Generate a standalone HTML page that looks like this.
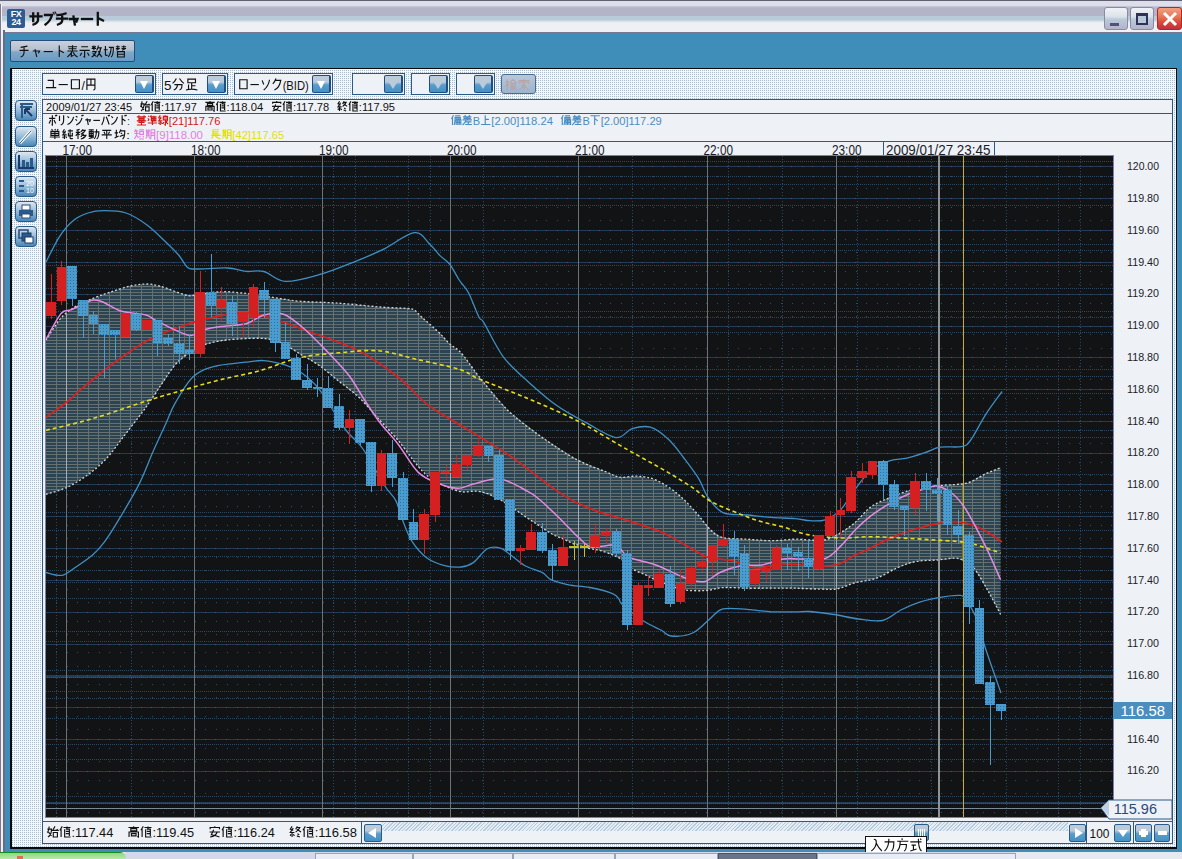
<!DOCTYPE html>
<html><head><meta charset="utf-8"><title>サブチャート</title>
<style>
*{box-sizing:border-box}
html,body{margin:0;padding:0}
body{width:1182px;height:859px;overflow:hidden;position:relative;background:#3f8db9;font-family:"Liberation Sans",sans-serif;color:#111}
.a{position:absolute}
.dd{position:absolute;top:73px;height:22px;background:#eef2f6;border:1px solid #2c5a8a;font-size:13px;line-height:20px;padding-left:3px;color:#1a1a1a;white-space:nowrap;overflow:hidden}
.ddb{position:absolute;top:1px;right:1px;width:19px;height:18px;border:1px solid #1e4e86;border-right-width:2px;border-radius:2px;background:linear-gradient(#bccbd9 0,#bccbd9 38%,#5a9ccb 55%,#4292c4 100%)}
.ddb:after{content:"";position:absolute;left:4px;top:5px;border-left:4px solid transparent;border-right:4px solid transparent;border-top:8px solid #fff}
.ddb.e:after{border-top-color:#bccbd9;left:3px;border-left-width:5px;border-right-width:5px}
.ico{position:absolute;left:15px;width:22px;height:21px;border:1px solid #2a5a8a;border-radius:4px;background:linear-gradient(#dfe8f0,#9cc0dc 45%,#4a88b8)}
.pl{position:absolute;left:1127px;font-size:11px;line-height:12px;color:#1a1a2a;letter-spacing:-0.3px}
.tl{position:absolute;top:143px;font-size:13px;line-height:14px;color:#1a1a2a;letter-spacing:-0.6px}
.t11{font-size:11px;line-height:13px;letter-spacing:-0.2px;white-space:nowrap}
.btn{position:absolute;border:1px solid #2a5a8a;border-radius:2px;background:linear-gradient(#bccbd9 0,#bccbd9 35%,#5a9ccb 55%,#4292c4 100%)}
.tab{position:absolute;top:853px;height:6px;background:#e8ecf4;border:1px solid #9aa4b8;border-bottom:none}
</style></head><body>
<!-- title bar -->
<div class="a" style="left:0;top:0;width:1182px;height:34px;background:linear-gradient(#606072 0,#606072 1px,#dcdfe9 1px,#dcdfe9 6px,#c8c8d8 6px,#b4b4c8 8px,#b4b4c8 16px,#b9cbd8 16px,#b9cbd8 20px,#d6e0e8 21px,#eef0f4 23px,#eef0f4 32px,#787896 32px,#787896 34px)"></div>
<!-- window left border -->
<div class="a" style="left:0;top:4px;width:2px;height:30px;background:linear-gradient(90deg,#7a7a8c 0,#7a7a8c 1px,#f4f4f8 1px)"></div>
<div class="a" style="left:0;top:30px;width:5px;height:829px;background:linear-gradient(90deg,#7a7a8c 0,#7a7a8c 1px,#eef0f4 1px,#eef0f4 3px,#6a6a80 3px,#6a6a80 5px)"></div>
<!-- FX24 icon -->
<div class="a" style="left:7px;top:9px;width:18px;height:19px;background:#2c5c92;border-radius:2px;color:#fff;font-weight:bold;font-size:9px;line-height:8px;text-align:center;padding-top:1px;letter-spacing:-0.5px">FX<br>24</div>

<!-- window buttons -->
<div class="a" style="left:1104px;top:7px;width:24px;height:23px;border:1px solid #8a8aa8;border-radius:3px;background:linear-gradient(#f0f2f6,#dde2ea 40%,#b8cad8 55%,#b4b4c8)"><div class="a" style="left:5px;top:15px;width:9px;height:3px;background:#50507a"></div></div>
<div class="a" style="left:1130px;top:7px;width:24px;height:23px;border:1px solid #8a8aa8;border-radius:3px;background:linear-gradient(#f0f2f6,#dde2ea 40%,#b8cad8 55%,#b4b4c8)"><div class="a" style="left:5px;top:5px;width:12px;height:12px;border:2px solid #30305a;border-top-width:3px;background:#b8cad8"></div></div>
<div class="a" style="left:1157px;top:7px;width:25px;height:23px;border:1px solid #c02020;border-radius:3px;background:linear-gradient(#f0a080,#e87858 40%,#d84838 70%,#c03040)"><svg class="a" style="left:4px;top:3px" width="16" height="16"><path d="M2,2 L14,14 M14,2 L2,14" stroke="#fff" stroke-width="3"/></svg></div>

<!-- top button -->
<div class="a" style="left:10px;top:40px;width:125px;height:22px;border:1px solid #2a4a78;border-radius:2px;background:linear-gradient(#c8d0dc,#b4c0d0 45%,#80a8c8 55%,#6a9cc4);font-size:13px;line-height:20px;padding-left:4px;color:#111;letter-spacing:-0.5px;white-space:nowrap"></div>

<!-- main panel -->
<div class="a" style="left:10px;top:68px;width:1167px;height:781px;background:#e2e8ef;border-left:2px solid #0a0a0a;border-top:1px solid #0a0a0a;border-right:1px solid #0a0a0a;border-bottom:2px solid #0a0a0a"></div>
<svg class="a" style="left:12px;top:69px" width="1164" height="778"><defs><pattern id="pdots" patternUnits="userSpaceOnUse" width="2" height="2"><rect width="2" height="2" fill="#f4f6f9"/><rect x="0" y="1" width="1" height="1" fill="#a8bcd0"/></pattern></defs><rect width="1164" height="778" fill="url(#pdots)"/></svg>

<!-- dropdowns -->
<div class="dd" style="left:42px;width:114px"><div class="ddb"></div></div>
<div class="dd" style="left:162px;width:66px"><div class="ddb"></div></div>
<div class="dd" style="left:234px;width:99px"><div class="ddb"></div></div>
<div class="dd" style="left:352px;width:53px"><div class="ddb e"></div></div>
<div class="dd" style="left:411px;width:39px"><div class="ddb e"></div></div>
<div class="dd" style="left:456px;width:39px"><div class="ddb e"></div></div>
<div class="a" style="left:501px;top:74px;width:35px;height:20px;border:1px solid #4a6a90;border-radius:3px;background:linear-gradient(#b8c8d8,#9cb4cc);font-size:12px;line-height:18px;text-align:center;color:#c0a8a8"></div>

<!-- left icons -->
<div class="ico" style="top:100px"><svg class="a" style="left:0;top:0" width="20" height="19"><path d="M4,3 H17 M6,3 V17 M4,6 H16" stroke="#2a5a8a" stroke-width="2" fill="none"/><path d="M9,8 L16,15 M9,8 V13 M9,8 H14" stroke="#1a3a6a" stroke-width="2" fill="none"/></svg></div>
<div class="ico" style="top:126px"><svg class="a" style="left:0;top:0" width="20" height="19"><path d="M4,16 L15,4" stroke="#fff" stroke-width="3"/><path d="M4,16 L15,4" stroke="#2a5a8a" stroke-width="1"/></svg></div>
<div class="ico" style="top:151px"><svg class="a" style="left:0;top:0" width="20" height="19"><path d="M3,3 V16 H18" stroke="#1a3a6a" stroke-width="2" fill="none"/><rect x="6" y="8" width="3" height="7" fill="#2a5a8a"/><rect x="10" y="10" width="3" height="5" fill="#2a5a8a"/><rect x="14" y="6" width="3" height="9" fill="#2a5a8a"/></svg></div>
<div class="ico" style="top:176px"><svg class="a" style="left:0;top:0" width="20" height="19"><path d="M3,4 H8 M3,9 H8 M3,14 H8" stroke="#2a5a8a" stroke-width="2"/><text x="10" y="9" font-size="7" fill="#fff" font-family="Liberation Sans">20</text><text x="10" y="16" font-size="7" fill="#fff" font-family="Liberation Sans">10</text></svg></div>
<div class="ico" style="top:201px"><svg class="a" style="left:0;top:0" width="20" height="19"><rect x="6" y="3" width="8" height="5" fill="#fff" stroke="#2a4a7a"/><rect x="3" y="8" width="14" height="6" fill="#2a5a8a"/><rect x="6" y="12" width="8" height="4" fill="#fff" stroke="#2a4a7a"/></svg></div>
<div class="ico" style="top:226px"><svg class="a" style="left:0;top:0" width="20" height="19"><rect x="3" y="3" width="9" height="8" fill="none" stroke="#2a4a7a" stroke-width="1.5"/><rect x="6" y="6" width="9" height="8" fill="#2a5a8a" stroke="#1a3a6a"/><rect x="9" y="10" width="8" height="6" fill="#fff" stroke="#1a3a6a"/></svg></div>

<!-- info box -->
<div class="a" style="left:42px;top:99px;width:1131px;height:43px;background:#eef2f6;border:1px solid #2a5a8a"></div>
<div class="a" style="left:43px;top:113px;width:1129px;height:1px;background:#2a5a8a"></div>

<!-- time axis & chart frame area -->
<div class="a" style="left:42px;top:141px;width:1131px;height:681px;background:#eef2f6;border-left:1px solid #2a5a8a;border-right:1px solid #2a5a8a"></div>
<div class="a" style="left:43px;top:141px;width:1129px;height:1px;background:#2a5a8a"></div>
<div class="a" style="left:883px;top:141px;width:112px;height:15px;border:1px solid #2a5a8a;background:#eef2f6"></div>
<!-- chart border -->
<div class="a" style="left:45px;top:155px;width:1069px;height:663px;border:1px solid #7e80ac"></div>
<svg width="1067" height="661" viewBox="46 156 1067 661" style="position:absolute;left:46px;top:156px;display:block" shape-rendering="crispEdges">
<defs>
<pattern id="band" patternUnits="userSpaceOnUse" x="0" y="0" width="10.667" height="6">
<rect x="0" y="0" width="10.667" height="6" fill="#2f4653"/>
<rect x="0" y="0" width="10.667" height="1" fill="#6a7474"/>
<rect x="0" y="3" width="10.667" height="1" fill="#6a7474"/>
<rect x="0" y="0" width="1" height="6" fill="#6a7474"/>
</pattern>
<pattern id="bdots" patternUnits="userSpaceOnUse" width="3" height="3">
<rect width="3" height="3" fill="#4a9cce"/>
<rect x="1" y="1" width="1" height="1" fill="#2f6f9f"/>
</pattern>
</defs>
<rect x="46" y="156" width="1067" height="661" fill="#111314"/>
<line x1="46" y1="161.5" x2="1113" y2="161.5" stroke="#26486a" stroke-width="1" stroke-dasharray="1 1"/>
<line x1="46" y1="176.5" x2="1113" y2="176.5" stroke="#26486a" stroke-width="1" stroke-dasharray="1 1"/>
<line x1="46" y1="184.5" x2="1113" y2="184.5" stroke="#26486a" stroke-width="1" stroke-dasharray="1 1"/>
<path d="M56,176h1v1h-1zM67,176h1v1h-1zM77,176h1v1h-1zM88,176h1v1h-1zM99,176h1v1h-1zM109,176h1v1h-1zM120,176h1v1h-1zM131,176h1v1h-1zM141,176h1v1h-1zM152,176h1v1h-1zM163,176h1v1h-1zM173,176h1v1h-1zM184,176h1v1h-1zM195,176h1v1h-1zM205,176h1v1h-1zM216,176h1v1h-1zM227,176h1v1h-1zM237,176h1v1h-1zM248,176h1v1h-1zM259,176h1v1h-1zM269,176h1v1h-1zM280,176h1v1h-1zM291,176h1v1h-1zM301,176h1v1h-1zM312,176h1v1h-1zM323,176h1v1h-1zM333,176h1v1h-1zM344,176h1v1h-1zM354,176h1v1h-1zM365,176h1v1h-1zM376,176h1v1h-1zM386,176h1v1h-1zM397,176h1v1h-1zM408,176h1v1h-1zM418,176h1v1h-1zM429,176h1v1h-1zM440,176h1v1h-1zM450,176h1v1h-1zM461,176h1v1h-1zM472,176h1v1h-1zM482,176h1v1h-1zM493,176h1v1h-1zM504,176h1v1h-1zM514,176h1v1h-1zM525,176h1v1h-1zM536,176h1v1h-1zM546,176h1v1h-1zM557,176h1v1h-1zM568,176h1v1h-1zM578,176h1v1h-1zM589,176h1v1h-1zM600,176h1v1h-1zM610,176h1v1h-1zM621,176h1v1h-1zM632,176h1v1h-1zM642,176h1v1h-1zM653,176h1v1h-1zM664,176h1v1h-1zM674,176h1v1h-1zM685,176h1v1h-1zM696,176h1v1h-1zM706,176h1v1h-1zM717,176h1v1h-1zM728,176h1v1h-1zM738,176h1v1h-1zM749,176h1v1h-1zM760,176h1v1h-1zM770,176h1v1h-1zM781,176h1v1h-1zM792,176h1v1h-1zM802,176h1v1h-1zM813,176h1v1h-1zM824,176h1v1h-1zM834,176h1v1h-1zM845,176h1v1h-1zM856,176h1v1h-1zM866,176h1v1h-1zM877,176h1v1h-1zM887,176h1v1h-1zM898,176h1v1h-1zM909,176h1v1h-1zM919,176h1v1h-1zM930,176h1v1h-1zM941,176h1v1h-1zM951,176h1v1h-1zM962,176h1v1h-1zM973,176h1v1h-1zM983,176h1v1h-1zM994,176h1v1h-1zM1005,176h1v1h-1zM1015,176h1v1h-1zM1026,176h1v1h-1zM1037,176h1v1h-1zM1047,176h1v1h-1zM1058,176h1v1h-1zM1069,176h1v1h-1zM1079,176h1v1h-1zM1090,176h1v1h-1zM1101,176h1v1h-1zM1111,176h1v1h-1z" fill="#2c5070"/>
<path d="M56,188h1v1h-1zM67,188h1v1h-1zM77,188h1v1h-1zM88,188h1v1h-1zM99,188h1v1h-1zM109,188h1v1h-1zM120,188h1v1h-1zM131,188h1v1h-1zM141,188h1v1h-1zM152,188h1v1h-1zM163,188h1v1h-1zM173,188h1v1h-1zM184,188h1v1h-1zM195,188h1v1h-1zM205,188h1v1h-1zM216,188h1v1h-1zM227,188h1v1h-1zM237,188h1v1h-1zM248,188h1v1h-1zM259,188h1v1h-1zM269,188h1v1h-1zM280,188h1v1h-1zM291,188h1v1h-1zM301,188h1v1h-1zM312,188h1v1h-1zM323,188h1v1h-1zM333,188h1v1h-1zM344,188h1v1h-1zM354,188h1v1h-1zM365,188h1v1h-1zM376,188h1v1h-1zM386,188h1v1h-1zM397,188h1v1h-1zM408,188h1v1h-1zM418,188h1v1h-1zM429,188h1v1h-1zM440,188h1v1h-1zM450,188h1v1h-1zM461,188h1v1h-1zM472,188h1v1h-1zM482,188h1v1h-1zM493,188h1v1h-1zM504,188h1v1h-1zM514,188h1v1h-1zM525,188h1v1h-1zM536,188h1v1h-1zM546,188h1v1h-1zM557,188h1v1h-1zM568,188h1v1h-1zM578,188h1v1h-1zM589,188h1v1h-1zM600,188h1v1h-1zM610,188h1v1h-1zM621,188h1v1h-1zM632,188h1v1h-1zM642,188h1v1h-1zM653,188h1v1h-1zM664,188h1v1h-1zM674,188h1v1h-1zM685,188h1v1h-1zM696,188h1v1h-1zM706,188h1v1h-1zM717,188h1v1h-1zM728,188h1v1h-1zM738,188h1v1h-1zM749,188h1v1h-1zM760,188h1v1h-1zM770,188h1v1h-1zM781,188h1v1h-1zM792,188h1v1h-1zM802,188h1v1h-1zM813,188h1v1h-1zM824,188h1v1h-1zM834,188h1v1h-1zM845,188h1v1h-1zM856,188h1v1h-1zM866,188h1v1h-1zM877,188h1v1h-1zM887,188h1v1h-1zM898,188h1v1h-1zM909,188h1v1h-1zM919,188h1v1h-1zM930,188h1v1h-1zM941,188h1v1h-1zM951,188h1v1h-1zM962,188h1v1h-1zM973,188h1v1h-1zM983,188h1v1h-1zM994,188h1v1h-1zM1005,188h1v1h-1zM1015,188h1v1h-1zM1026,188h1v1h-1zM1037,188h1v1h-1zM1047,188h1v1h-1zM1058,188h1v1h-1zM1069,188h1v1h-1zM1079,188h1v1h-1zM1090,188h1v1h-1zM1101,188h1v1h-1zM1111,188h1v1h-1z" fill="#2c5070"/>
<line x1="46" y1="205.5" x2="1113" y2="205.5" stroke="#26486a" stroke-width="1" stroke-dasharray="1 1"/>
<path d="M56,207h1v1h-1zM67,207h1v1h-1zM77,207h1v1h-1zM88,207h1v1h-1zM99,207h1v1h-1zM109,207h1v1h-1zM120,207h1v1h-1zM131,207h1v1h-1zM141,207h1v1h-1zM152,207h1v1h-1zM163,207h1v1h-1zM173,207h1v1h-1zM184,207h1v1h-1zM195,207h1v1h-1zM205,207h1v1h-1zM216,207h1v1h-1zM227,207h1v1h-1zM237,207h1v1h-1zM248,207h1v1h-1zM259,207h1v1h-1zM269,207h1v1h-1zM280,207h1v1h-1zM291,207h1v1h-1zM301,207h1v1h-1zM312,207h1v1h-1zM323,207h1v1h-1zM333,207h1v1h-1zM344,207h1v1h-1zM354,207h1v1h-1zM365,207h1v1h-1zM376,207h1v1h-1zM386,207h1v1h-1zM397,207h1v1h-1zM408,207h1v1h-1zM418,207h1v1h-1zM429,207h1v1h-1zM440,207h1v1h-1zM450,207h1v1h-1zM461,207h1v1h-1zM472,207h1v1h-1zM482,207h1v1h-1zM493,207h1v1h-1zM504,207h1v1h-1zM514,207h1v1h-1zM525,207h1v1h-1zM536,207h1v1h-1zM546,207h1v1h-1zM557,207h1v1h-1zM568,207h1v1h-1zM578,207h1v1h-1zM589,207h1v1h-1zM600,207h1v1h-1zM610,207h1v1h-1zM621,207h1v1h-1zM632,207h1v1h-1zM642,207h1v1h-1zM653,207h1v1h-1zM664,207h1v1h-1zM674,207h1v1h-1zM685,207h1v1h-1zM696,207h1v1h-1zM706,207h1v1h-1zM717,207h1v1h-1zM728,207h1v1h-1zM738,207h1v1h-1zM749,207h1v1h-1zM760,207h1v1h-1zM770,207h1v1h-1zM781,207h1v1h-1zM792,207h1v1h-1zM802,207h1v1h-1zM813,207h1v1h-1zM824,207h1v1h-1zM834,207h1v1h-1zM845,207h1v1h-1zM856,207h1v1h-1zM866,207h1v1h-1zM877,207h1v1h-1zM887,207h1v1h-1zM898,207h1v1h-1zM909,207h1v1h-1zM919,207h1v1h-1zM930,207h1v1h-1zM941,207h1v1h-1zM951,207h1v1h-1zM962,207h1v1h-1zM973,207h1v1h-1zM983,207h1v1h-1zM994,207h1v1h-1zM1005,207h1v1h-1zM1015,207h1v1h-1zM1026,207h1v1h-1zM1037,207h1v1h-1zM1047,207h1v1h-1zM1058,207h1v1h-1zM1069,207h1v1h-1zM1079,207h1v1h-1zM1090,207h1v1h-1zM1101,207h1v1h-1zM1111,207h1v1h-1z" fill="#2c5070"/>
<path d="M56,220h1v1h-1zM67,220h1v1h-1zM77,220h1v1h-1zM88,220h1v1h-1zM99,220h1v1h-1zM109,220h1v1h-1zM120,220h1v1h-1zM131,220h1v1h-1zM141,220h1v1h-1zM152,220h1v1h-1zM163,220h1v1h-1zM173,220h1v1h-1zM184,220h1v1h-1zM195,220h1v1h-1zM205,220h1v1h-1zM216,220h1v1h-1zM227,220h1v1h-1zM237,220h1v1h-1zM248,220h1v1h-1zM259,220h1v1h-1zM269,220h1v1h-1zM280,220h1v1h-1zM291,220h1v1h-1zM301,220h1v1h-1zM312,220h1v1h-1zM323,220h1v1h-1zM333,220h1v1h-1zM344,220h1v1h-1zM354,220h1v1h-1zM365,220h1v1h-1zM376,220h1v1h-1zM386,220h1v1h-1zM397,220h1v1h-1zM408,220h1v1h-1zM418,220h1v1h-1zM429,220h1v1h-1zM440,220h1v1h-1zM450,220h1v1h-1zM461,220h1v1h-1zM472,220h1v1h-1zM482,220h1v1h-1zM493,220h1v1h-1zM504,220h1v1h-1zM514,220h1v1h-1zM525,220h1v1h-1zM536,220h1v1h-1zM546,220h1v1h-1zM557,220h1v1h-1zM568,220h1v1h-1zM578,220h1v1h-1zM589,220h1v1h-1zM600,220h1v1h-1zM610,220h1v1h-1zM621,220h1v1h-1zM632,220h1v1h-1zM642,220h1v1h-1zM653,220h1v1h-1zM664,220h1v1h-1zM674,220h1v1h-1zM685,220h1v1h-1zM696,220h1v1h-1zM706,220h1v1h-1zM717,220h1v1h-1zM728,220h1v1h-1zM738,220h1v1h-1zM749,220h1v1h-1zM760,220h1v1h-1zM770,220h1v1h-1zM781,220h1v1h-1zM792,220h1v1h-1zM802,220h1v1h-1zM813,220h1v1h-1zM824,220h1v1h-1zM834,220h1v1h-1zM845,220h1v1h-1zM856,220h1v1h-1zM866,220h1v1h-1zM877,220h1v1h-1zM887,220h1v1h-1zM898,220h1v1h-1zM909,220h1v1h-1zM919,220h1v1h-1zM930,220h1v1h-1zM941,220h1v1h-1zM951,220h1v1h-1zM962,220h1v1h-1zM973,220h1v1h-1zM983,220h1v1h-1zM994,220h1v1h-1zM1005,220h1v1h-1zM1015,220h1v1h-1zM1026,220h1v1h-1zM1037,220h1v1h-1zM1047,220h1v1h-1zM1058,220h1v1h-1zM1069,220h1v1h-1zM1079,220h1v1h-1zM1090,220h1v1h-1zM1101,220h1v1h-1zM1111,220h1v1h-1z" fill="#2c5070"/>
<line x1="46" y1="244.5" x2="1113" y2="244.5" stroke="#26486a" stroke-width="1" stroke-dasharray="1 1"/>
<line x1="46" y1="250.5" x2="1113" y2="250.5" stroke="#26486a" stroke-width="1" stroke-dasharray="1 1"/>
<path d="M56,239h1v1h-1zM67,239h1v1h-1zM77,239h1v1h-1zM88,239h1v1h-1zM99,239h1v1h-1zM109,239h1v1h-1zM120,239h1v1h-1zM131,239h1v1h-1zM141,239h1v1h-1zM152,239h1v1h-1zM163,239h1v1h-1zM173,239h1v1h-1zM184,239h1v1h-1zM195,239h1v1h-1zM205,239h1v1h-1zM216,239h1v1h-1zM227,239h1v1h-1zM237,239h1v1h-1zM248,239h1v1h-1zM259,239h1v1h-1zM269,239h1v1h-1zM280,239h1v1h-1zM291,239h1v1h-1zM301,239h1v1h-1zM312,239h1v1h-1zM323,239h1v1h-1zM333,239h1v1h-1zM344,239h1v1h-1zM354,239h1v1h-1zM365,239h1v1h-1zM376,239h1v1h-1zM386,239h1v1h-1zM397,239h1v1h-1zM408,239h1v1h-1zM418,239h1v1h-1zM429,239h1v1h-1zM440,239h1v1h-1zM450,239h1v1h-1zM461,239h1v1h-1zM472,239h1v1h-1zM482,239h1v1h-1zM493,239h1v1h-1zM504,239h1v1h-1zM514,239h1v1h-1zM525,239h1v1h-1zM536,239h1v1h-1zM546,239h1v1h-1zM557,239h1v1h-1zM568,239h1v1h-1zM578,239h1v1h-1zM589,239h1v1h-1zM600,239h1v1h-1zM610,239h1v1h-1zM621,239h1v1h-1zM632,239h1v1h-1zM642,239h1v1h-1zM653,239h1v1h-1zM664,239h1v1h-1zM674,239h1v1h-1zM685,239h1v1h-1zM696,239h1v1h-1zM706,239h1v1h-1zM717,239h1v1h-1zM728,239h1v1h-1zM738,239h1v1h-1zM749,239h1v1h-1zM760,239h1v1h-1zM770,239h1v1h-1zM781,239h1v1h-1zM792,239h1v1h-1zM802,239h1v1h-1zM813,239h1v1h-1zM824,239h1v1h-1zM834,239h1v1h-1zM845,239h1v1h-1zM856,239h1v1h-1zM866,239h1v1h-1zM877,239h1v1h-1zM887,239h1v1h-1zM898,239h1v1h-1zM909,239h1v1h-1zM919,239h1v1h-1zM930,239h1v1h-1zM941,239h1v1h-1zM951,239h1v1h-1zM962,239h1v1h-1zM973,239h1v1h-1zM983,239h1v1h-1zM994,239h1v1h-1zM1005,239h1v1h-1zM1015,239h1v1h-1zM1026,239h1v1h-1zM1037,239h1v1h-1zM1047,239h1v1h-1zM1058,239h1v1h-1zM1069,239h1v1h-1zM1079,239h1v1h-1zM1090,239h1v1h-1zM1101,239h1v1h-1zM1111,239h1v1h-1z" fill="#2c5070"/>
<path d="M56,252h1v1h-1zM67,252h1v1h-1zM77,252h1v1h-1zM88,252h1v1h-1zM99,252h1v1h-1zM109,252h1v1h-1zM120,252h1v1h-1zM131,252h1v1h-1zM141,252h1v1h-1zM152,252h1v1h-1zM163,252h1v1h-1zM173,252h1v1h-1zM184,252h1v1h-1zM195,252h1v1h-1zM205,252h1v1h-1zM216,252h1v1h-1zM227,252h1v1h-1zM237,252h1v1h-1zM248,252h1v1h-1zM259,252h1v1h-1zM269,252h1v1h-1zM280,252h1v1h-1zM291,252h1v1h-1zM301,252h1v1h-1zM312,252h1v1h-1zM323,252h1v1h-1zM333,252h1v1h-1zM344,252h1v1h-1zM354,252h1v1h-1zM365,252h1v1h-1zM376,252h1v1h-1zM386,252h1v1h-1zM397,252h1v1h-1zM408,252h1v1h-1zM418,252h1v1h-1zM429,252h1v1h-1zM440,252h1v1h-1zM450,252h1v1h-1zM461,252h1v1h-1zM472,252h1v1h-1zM482,252h1v1h-1zM493,252h1v1h-1zM504,252h1v1h-1zM514,252h1v1h-1zM525,252h1v1h-1zM536,252h1v1h-1zM546,252h1v1h-1zM557,252h1v1h-1zM568,252h1v1h-1zM578,252h1v1h-1zM589,252h1v1h-1zM600,252h1v1h-1zM610,252h1v1h-1zM621,252h1v1h-1zM632,252h1v1h-1zM642,252h1v1h-1zM653,252h1v1h-1zM664,252h1v1h-1zM674,252h1v1h-1zM685,252h1v1h-1zM696,252h1v1h-1zM706,252h1v1h-1zM717,252h1v1h-1zM728,252h1v1h-1zM738,252h1v1h-1zM749,252h1v1h-1zM760,252h1v1h-1zM770,252h1v1h-1zM781,252h1v1h-1zM792,252h1v1h-1zM802,252h1v1h-1zM813,252h1v1h-1zM824,252h1v1h-1zM834,252h1v1h-1zM845,252h1v1h-1zM856,252h1v1h-1zM866,252h1v1h-1zM877,252h1v1h-1zM887,252h1v1h-1zM898,252h1v1h-1zM909,252h1v1h-1zM919,252h1v1h-1zM930,252h1v1h-1zM941,252h1v1h-1zM951,252h1v1h-1zM962,252h1v1h-1zM973,252h1v1h-1zM983,252h1v1h-1zM994,252h1v1h-1zM1005,252h1v1h-1zM1015,252h1v1h-1zM1026,252h1v1h-1zM1037,252h1v1h-1zM1047,252h1v1h-1zM1058,252h1v1h-1zM1069,252h1v1h-1zM1079,252h1v1h-1zM1090,252h1v1h-1zM1101,252h1v1h-1zM1111,252h1v1h-1z" fill="#2c5070"/>
<line x1="46" y1="265.5" x2="1113" y2="265.5" stroke="#26486a" stroke-width="1" stroke-dasharray="1 1"/>
<line x1="46" y1="288.5" x2="1113" y2="288.5" stroke="#26486a" stroke-width="1" stroke-dasharray="1 1"/>
<path d="M56,271h1v1h-1zM67,271h1v1h-1zM77,271h1v1h-1zM88,271h1v1h-1zM99,271h1v1h-1zM109,271h1v1h-1zM120,271h1v1h-1zM131,271h1v1h-1zM141,271h1v1h-1zM152,271h1v1h-1zM163,271h1v1h-1zM173,271h1v1h-1zM184,271h1v1h-1zM195,271h1v1h-1zM205,271h1v1h-1zM216,271h1v1h-1zM227,271h1v1h-1zM237,271h1v1h-1zM248,271h1v1h-1zM259,271h1v1h-1zM269,271h1v1h-1zM280,271h1v1h-1zM291,271h1v1h-1zM301,271h1v1h-1zM312,271h1v1h-1zM323,271h1v1h-1zM333,271h1v1h-1zM344,271h1v1h-1zM354,271h1v1h-1zM365,271h1v1h-1zM376,271h1v1h-1zM386,271h1v1h-1zM397,271h1v1h-1zM408,271h1v1h-1zM418,271h1v1h-1zM429,271h1v1h-1zM440,271h1v1h-1zM450,271h1v1h-1zM461,271h1v1h-1zM472,271h1v1h-1zM482,271h1v1h-1zM493,271h1v1h-1zM504,271h1v1h-1zM514,271h1v1h-1zM525,271h1v1h-1zM536,271h1v1h-1zM546,271h1v1h-1zM557,271h1v1h-1zM568,271h1v1h-1zM578,271h1v1h-1zM589,271h1v1h-1zM600,271h1v1h-1zM610,271h1v1h-1zM621,271h1v1h-1zM632,271h1v1h-1zM642,271h1v1h-1zM653,271h1v1h-1zM664,271h1v1h-1zM674,271h1v1h-1zM685,271h1v1h-1zM696,271h1v1h-1zM706,271h1v1h-1zM717,271h1v1h-1zM728,271h1v1h-1zM738,271h1v1h-1zM749,271h1v1h-1zM760,271h1v1h-1zM770,271h1v1h-1zM781,271h1v1h-1zM792,271h1v1h-1zM802,271h1v1h-1zM813,271h1v1h-1zM824,271h1v1h-1zM834,271h1v1h-1zM845,271h1v1h-1zM856,271h1v1h-1zM866,271h1v1h-1zM877,271h1v1h-1zM887,271h1v1h-1zM898,271h1v1h-1zM909,271h1v1h-1zM919,271h1v1h-1zM930,271h1v1h-1zM941,271h1v1h-1zM951,271h1v1h-1zM962,271h1v1h-1zM973,271h1v1h-1zM983,271h1v1h-1zM994,271h1v1h-1zM1005,271h1v1h-1zM1015,271h1v1h-1zM1026,271h1v1h-1zM1037,271h1v1h-1zM1047,271h1v1h-1zM1058,271h1v1h-1zM1069,271h1v1h-1zM1079,271h1v1h-1zM1090,271h1v1h-1zM1101,271h1v1h-1zM1111,271h1v1h-1z" fill="#2c5070"/>
<path d="M56,284h1v1h-1zM67,284h1v1h-1zM77,284h1v1h-1zM88,284h1v1h-1zM99,284h1v1h-1zM109,284h1v1h-1zM120,284h1v1h-1zM131,284h1v1h-1zM141,284h1v1h-1zM152,284h1v1h-1zM163,284h1v1h-1zM173,284h1v1h-1zM184,284h1v1h-1zM195,284h1v1h-1zM205,284h1v1h-1zM216,284h1v1h-1zM227,284h1v1h-1zM237,284h1v1h-1zM248,284h1v1h-1zM259,284h1v1h-1zM269,284h1v1h-1zM280,284h1v1h-1zM291,284h1v1h-1zM301,284h1v1h-1zM312,284h1v1h-1zM323,284h1v1h-1zM333,284h1v1h-1zM344,284h1v1h-1zM354,284h1v1h-1zM365,284h1v1h-1zM376,284h1v1h-1zM386,284h1v1h-1zM397,284h1v1h-1zM408,284h1v1h-1zM418,284h1v1h-1zM429,284h1v1h-1zM440,284h1v1h-1zM450,284h1v1h-1zM461,284h1v1h-1zM472,284h1v1h-1zM482,284h1v1h-1zM493,284h1v1h-1zM504,284h1v1h-1zM514,284h1v1h-1zM525,284h1v1h-1zM536,284h1v1h-1zM546,284h1v1h-1zM557,284h1v1h-1zM568,284h1v1h-1zM578,284h1v1h-1zM589,284h1v1h-1zM600,284h1v1h-1zM610,284h1v1h-1zM621,284h1v1h-1zM632,284h1v1h-1zM642,284h1v1h-1zM653,284h1v1h-1zM664,284h1v1h-1zM674,284h1v1h-1zM685,284h1v1h-1zM696,284h1v1h-1zM706,284h1v1h-1zM717,284h1v1h-1zM728,284h1v1h-1zM738,284h1v1h-1zM749,284h1v1h-1zM760,284h1v1h-1zM770,284h1v1h-1zM781,284h1v1h-1zM792,284h1v1h-1zM802,284h1v1h-1zM813,284h1v1h-1zM824,284h1v1h-1zM834,284h1v1h-1zM845,284h1v1h-1zM856,284h1v1h-1zM866,284h1v1h-1zM877,284h1v1h-1zM887,284h1v1h-1zM898,284h1v1h-1zM909,284h1v1h-1zM919,284h1v1h-1zM930,284h1v1h-1zM941,284h1v1h-1zM951,284h1v1h-1zM962,284h1v1h-1zM973,284h1v1h-1zM983,284h1v1h-1zM994,284h1v1h-1zM1005,284h1v1h-1zM1015,284h1v1h-1zM1026,284h1v1h-1zM1037,284h1v1h-1zM1047,284h1v1h-1zM1058,284h1v1h-1zM1069,284h1v1h-1zM1079,284h1v1h-1zM1090,284h1v1h-1zM1101,284h1v1h-1zM1111,284h1v1h-1z" fill="#2c5070"/>
<line x1="46" y1="311.5" x2="1113" y2="311.5" stroke="#26486a" stroke-width="1" stroke-dasharray="1 1"/>
<line x1="46" y1="317.5" x2="1113" y2="317.5" stroke="#26486a" stroke-width="1" stroke-dasharray="1 1"/>
<path d="M56,303h1v1h-1zM67,303h1v1h-1zM77,303h1v1h-1zM88,303h1v1h-1zM99,303h1v1h-1zM109,303h1v1h-1zM120,303h1v1h-1zM131,303h1v1h-1zM141,303h1v1h-1zM152,303h1v1h-1zM163,303h1v1h-1zM173,303h1v1h-1zM184,303h1v1h-1zM195,303h1v1h-1zM205,303h1v1h-1zM216,303h1v1h-1zM227,303h1v1h-1zM237,303h1v1h-1zM248,303h1v1h-1zM259,303h1v1h-1zM269,303h1v1h-1zM280,303h1v1h-1zM291,303h1v1h-1zM301,303h1v1h-1zM312,303h1v1h-1zM323,303h1v1h-1zM333,303h1v1h-1zM344,303h1v1h-1zM354,303h1v1h-1zM365,303h1v1h-1zM376,303h1v1h-1zM386,303h1v1h-1zM397,303h1v1h-1zM408,303h1v1h-1zM418,303h1v1h-1zM429,303h1v1h-1zM440,303h1v1h-1zM450,303h1v1h-1zM461,303h1v1h-1zM472,303h1v1h-1zM482,303h1v1h-1zM493,303h1v1h-1zM504,303h1v1h-1zM514,303h1v1h-1zM525,303h1v1h-1zM536,303h1v1h-1zM546,303h1v1h-1zM557,303h1v1h-1zM568,303h1v1h-1zM578,303h1v1h-1zM589,303h1v1h-1zM600,303h1v1h-1zM610,303h1v1h-1zM621,303h1v1h-1zM632,303h1v1h-1zM642,303h1v1h-1zM653,303h1v1h-1zM664,303h1v1h-1zM674,303h1v1h-1zM685,303h1v1h-1zM696,303h1v1h-1zM706,303h1v1h-1zM717,303h1v1h-1zM728,303h1v1h-1zM738,303h1v1h-1zM749,303h1v1h-1zM760,303h1v1h-1zM770,303h1v1h-1zM781,303h1v1h-1zM792,303h1v1h-1zM802,303h1v1h-1zM813,303h1v1h-1zM824,303h1v1h-1zM834,303h1v1h-1zM845,303h1v1h-1zM856,303h1v1h-1zM866,303h1v1h-1zM877,303h1v1h-1zM887,303h1v1h-1zM898,303h1v1h-1zM909,303h1v1h-1zM919,303h1v1h-1zM930,303h1v1h-1zM941,303h1v1h-1zM951,303h1v1h-1zM962,303h1v1h-1zM973,303h1v1h-1zM983,303h1v1h-1zM994,303h1v1h-1zM1005,303h1v1h-1zM1015,303h1v1h-1zM1026,303h1v1h-1zM1037,303h1v1h-1zM1047,303h1v1h-1zM1058,303h1v1h-1zM1069,303h1v1h-1zM1079,303h1v1h-1zM1090,303h1v1h-1zM1101,303h1v1h-1zM1111,303h1v1h-1z" fill="#2c5070"/>
<path d="M56,316h1v1h-1zM67,316h1v1h-1zM77,316h1v1h-1zM88,316h1v1h-1zM99,316h1v1h-1zM109,316h1v1h-1zM120,316h1v1h-1zM131,316h1v1h-1zM141,316h1v1h-1zM152,316h1v1h-1zM163,316h1v1h-1zM173,316h1v1h-1zM184,316h1v1h-1zM195,316h1v1h-1zM205,316h1v1h-1zM216,316h1v1h-1zM227,316h1v1h-1zM237,316h1v1h-1zM248,316h1v1h-1zM259,316h1v1h-1zM269,316h1v1h-1zM280,316h1v1h-1zM291,316h1v1h-1zM301,316h1v1h-1zM312,316h1v1h-1zM323,316h1v1h-1zM333,316h1v1h-1zM344,316h1v1h-1zM354,316h1v1h-1zM365,316h1v1h-1zM376,316h1v1h-1zM386,316h1v1h-1zM397,316h1v1h-1zM408,316h1v1h-1zM418,316h1v1h-1zM429,316h1v1h-1zM440,316h1v1h-1zM450,316h1v1h-1zM461,316h1v1h-1zM472,316h1v1h-1zM482,316h1v1h-1zM493,316h1v1h-1zM504,316h1v1h-1zM514,316h1v1h-1zM525,316h1v1h-1zM536,316h1v1h-1zM546,316h1v1h-1zM557,316h1v1h-1zM568,316h1v1h-1zM578,316h1v1h-1zM589,316h1v1h-1zM600,316h1v1h-1zM610,316h1v1h-1zM621,316h1v1h-1zM632,316h1v1h-1zM642,316h1v1h-1zM653,316h1v1h-1zM664,316h1v1h-1zM674,316h1v1h-1zM685,316h1v1h-1zM696,316h1v1h-1zM706,316h1v1h-1zM717,316h1v1h-1zM728,316h1v1h-1zM738,316h1v1h-1zM749,316h1v1h-1zM760,316h1v1h-1zM770,316h1v1h-1zM781,316h1v1h-1zM792,316h1v1h-1zM802,316h1v1h-1zM813,316h1v1h-1zM824,316h1v1h-1zM834,316h1v1h-1zM845,316h1v1h-1zM856,316h1v1h-1zM866,316h1v1h-1zM877,316h1v1h-1zM887,316h1v1h-1zM898,316h1v1h-1zM909,316h1v1h-1zM919,316h1v1h-1zM930,316h1v1h-1zM941,316h1v1h-1zM951,316h1v1h-1zM962,316h1v1h-1zM973,316h1v1h-1zM983,316h1v1h-1zM994,316h1v1h-1zM1005,316h1v1h-1zM1015,316h1v1h-1zM1026,316h1v1h-1zM1037,316h1v1h-1zM1047,316h1v1h-1zM1058,316h1v1h-1zM1069,316h1v1h-1zM1079,316h1v1h-1zM1090,316h1v1h-1zM1101,316h1v1h-1zM1111,316h1v1h-1z" fill="#2c5070"/>
<line x1="46" y1="332.5" x2="1113" y2="332.5" stroke="#26486a" stroke-width="1" stroke-dasharray="1 1"/>
<path d="M56,334h1v1h-1zM67,334h1v1h-1zM77,334h1v1h-1zM88,334h1v1h-1zM99,334h1v1h-1zM109,334h1v1h-1zM120,334h1v1h-1zM131,334h1v1h-1zM141,334h1v1h-1zM152,334h1v1h-1zM163,334h1v1h-1zM173,334h1v1h-1zM184,334h1v1h-1zM195,334h1v1h-1zM205,334h1v1h-1zM216,334h1v1h-1zM227,334h1v1h-1zM237,334h1v1h-1zM248,334h1v1h-1zM259,334h1v1h-1zM269,334h1v1h-1zM280,334h1v1h-1zM291,334h1v1h-1zM301,334h1v1h-1zM312,334h1v1h-1zM323,334h1v1h-1zM333,334h1v1h-1zM344,334h1v1h-1zM354,334h1v1h-1zM365,334h1v1h-1zM376,334h1v1h-1zM386,334h1v1h-1zM397,334h1v1h-1zM408,334h1v1h-1zM418,334h1v1h-1zM429,334h1v1h-1zM440,334h1v1h-1zM450,334h1v1h-1zM461,334h1v1h-1zM472,334h1v1h-1zM482,334h1v1h-1zM493,334h1v1h-1zM504,334h1v1h-1zM514,334h1v1h-1zM525,334h1v1h-1zM536,334h1v1h-1zM546,334h1v1h-1zM557,334h1v1h-1zM568,334h1v1h-1zM578,334h1v1h-1zM589,334h1v1h-1zM600,334h1v1h-1zM610,334h1v1h-1zM621,334h1v1h-1zM632,334h1v1h-1zM642,334h1v1h-1zM653,334h1v1h-1zM664,334h1v1h-1zM674,334h1v1h-1zM685,334h1v1h-1zM696,334h1v1h-1zM706,334h1v1h-1zM717,334h1v1h-1zM728,334h1v1h-1zM738,334h1v1h-1zM749,334h1v1h-1zM760,334h1v1h-1zM770,334h1v1h-1zM781,334h1v1h-1zM792,334h1v1h-1zM802,334h1v1h-1zM813,334h1v1h-1zM824,334h1v1h-1zM834,334h1v1h-1zM845,334h1v1h-1zM856,334h1v1h-1zM866,334h1v1h-1zM877,334h1v1h-1zM887,334h1v1h-1zM898,334h1v1h-1zM909,334h1v1h-1zM919,334h1v1h-1zM930,334h1v1h-1zM941,334h1v1h-1zM951,334h1v1h-1zM962,334h1v1h-1zM973,334h1v1h-1zM983,334h1v1h-1zM994,334h1v1h-1zM1005,334h1v1h-1zM1015,334h1v1h-1zM1026,334h1v1h-1zM1037,334h1v1h-1zM1047,334h1v1h-1zM1058,334h1v1h-1zM1069,334h1v1h-1zM1079,334h1v1h-1zM1090,334h1v1h-1zM1101,334h1v1h-1zM1111,334h1v1h-1z" fill="#2c5070"/>
<path d="M56,348h1v1h-1zM67,348h1v1h-1zM77,348h1v1h-1zM88,348h1v1h-1zM99,348h1v1h-1zM109,348h1v1h-1zM120,348h1v1h-1zM131,348h1v1h-1zM141,348h1v1h-1zM152,348h1v1h-1zM163,348h1v1h-1zM173,348h1v1h-1zM184,348h1v1h-1zM195,348h1v1h-1zM205,348h1v1h-1zM216,348h1v1h-1zM227,348h1v1h-1zM237,348h1v1h-1zM248,348h1v1h-1zM259,348h1v1h-1zM269,348h1v1h-1zM280,348h1v1h-1zM291,348h1v1h-1zM301,348h1v1h-1zM312,348h1v1h-1zM323,348h1v1h-1zM333,348h1v1h-1zM344,348h1v1h-1zM354,348h1v1h-1zM365,348h1v1h-1zM376,348h1v1h-1zM386,348h1v1h-1zM397,348h1v1h-1zM408,348h1v1h-1zM418,348h1v1h-1zM429,348h1v1h-1zM440,348h1v1h-1zM450,348h1v1h-1zM461,348h1v1h-1zM472,348h1v1h-1zM482,348h1v1h-1zM493,348h1v1h-1zM504,348h1v1h-1zM514,348h1v1h-1zM525,348h1v1h-1zM536,348h1v1h-1zM546,348h1v1h-1zM557,348h1v1h-1zM568,348h1v1h-1zM578,348h1v1h-1zM589,348h1v1h-1zM600,348h1v1h-1zM610,348h1v1h-1zM621,348h1v1h-1zM632,348h1v1h-1zM642,348h1v1h-1zM653,348h1v1h-1zM664,348h1v1h-1zM674,348h1v1h-1zM685,348h1v1h-1zM696,348h1v1h-1zM706,348h1v1h-1zM717,348h1v1h-1zM728,348h1v1h-1zM738,348h1v1h-1zM749,348h1v1h-1zM760,348h1v1h-1zM770,348h1v1h-1zM781,348h1v1h-1zM792,348h1v1h-1zM802,348h1v1h-1zM813,348h1v1h-1zM824,348h1v1h-1zM834,348h1v1h-1zM845,348h1v1h-1zM856,348h1v1h-1zM866,348h1v1h-1zM877,348h1v1h-1zM887,348h1v1h-1zM898,348h1v1h-1zM909,348h1v1h-1zM919,348h1v1h-1zM930,348h1v1h-1zM941,348h1v1h-1zM951,348h1v1h-1zM962,348h1v1h-1zM973,348h1v1h-1zM983,348h1v1h-1zM994,348h1v1h-1zM1005,348h1v1h-1zM1015,348h1v1h-1zM1026,348h1v1h-1zM1037,348h1v1h-1zM1047,348h1v1h-1zM1058,348h1v1h-1zM1069,348h1v1h-1zM1079,348h1v1h-1zM1090,348h1v1h-1zM1101,348h1v1h-1zM1111,348h1v1h-1z" fill="#2c5070"/>
<line x1="46" y1="369.5" x2="1113" y2="369.5" stroke="#26486a" stroke-width="1" stroke-dasharray="1 1"/>
<line x1="46" y1="376.5" x2="1113" y2="376.5" stroke="#26486a" stroke-width="1" stroke-dasharray="1 1"/>
<path d="M56,366h1v1h-1zM67,366h1v1h-1zM77,366h1v1h-1zM88,366h1v1h-1zM99,366h1v1h-1zM109,366h1v1h-1zM120,366h1v1h-1zM131,366h1v1h-1zM141,366h1v1h-1zM152,366h1v1h-1zM163,366h1v1h-1zM173,366h1v1h-1zM184,366h1v1h-1zM195,366h1v1h-1zM205,366h1v1h-1zM216,366h1v1h-1zM227,366h1v1h-1zM237,366h1v1h-1zM248,366h1v1h-1zM259,366h1v1h-1zM269,366h1v1h-1zM280,366h1v1h-1zM291,366h1v1h-1zM301,366h1v1h-1zM312,366h1v1h-1zM323,366h1v1h-1zM333,366h1v1h-1zM344,366h1v1h-1zM354,366h1v1h-1zM365,366h1v1h-1zM376,366h1v1h-1zM386,366h1v1h-1zM397,366h1v1h-1zM408,366h1v1h-1zM418,366h1v1h-1zM429,366h1v1h-1zM440,366h1v1h-1zM450,366h1v1h-1zM461,366h1v1h-1zM472,366h1v1h-1zM482,366h1v1h-1zM493,366h1v1h-1zM504,366h1v1h-1zM514,366h1v1h-1zM525,366h1v1h-1zM536,366h1v1h-1zM546,366h1v1h-1zM557,366h1v1h-1zM568,366h1v1h-1zM578,366h1v1h-1zM589,366h1v1h-1zM600,366h1v1h-1zM610,366h1v1h-1zM621,366h1v1h-1zM632,366h1v1h-1zM642,366h1v1h-1zM653,366h1v1h-1zM664,366h1v1h-1zM674,366h1v1h-1zM685,366h1v1h-1zM696,366h1v1h-1zM706,366h1v1h-1zM717,366h1v1h-1zM728,366h1v1h-1zM738,366h1v1h-1zM749,366h1v1h-1zM760,366h1v1h-1zM770,366h1v1h-1zM781,366h1v1h-1zM792,366h1v1h-1zM802,366h1v1h-1zM813,366h1v1h-1zM824,366h1v1h-1zM834,366h1v1h-1zM845,366h1v1h-1zM856,366h1v1h-1zM866,366h1v1h-1zM877,366h1v1h-1zM887,366h1v1h-1zM898,366h1v1h-1zM909,366h1v1h-1zM919,366h1v1h-1zM930,366h1v1h-1zM941,366h1v1h-1zM951,366h1v1h-1zM962,366h1v1h-1zM973,366h1v1h-1zM983,366h1v1h-1zM994,366h1v1h-1zM1005,366h1v1h-1zM1015,366h1v1h-1zM1026,366h1v1h-1zM1037,366h1v1h-1zM1047,366h1v1h-1zM1058,366h1v1h-1zM1069,366h1v1h-1zM1079,366h1v1h-1zM1090,366h1v1h-1zM1101,366h1v1h-1zM1111,366h1v1h-1z" fill="#2c5070"/>
<path d="M56,379h1v1h-1zM67,379h1v1h-1zM77,379h1v1h-1zM88,379h1v1h-1zM99,379h1v1h-1zM109,379h1v1h-1zM120,379h1v1h-1zM131,379h1v1h-1zM141,379h1v1h-1zM152,379h1v1h-1zM163,379h1v1h-1zM173,379h1v1h-1zM184,379h1v1h-1zM195,379h1v1h-1zM205,379h1v1h-1zM216,379h1v1h-1zM227,379h1v1h-1zM237,379h1v1h-1zM248,379h1v1h-1zM259,379h1v1h-1zM269,379h1v1h-1zM280,379h1v1h-1zM291,379h1v1h-1zM301,379h1v1h-1zM312,379h1v1h-1zM323,379h1v1h-1zM333,379h1v1h-1zM344,379h1v1h-1zM354,379h1v1h-1zM365,379h1v1h-1zM376,379h1v1h-1zM386,379h1v1h-1zM397,379h1v1h-1zM408,379h1v1h-1zM418,379h1v1h-1zM429,379h1v1h-1zM440,379h1v1h-1zM450,379h1v1h-1zM461,379h1v1h-1zM472,379h1v1h-1zM482,379h1v1h-1zM493,379h1v1h-1zM504,379h1v1h-1zM514,379h1v1h-1zM525,379h1v1h-1zM536,379h1v1h-1zM546,379h1v1h-1zM557,379h1v1h-1zM568,379h1v1h-1zM578,379h1v1h-1zM589,379h1v1h-1zM600,379h1v1h-1zM610,379h1v1h-1zM621,379h1v1h-1zM632,379h1v1h-1zM642,379h1v1h-1zM653,379h1v1h-1zM664,379h1v1h-1zM674,379h1v1h-1zM685,379h1v1h-1zM696,379h1v1h-1zM706,379h1v1h-1zM717,379h1v1h-1zM728,379h1v1h-1zM738,379h1v1h-1zM749,379h1v1h-1zM760,379h1v1h-1zM770,379h1v1h-1zM781,379h1v1h-1zM792,379h1v1h-1zM802,379h1v1h-1zM813,379h1v1h-1zM824,379h1v1h-1zM834,379h1v1h-1zM845,379h1v1h-1zM856,379h1v1h-1zM866,379h1v1h-1zM877,379h1v1h-1zM887,379h1v1h-1zM898,379h1v1h-1zM909,379h1v1h-1zM919,379h1v1h-1zM930,379h1v1h-1zM941,379h1v1h-1zM951,379h1v1h-1zM962,379h1v1h-1zM973,379h1v1h-1zM983,379h1v1h-1zM994,379h1v1h-1zM1005,379h1v1h-1zM1015,379h1v1h-1zM1026,379h1v1h-1zM1037,379h1v1h-1zM1047,379h1v1h-1zM1058,379h1v1h-1zM1069,379h1v1h-1zM1079,379h1v1h-1zM1090,379h1v1h-1zM1101,379h1v1h-1zM1111,379h1v1h-1z" fill="#2c5070"/>
<line x1="46" y1="393.5" x2="1113" y2="393.5" stroke="#26486a" stroke-width="1" stroke-dasharray="1 1"/>
<line x1="46" y1="414.5" x2="1113" y2="414.5" stroke="#26486a" stroke-width="1" stroke-dasharray="1 1"/>
<path d="M56,398h1v1h-1zM67,398h1v1h-1zM77,398h1v1h-1zM88,398h1v1h-1zM99,398h1v1h-1zM109,398h1v1h-1zM120,398h1v1h-1zM131,398h1v1h-1zM141,398h1v1h-1zM152,398h1v1h-1zM163,398h1v1h-1zM173,398h1v1h-1zM184,398h1v1h-1zM195,398h1v1h-1zM205,398h1v1h-1zM216,398h1v1h-1zM227,398h1v1h-1zM237,398h1v1h-1zM248,398h1v1h-1zM259,398h1v1h-1zM269,398h1v1h-1zM280,398h1v1h-1zM291,398h1v1h-1zM301,398h1v1h-1zM312,398h1v1h-1zM323,398h1v1h-1zM333,398h1v1h-1zM344,398h1v1h-1zM354,398h1v1h-1zM365,398h1v1h-1zM376,398h1v1h-1zM386,398h1v1h-1zM397,398h1v1h-1zM408,398h1v1h-1zM418,398h1v1h-1zM429,398h1v1h-1zM440,398h1v1h-1zM450,398h1v1h-1zM461,398h1v1h-1zM472,398h1v1h-1zM482,398h1v1h-1zM493,398h1v1h-1zM504,398h1v1h-1zM514,398h1v1h-1zM525,398h1v1h-1zM536,398h1v1h-1zM546,398h1v1h-1zM557,398h1v1h-1zM568,398h1v1h-1zM578,398h1v1h-1zM589,398h1v1h-1zM600,398h1v1h-1zM610,398h1v1h-1zM621,398h1v1h-1zM632,398h1v1h-1zM642,398h1v1h-1zM653,398h1v1h-1zM664,398h1v1h-1zM674,398h1v1h-1zM685,398h1v1h-1zM696,398h1v1h-1zM706,398h1v1h-1zM717,398h1v1h-1zM728,398h1v1h-1zM738,398h1v1h-1zM749,398h1v1h-1zM760,398h1v1h-1zM770,398h1v1h-1zM781,398h1v1h-1zM792,398h1v1h-1zM802,398h1v1h-1zM813,398h1v1h-1zM824,398h1v1h-1zM834,398h1v1h-1zM845,398h1v1h-1zM856,398h1v1h-1zM866,398h1v1h-1zM877,398h1v1h-1zM887,398h1v1h-1zM898,398h1v1h-1zM909,398h1v1h-1zM919,398h1v1h-1zM930,398h1v1h-1zM941,398h1v1h-1zM951,398h1v1h-1zM962,398h1v1h-1zM973,398h1v1h-1zM983,398h1v1h-1zM994,398h1v1h-1zM1005,398h1v1h-1zM1015,398h1v1h-1zM1026,398h1v1h-1zM1037,398h1v1h-1zM1047,398h1v1h-1zM1058,398h1v1h-1zM1069,398h1v1h-1zM1079,398h1v1h-1zM1090,398h1v1h-1zM1101,398h1v1h-1zM1111,398h1v1h-1z" fill="#2c5070"/>
<path d="M56,411h1v1h-1zM67,411h1v1h-1zM77,411h1v1h-1zM88,411h1v1h-1zM99,411h1v1h-1zM109,411h1v1h-1zM120,411h1v1h-1zM131,411h1v1h-1zM141,411h1v1h-1zM152,411h1v1h-1zM163,411h1v1h-1zM173,411h1v1h-1zM184,411h1v1h-1zM195,411h1v1h-1zM205,411h1v1h-1zM216,411h1v1h-1zM227,411h1v1h-1zM237,411h1v1h-1zM248,411h1v1h-1zM259,411h1v1h-1zM269,411h1v1h-1zM280,411h1v1h-1zM291,411h1v1h-1zM301,411h1v1h-1zM312,411h1v1h-1zM323,411h1v1h-1zM333,411h1v1h-1zM344,411h1v1h-1zM354,411h1v1h-1zM365,411h1v1h-1zM376,411h1v1h-1zM386,411h1v1h-1zM397,411h1v1h-1zM408,411h1v1h-1zM418,411h1v1h-1zM429,411h1v1h-1zM440,411h1v1h-1zM450,411h1v1h-1zM461,411h1v1h-1zM472,411h1v1h-1zM482,411h1v1h-1zM493,411h1v1h-1zM504,411h1v1h-1zM514,411h1v1h-1zM525,411h1v1h-1zM536,411h1v1h-1zM546,411h1v1h-1zM557,411h1v1h-1zM568,411h1v1h-1zM578,411h1v1h-1zM589,411h1v1h-1zM600,411h1v1h-1zM610,411h1v1h-1zM621,411h1v1h-1zM632,411h1v1h-1zM642,411h1v1h-1zM653,411h1v1h-1zM664,411h1v1h-1zM674,411h1v1h-1zM685,411h1v1h-1zM696,411h1v1h-1zM706,411h1v1h-1zM717,411h1v1h-1zM728,411h1v1h-1zM738,411h1v1h-1zM749,411h1v1h-1zM760,411h1v1h-1zM770,411h1v1h-1zM781,411h1v1h-1zM792,411h1v1h-1zM802,411h1v1h-1zM813,411h1v1h-1zM824,411h1v1h-1zM834,411h1v1h-1zM845,411h1v1h-1zM856,411h1v1h-1zM866,411h1v1h-1zM877,411h1v1h-1zM887,411h1v1h-1zM898,411h1v1h-1zM909,411h1v1h-1zM919,411h1v1h-1zM930,411h1v1h-1zM941,411h1v1h-1zM951,411h1v1h-1zM962,411h1v1h-1zM973,411h1v1h-1zM983,411h1v1h-1zM994,411h1v1h-1zM1005,411h1v1h-1zM1015,411h1v1h-1zM1026,411h1v1h-1zM1037,411h1v1h-1zM1047,411h1v1h-1zM1058,411h1v1h-1zM1069,411h1v1h-1zM1079,411h1v1h-1zM1090,411h1v1h-1zM1101,411h1v1h-1zM1111,411h1v1h-1z" fill="#2c5070"/>
<line x1="46" y1="430.5" x2="1113" y2="430.5" stroke="#26486a" stroke-width="1" stroke-dasharray="1 1"/>
<line x1="46" y1="437.5" x2="1113" y2="437.5" stroke="#26486a" stroke-width="1" stroke-dasharray="1 1"/>
<path d="M56,430h1v1h-1zM67,430h1v1h-1zM77,430h1v1h-1zM88,430h1v1h-1zM99,430h1v1h-1zM109,430h1v1h-1zM120,430h1v1h-1zM131,430h1v1h-1zM141,430h1v1h-1zM152,430h1v1h-1zM163,430h1v1h-1zM173,430h1v1h-1zM184,430h1v1h-1zM195,430h1v1h-1zM205,430h1v1h-1zM216,430h1v1h-1zM227,430h1v1h-1zM237,430h1v1h-1zM248,430h1v1h-1zM259,430h1v1h-1zM269,430h1v1h-1zM280,430h1v1h-1zM291,430h1v1h-1zM301,430h1v1h-1zM312,430h1v1h-1zM323,430h1v1h-1zM333,430h1v1h-1zM344,430h1v1h-1zM354,430h1v1h-1zM365,430h1v1h-1zM376,430h1v1h-1zM386,430h1v1h-1zM397,430h1v1h-1zM408,430h1v1h-1zM418,430h1v1h-1zM429,430h1v1h-1zM440,430h1v1h-1zM450,430h1v1h-1zM461,430h1v1h-1zM472,430h1v1h-1zM482,430h1v1h-1zM493,430h1v1h-1zM504,430h1v1h-1zM514,430h1v1h-1zM525,430h1v1h-1zM536,430h1v1h-1zM546,430h1v1h-1zM557,430h1v1h-1zM568,430h1v1h-1zM578,430h1v1h-1zM589,430h1v1h-1zM600,430h1v1h-1zM610,430h1v1h-1zM621,430h1v1h-1zM632,430h1v1h-1zM642,430h1v1h-1zM653,430h1v1h-1zM664,430h1v1h-1zM674,430h1v1h-1zM685,430h1v1h-1zM696,430h1v1h-1zM706,430h1v1h-1zM717,430h1v1h-1zM728,430h1v1h-1zM738,430h1v1h-1zM749,430h1v1h-1zM760,430h1v1h-1zM770,430h1v1h-1zM781,430h1v1h-1zM792,430h1v1h-1zM802,430h1v1h-1zM813,430h1v1h-1zM824,430h1v1h-1zM834,430h1v1h-1zM845,430h1v1h-1zM856,430h1v1h-1zM866,430h1v1h-1zM877,430h1v1h-1zM887,430h1v1h-1zM898,430h1v1h-1zM909,430h1v1h-1zM919,430h1v1h-1zM930,430h1v1h-1zM941,430h1v1h-1zM951,430h1v1h-1zM962,430h1v1h-1zM973,430h1v1h-1zM983,430h1v1h-1zM994,430h1v1h-1zM1005,430h1v1h-1zM1015,430h1v1h-1zM1026,430h1v1h-1zM1037,430h1v1h-1zM1047,430h1v1h-1zM1058,430h1v1h-1zM1069,430h1v1h-1zM1079,430h1v1h-1zM1090,430h1v1h-1zM1101,430h1v1h-1zM1111,430h1v1h-1z" fill="#2c5070"/>
<path d="M56,443h1v1h-1zM67,443h1v1h-1zM77,443h1v1h-1zM88,443h1v1h-1zM99,443h1v1h-1zM109,443h1v1h-1zM120,443h1v1h-1zM131,443h1v1h-1zM141,443h1v1h-1zM152,443h1v1h-1zM163,443h1v1h-1zM173,443h1v1h-1zM184,443h1v1h-1zM195,443h1v1h-1zM205,443h1v1h-1zM216,443h1v1h-1zM227,443h1v1h-1zM237,443h1v1h-1zM248,443h1v1h-1zM259,443h1v1h-1zM269,443h1v1h-1zM280,443h1v1h-1zM291,443h1v1h-1zM301,443h1v1h-1zM312,443h1v1h-1zM323,443h1v1h-1zM333,443h1v1h-1zM344,443h1v1h-1zM354,443h1v1h-1zM365,443h1v1h-1zM376,443h1v1h-1zM386,443h1v1h-1zM397,443h1v1h-1zM408,443h1v1h-1zM418,443h1v1h-1zM429,443h1v1h-1zM440,443h1v1h-1zM450,443h1v1h-1zM461,443h1v1h-1zM472,443h1v1h-1zM482,443h1v1h-1zM493,443h1v1h-1zM504,443h1v1h-1zM514,443h1v1h-1zM525,443h1v1h-1zM536,443h1v1h-1zM546,443h1v1h-1zM557,443h1v1h-1zM568,443h1v1h-1zM578,443h1v1h-1zM589,443h1v1h-1zM600,443h1v1h-1zM610,443h1v1h-1zM621,443h1v1h-1zM632,443h1v1h-1zM642,443h1v1h-1zM653,443h1v1h-1zM664,443h1v1h-1zM674,443h1v1h-1zM685,443h1v1h-1zM696,443h1v1h-1zM706,443h1v1h-1zM717,443h1v1h-1zM728,443h1v1h-1zM738,443h1v1h-1zM749,443h1v1h-1zM760,443h1v1h-1zM770,443h1v1h-1zM781,443h1v1h-1zM792,443h1v1h-1zM802,443h1v1h-1zM813,443h1v1h-1zM824,443h1v1h-1zM834,443h1v1h-1zM845,443h1v1h-1zM856,443h1v1h-1zM866,443h1v1h-1zM877,443h1v1h-1zM887,443h1v1h-1zM898,443h1v1h-1zM909,443h1v1h-1zM919,443h1v1h-1zM930,443h1v1h-1zM941,443h1v1h-1zM951,443h1v1h-1zM962,443h1v1h-1zM973,443h1v1h-1zM983,443h1v1h-1zM994,443h1v1h-1zM1005,443h1v1h-1zM1015,443h1v1h-1zM1026,443h1v1h-1zM1037,443h1v1h-1zM1047,443h1v1h-1zM1058,443h1v1h-1zM1069,443h1v1h-1zM1079,443h1v1h-1zM1090,443h1v1h-1zM1101,443h1v1h-1zM1111,443h1v1h-1z" fill="#2c5070"/>
<line x1="46" y1="474.5" x2="1113" y2="474.5" stroke="#26486a" stroke-width="1" stroke-dasharray="1 1"/>
<path d="M56,462h1v1h-1zM67,462h1v1h-1zM77,462h1v1h-1zM88,462h1v1h-1zM99,462h1v1h-1zM109,462h1v1h-1zM120,462h1v1h-1zM131,462h1v1h-1zM141,462h1v1h-1zM152,462h1v1h-1zM163,462h1v1h-1zM173,462h1v1h-1zM184,462h1v1h-1zM195,462h1v1h-1zM205,462h1v1h-1zM216,462h1v1h-1zM227,462h1v1h-1zM237,462h1v1h-1zM248,462h1v1h-1zM259,462h1v1h-1zM269,462h1v1h-1zM280,462h1v1h-1zM291,462h1v1h-1zM301,462h1v1h-1zM312,462h1v1h-1zM323,462h1v1h-1zM333,462h1v1h-1zM344,462h1v1h-1zM354,462h1v1h-1zM365,462h1v1h-1zM376,462h1v1h-1zM386,462h1v1h-1zM397,462h1v1h-1zM408,462h1v1h-1zM418,462h1v1h-1zM429,462h1v1h-1zM440,462h1v1h-1zM450,462h1v1h-1zM461,462h1v1h-1zM472,462h1v1h-1zM482,462h1v1h-1zM493,462h1v1h-1zM504,462h1v1h-1zM514,462h1v1h-1zM525,462h1v1h-1zM536,462h1v1h-1zM546,462h1v1h-1zM557,462h1v1h-1zM568,462h1v1h-1zM578,462h1v1h-1zM589,462h1v1h-1zM600,462h1v1h-1zM610,462h1v1h-1zM621,462h1v1h-1zM632,462h1v1h-1zM642,462h1v1h-1zM653,462h1v1h-1zM664,462h1v1h-1zM674,462h1v1h-1zM685,462h1v1h-1zM696,462h1v1h-1zM706,462h1v1h-1zM717,462h1v1h-1zM728,462h1v1h-1zM738,462h1v1h-1zM749,462h1v1h-1zM760,462h1v1h-1zM770,462h1v1h-1zM781,462h1v1h-1zM792,462h1v1h-1zM802,462h1v1h-1zM813,462h1v1h-1zM824,462h1v1h-1zM834,462h1v1h-1zM845,462h1v1h-1zM856,462h1v1h-1zM866,462h1v1h-1zM877,462h1v1h-1zM887,462h1v1h-1zM898,462h1v1h-1zM909,462h1v1h-1zM919,462h1v1h-1zM930,462h1v1h-1zM941,462h1v1h-1zM951,462h1v1h-1zM962,462h1v1h-1zM973,462h1v1h-1zM983,462h1v1h-1zM994,462h1v1h-1zM1005,462h1v1h-1zM1015,462h1v1h-1zM1026,462h1v1h-1zM1037,462h1v1h-1zM1047,462h1v1h-1zM1058,462h1v1h-1zM1069,462h1v1h-1zM1079,462h1v1h-1zM1090,462h1v1h-1zM1101,462h1v1h-1zM1111,462h1v1h-1z" fill="#2c5070"/>
<path d="M56,475h1v1h-1zM67,475h1v1h-1zM77,475h1v1h-1zM88,475h1v1h-1zM99,475h1v1h-1zM109,475h1v1h-1zM120,475h1v1h-1zM131,475h1v1h-1zM141,475h1v1h-1zM152,475h1v1h-1zM163,475h1v1h-1zM173,475h1v1h-1zM184,475h1v1h-1zM195,475h1v1h-1zM205,475h1v1h-1zM216,475h1v1h-1zM227,475h1v1h-1zM237,475h1v1h-1zM248,475h1v1h-1zM259,475h1v1h-1zM269,475h1v1h-1zM280,475h1v1h-1zM291,475h1v1h-1zM301,475h1v1h-1zM312,475h1v1h-1zM323,475h1v1h-1zM333,475h1v1h-1zM344,475h1v1h-1zM354,475h1v1h-1zM365,475h1v1h-1zM376,475h1v1h-1zM386,475h1v1h-1zM397,475h1v1h-1zM408,475h1v1h-1zM418,475h1v1h-1zM429,475h1v1h-1zM440,475h1v1h-1zM450,475h1v1h-1zM461,475h1v1h-1zM472,475h1v1h-1zM482,475h1v1h-1zM493,475h1v1h-1zM504,475h1v1h-1zM514,475h1v1h-1zM525,475h1v1h-1zM536,475h1v1h-1zM546,475h1v1h-1zM557,475h1v1h-1zM568,475h1v1h-1zM578,475h1v1h-1zM589,475h1v1h-1zM600,475h1v1h-1zM610,475h1v1h-1zM621,475h1v1h-1zM632,475h1v1h-1zM642,475h1v1h-1zM653,475h1v1h-1zM664,475h1v1h-1zM674,475h1v1h-1zM685,475h1v1h-1zM696,475h1v1h-1zM706,475h1v1h-1zM717,475h1v1h-1zM728,475h1v1h-1zM738,475h1v1h-1zM749,475h1v1h-1zM760,475h1v1h-1zM770,475h1v1h-1zM781,475h1v1h-1zM792,475h1v1h-1zM802,475h1v1h-1zM813,475h1v1h-1zM824,475h1v1h-1zM834,475h1v1h-1zM845,475h1v1h-1zM856,475h1v1h-1zM866,475h1v1h-1zM877,475h1v1h-1zM887,475h1v1h-1zM898,475h1v1h-1zM909,475h1v1h-1zM919,475h1v1h-1zM930,475h1v1h-1zM941,475h1v1h-1zM951,475h1v1h-1zM962,475h1v1h-1zM973,475h1v1h-1zM983,475h1v1h-1zM994,475h1v1h-1zM1005,475h1v1h-1zM1015,475h1v1h-1zM1026,475h1v1h-1zM1037,475h1v1h-1zM1047,475h1v1h-1zM1058,475h1v1h-1zM1069,475h1v1h-1zM1079,475h1v1h-1zM1090,475h1v1h-1zM1101,475h1v1h-1zM1111,475h1v1h-1z" fill="#2c5070"/>
<line x1="46" y1="490.5" x2="1113" y2="490.5" stroke="#26486a" stroke-width="1" stroke-dasharray="1 1"/>
<line x1="46" y1="512.5" x2="1113" y2="512.5" stroke="#26486a" stroke-width="1" stroke-dasharray="1 1"/>
<path d="M56,494h1v1h-1zM67,494h1v1h-1zM77,494h1v1h-1zM88,494h1v1h-1zM99,494h1v1h-1zM109,494h1v1h-1zM120,494h1v1h-1zM131,494h1v1h-1zM141,494h1v1h-1zM152,494h1v1h-1zM163,494h1v1h-1zM173,494h1v1h-1zM184,494h1v1h-1zM195,494h1v1h-1zM205,494h1v1h-1zM216,494h1v1h-1zM227,494h1v1h-1zM237,494h1v1h-1zM248,494h1v1h-1zM259,494h1v1h-1zM269,494h1v1h-1zM280,494h1v1h-1zM291,494h1v1h-1zM301,494h1v1h-1zM312,494h1v1h-1zM323,494h1v1h-1zM333,494h1v1h-1zM344,494h1v1h-1zM354,494h1v1h-1zM365,494h1v1h-1zM376,494h1v1h-1zM386,494h1v1h-1zM397,494h1v1h-1zM408,494h1v1h-1zM418,494h1v1h-1zM429,494h1v1h-1zM440,494h1v1h-1zM450,494h1v1h-1zM461,494h1v1h-1zM472,494h1v1h-1zM482,494h1v1h-1zM493,494h1v1h-1zM504,494h1v1h-1zM514,494h1v1h-1zM525,494h1v1h-1zM536,494h1v1h-1zM546,494h1v1h-1zM557,494h1v1h-1zM568,494h1v1h-1zM578,494h1v1h-1zM589,494h1v1h-1zM600,494h1v1h-1zM610,494h1v1h-1zM621,494h1v1h-1zM632,494h1v1h-1zM642,494h1v1h-1zM653,494h1v1h-1zM664,494h1v1h-1zM674,494h1v1h-1zM685,494h1v1h-1zM696,494h1v1h-1zM706,494h1v1h-1zM717,494h1v1h-1zM728,494h1v1h-1zM738,494h1v1h-1zM749,494h1v1h-1zM760,494h1v1h-1zM770,494h1v1h-1zM781,494h1v1h-1zM792,494h1v1h-1zM802,494h1v1h-1zM813,494h1v1h-1zM824,494h1v1h-1zM834,494h1v1h-1zM845,494h1v1h-1zM856,494h1v1h-1zM866,494h1v1h-1zM877,494h1v1h-1zM887,494h1v1h-1zM898,494h1v1h-1zM909,494h1v1h-1zM919,494h1v1h-1zM930,494h1v1h-1zM941,494h1v1h-1zM951,494h1v1h-1zM962,494h1v1h-1zM973,494h1v1h-1zM983,494h1v1h-1zM994,494h1v1h-1zM1005,494h1v1h-1zM1015,494h1v1h-1zM1026,494h1v1h-1zM1037,494h1v1h-1zM1047,494h1v1h-1zM1058,494h1v1h-1zM1069,494h1v1h-1zM1079,494h1v1h-1zM1090,494h1v1h-1zM1101,494h1v1h-1zM1111,494h1v1h-1z" fill="#2c5070"/>
<path d="M56,506h1v1h-1zM67,506h1v1h-1zM77,506h1v1h-1zM88,506h1v1h-1zM99,506h1v1h-1zM109,506h1v1h-1zM120,506h1v1h-1zM131,506h1v1h-1zM141,506h1v1h-1zM152,506h1v1h-1zM163,506h1v1h-1zM173,506h1v1h-1zM184,506h1v1h-1zM195,506h1v1h-1zM205,506h1v1h-1zM216,506h1v1h-1zM227,506h1v1h-1zM237,506h1v1h-1zM248,506h1v1h-1zM259,506h1v1h-1zM269,506h1v1h-1zM280,506h1v1h-1zM291,506h1v1h-1zM301,506h1v1h-1zM312,506h1v1h-1zM323,506h1v1h-1zM333,506h1v1h-1zM344,506h1v1h-1zM354,506h1v1h-1zM365,506h1v1h-1zM376,506h1v1h-1zM386,506h1v1h-1zM397,506h1v1h-1zM408,506h1v1h-1zM418,506h1v1h-1zM429,506h1v1h-1zM440,506h1v1h-1zM450,506h1v1h-1zM461,506h1v1h-1zM472,506h1v1h-1zM482,506h1v1h-1zM493,506h1v1h-1zM504,506h1v1h-1zM514,506h1v1h-1zM525,506h1v1h-1zM536,506h1v1h-1zM546,506h1v1h-1zM557,506h1v1h-1zM568,506h1v1h-1zM578,506h1v1h-1zM589,506h1v1h-1zM600,506h1v1h-1zM610,506h1v1h-1zM621,506h1v1h-1zM632,506h1v1h-1zM642,506h1v1h-1zM653,506h1v1h-1zM664,506h1v1h-1zM674,506h1v1h-1zM685,506h1v1h-1zM696,506h1v1h-1zM706,506h1v1h-1zM717,506h1v1h-1zM728,506h1v1h-1zM738,506h1v1h-1zM749,506h1v1h-1zM760,506h1v1h-1zM770,506h1v1h-1zM781,506h1v1h-1zM792,506h1v1h-1zM802,506h1v1h-1zM813,506h1v1h-1zM824,506h1v1h-1zM834,506h1v1h-1zM845,506h1v1h-1zM856,506h1v1h-1zM866,506h1v1h-1zM877,506h1v1h-1zM887,506h1v1h-1zM898,506h1v1h-1zM909,506h1v1h-1zM919,506h1v1h-1zM930,506h1v1h-1zM941,506h1v1h-1zM951,506h1v1h-1zM962,506h1v1h-1zM973,506h1v1h-1zM983,506h1v1h-1zM994,506h1v1h-1zM1005,506h1v1h-1zM1015,506h1v1h-1zM1026,506h1v1h-1zM1037,506h1v1h-1zM1047,506h1v1h-1zM1058,506h1v1h-1zM1069,506h1v1h-1zM1079,506h1v1h-1zM1090,506h1v1h-1zM1101,506h1v1h-1zM1111,506h1v1h-1z" fill="#2c5070"/>
<line x1="46" y1="530.5" x2="1113" y2="530.5" stroke="#26486a" stroke-width="1" stroke-dasharray="1 1"/>
<path d="M56,525h1v1h-1zM67,525h1v1h-1zM77,525h1v1h-1zM88,525h1v1h-1zM99,525h1v1h-1zM109,525h1v1h-1zM120,525h1v1h-1zM131,525h1v1h-1zM141,525h1v1h-1zM152,525h1v1h-1zM163,525h1v1h-1zM173,525h1v1h-1zM184,525h1v1h-1zM195,525h1v1h-1zM205,525h1v1h-1zM216,525h1v1h-1zM227,525h1v1h-1zM237,525h1v1h-1zM248,525h1v1h-1zM259,525h1v1h-1zM269,525h1v1h-1zM280,525h1v1h-1zM291,525h1v1h-1zM301,525h1v1h-1zM312,525h1v1h-1zM323,525h1v1h-1zM333,525h1v1h-1zM344,525h1v1h-1zM354,525h1v1h-1zM365,525h1v1h-1zM376,525h1v1h-1zM386,525h1v1h-1zM397,525h1v1h-1zM408,525h1v1h-1zM418,525h1v1h-1zM429,525h1v1h-1zM440,525h1v1h-1zM450,525h1v1h-1zM461,525h1v1h-1zM472,525h1v1h-1zM482,525h1v1h-1zM493,525h1v1h-1zM504,525h1v1h-1zM514,525h1v1h-1zM525,525h1v1h-1zM536,525h1v1h-1zM546,525h1v1h-1zM557,525h1v1h-1zM568,525h1v1h-1zM578,525h1v1h-1zM589,525h1v1h-1zM600,525h1v1h-1zM610,525h1v1h-1zM621,525h1v1h-1zM632,525h1v1h-1zM642,525h1v1h-1zM653,525h1v1h-1zM664,525h1v1h-1zM674,525h1v1h-1zM685,525h1v1h-1zM696,525h1v1h-1zM706,525h1v1h-1zM717,525h1v1h-1zM728,525h1v1h-1zM738,525h1v1h-1zM749,525h1v1h-1zM760,525h1v1h-1zM770,525h1v1h-1zM781,525h1v1h-1zM792,525h1v1h-1zM802,525h1v1h-1zM813,525h1v1h-1zM824,525h1v1h-1zM834,525h1v1h-1zM845,525h1v1h-1zM856,525h1v1h-1zM866,525h1v1h-1zM877,525h1v1h-1zM887,525h1v1h-1zM898,525h1v1h-1zM909,525h1v1h-1zM919,525h1v1h-1zM930,525h1v1h-1zM941,525h1v1h-1zM951,525h1v1h-1zM962,525h1v1h-1zM973,525h1v1h-1zM983,525h1v1h-1zM994,525h1v1h-1zM1005,525h1v1h-1zM1015,525h1v1h-1zM1026,525h1v1h-1zM1037,525h1v1h-1zM1047,525h1v1h-1zM1058,525h1v1h-1zM1069,525h1v1h-1zM1079,525h1v1h-1zM1090,525h1v1h-1zM1101,525h1v1h-1zM1111,525h1v1h-1z" fill="#2c5070"/>
<path d="M56,538h1v1h-1zM67,538h1v1h-1zM77,538h1v1h-1zM88,538h1v1h-1zM99,538h1v1h-1zM109,538h1v1h-1zM120,538h1v1h-1zM131,538h1v1h-1zM141,538h1v1h-1zM152,538h1v1h-1zM163,538h1v1h-1zM173,538h1v1h-1zM184,538h1v1h-1zM195,538h1v1h-1zM205,538h1v1h-1zM216,538h1v1h-1zM227,538h1v1h-1zM237,538h1v1h-1zM248,538h1v1h-1zM259,538h1v1h-1zM269,538h1v1h-1zM280,538h1v1h-1zM291,538h1v1h-1zM301,538h1v1h-1zM312,538h1v1h-1zM323,538h1v1h-1zM333,538h1v1h-1zM344,538h1v1h-1zM354,538h1v1h-1zM365,538h1v1h-1zM376,538h1v1h-1zM386,538h1v1h-1zM397,538h1v1h-1zM408,538h1v1h-1zM418,538h1v1h-1zM429,538h1v1h-1zM440,538h1v1h-1zM450,538h1v1h-1zM461,538h1v1h-1zM472,538h1v1h-1zM482,538h1v1h-1zM493,538h1v1h-1zM504,538h1v1h-1zM514,538h1v1h-1zM525,538h1v1h-1zM536,538h1v1h-1zM546,538h1v1h-1zM557,538h1v1h-1zM568,538h1v1h-1zM578,538h1v1h-1zM589,538h1v1h-1zM600,538h1v1h-1zM610,538h1v1h-1zM621,538h1v1h-1zM632,538h1v1h-1zM642,538h1v1h-1zM653,538h1v1h-1zM664,538h1v1h-1zM674,538h1v1h-1zM685,538h1v1h-1zM696,538h1v1h-1zM706,538h1v1h-1zM717,538h1v1h-1zM728,538h1v1h-1zM738,538h1v1h-1zM749,538h1v1h-1zM760,538h1v1h-1zM770,538h1v1h-1zM781,538h1v1h-1zM792,538h1v1h-1zM802,538h1v1h-1zM813,538h1v1h-1zM824,538h1v1h-1zM834,538h1v1h-1zM845,538h1v1h-1zM856,538h1v1h-1zM866,538h1v1h-1zM877,538h1v1h-1zM887,538h1v1h-1zM898,538h1v1h-1zM909,538h1v1h-1zM919,538h1v1h-1zM930,538h1v1h-1zM941,538h1v1h-1zM951,538h1v1h-1zM962,538h1v1h-1zM973,538h1v1h-1zM983,538h1v1h-1zM994,538h1v1h-1zM1005,538h1v1h-1zM1015,538h1v1h-1zM1026,538h1v1h-1zM1037,538h1v1h-1zM1047,538h1v1h-1zM1058,538h1v1h-1zM1069,538h1v1h-1zM1079,538h1v1h-1zM1090,538h1v1h-1zM1101,538h1v1h-1zM1111,538h1v1h-1z" fill="#2c5070"/>
<line x1="46" y1="556.5" x2="1113" y2="556.5" stroke="#26486a" stroke-width="1" stroke-dasharray="1 1"/>
<line x1="46" y1="570.5" x2="1113" y2="570.5" stroke="#26486a" stroke-width="1" stroke-dasharray="1 1"/>
<path d="M56,557h1v1h-1zM67,557h1v1h-1zM77,557h1v1h-1zM88,557h1v1h-1zM99,557h1v1h-1zM109,557h1v1h-1zM120,557h1v1h-1zM131,557h1v1h-1zM141,557h1v1h-1zM152,557h1v1h-1zM163,557h1v1h-1zM173,557h1v1h-1zM184,557h1v1h-1zM195,557h1v1h-1zM205,557h1v1h-1zM216,557h1v1h-1zM227,557h1v1h-1zM237,557h1v1h-1zM248,557h1v1h-1zM259,557h1v1h-1zM269,557h1v1h-1zM280,557h1v1h-1zM291,557h1v1h-1zM301,557h1v1h-1zM312,557h1v1h-1zM323,557h1v1h-1zM333,557h1v1h-1zM344,557h1v1h-1zM354,557h1v1h-1zM365,557h1v1h-1zM376,557h1v1h-1zM386,557h1v1h-1zM397,557h1v1h-1zM408,557h1v1h-1zM418,557h1v1h-1zM429,557h1v1h-1zM440,557h1v1h-1zM450,557h1v1h-1zM461,557h1v1h-1zM472,557h1v1h-1zM482,557h1v1h-1zM493,557h1v1h-1zM504,557h1v1h-1zM514,557h1v1h-1zM525,557h1v1h-1zM536,557h1v1h-1zM546,557h1v1h-1zM557,557h1v1h-1zM568,557h1v1h-1zM578,557h1v1h-1zM589,557h1v1h-1zM600,557h1v1h-1zM610,557h1v1h-1zM621,557h1v1h-1zM632,557h1v1h-1zM642,557h1v1h-1zM653,557h1v1h-1zM664,557h1v1h-1zM674,557h1v1h-1zM685,557h1v1h-1zM696,557h1v1h-1zM706,557h1v1h-1zM717,557h1v1h-1zM728,557h1v1h-1zM738,557h1v1h-1zM749,557h1v1h-1zM760,557h1v1h-1zM770,557h1v1h-1zM781,557h1v1h-1zM792,557h1v1h-1zM802,557h1v1h-1zM813,557h1v1h-1zM824,557h1v1h-1zM834,557h1v1h-1zM845,557h1v1h-1zM856,557h1v1h-1zM866,557h1v1h-1zM877,557h1v1h-1zM887,557h1v1h-1zM898,557h1v1h-1zM909,557h1v1h-1zM919,557h1v1h-1zM930,557h1v1h-1zM941,557h1v1h-1zM951,557h1v1h-1zM962,557h1v1h-1zM973,557h1v1h-1zM983,557h1v1h-1zM994,557h1v1h-1zM1005,557h1v1h-1zM1015,557h1v1h-1zM1026,557h1v1h-1zM1037,557h1v1h-1zM1047,557h1v1h-1zM1058,557h1v1h-1zM1069,557h1v1h-1zM1079,557h1v1h-1zM1090,557h1v1h-1zM1101,557h1v1h-1zM1111,557h1v1h-1z" fill="#2c5070"/>
<path d="M56,570h1v1h-1zM67,570h1v1h-1zM77,570h1v1h-1zM88,570h1v1h-1zM99,570h1v1h-1zM109,570h1v1h-1zM120,570h1v1h-1zM131,570h1v1h-1zM141,570h1v1h-1zM152,570h1v1h-1zM163,570h1v1h-1zM173,570h1v1h-1zM184,570h1v1h-1zM195,570h1v1h-1zM205,570h1v1h-1zM216,570h1v1h-1zM227,570h1v1h-1zM237,570h1v1h-1zM248,570h1v1h-1zM259,570h1v1h-1zM269,570h1v1h-1zM280,570h1v1h-1zM291,570h1v1h-1zM301,570h1v1h-1zM312,570h1v1h-1zM323,570h1v1h-1zM333,570h1v1h-1zM344,570h1v1h-1zM354,570h1v1h-1zM365,570h1v1h-1zM376,570h1v1h-1zM386,570h1v1h-1zM397,570h1v1h-1zM408,570h1v1h-1zM418,570h1v1h-1zM429,570h1v1h-1zM440,570h1v1h-1zM450,570h1v1h-1zM461,570h1v1h-1zM472,570h1v1h-1zM482,570h1v1h-1zM493,570h1v1h-1zM504,570h1v1h-1zM514,570h1v1h-1zM525,570h1v1h-1zM536,570h1v1h-1zM546,570h1v1h-1zM557,570h1v1h-1zM568,570h1v1h-1zM578,570h1v1h-1zM589,570h1v1h-1zM600,570h1v1h-1zM610,570h1v1h-1zM621,570h1v1h-1zM632,570h1v1h-1zM642,570h1v1h-1zM653,570h1v1h-1zM664,570h1v1h-1zM674,570h1v1h-1zM685,570h1v1h-1zM696,570h1v1h-1zM706,570h1v1h-1zM717,570h1v1h-1zM728,570h1v1h-1zM738,570h1v1h-1zM749,570h1v1h-1zM760,570h1v1h-1zM770,570h1v1h-1zM781,570h1v1h-1zM792,570h1v1h-1zM802,570h1v1h-1zM813,570h1v1h-1zM824,570h1v1h-1zM834,570h1v1h-1zM845,570h1v1h-1zM856,570h1v1h-1zM866,570h1v1h-1zM877,570h1v1h-1zM887,570h1v1h-1zM898,570h1v1h-1zM909,570h1v1h-1zM919,570h1v1h-1zM930,570h1v1h-1zM941,570h1v1h-1zM951,570h1v1h-1zM962,570h1v1h-1zM973,570h1v1h-1zM983,570h1v1h-1zM994,570h1v1h-1zM1005,570h1v1h-1zM1015,570h1v1h-1zM1026,570h1v1h-1zM1037,570h1v1h-1zM1047,570h1v1h-1zM1058,570h1v1h-1zM1069,570h1v1h-1zM1079,570h1v1h-1zM1090,570h1v1h-1zM1101,570h1v1h-1zM1111,570h1v1h-1z" fill="#2c5070"/>
<line x1="46" y1="582.5" x2="1113" y2="582.5" stroke="#26486a" stroke-width="1" stroke-dasharray="1 1"/>
<line x1="46" y1="598.5" x2="1113" y2="598.5" stroke="#26486a" stroke-width="1" stroke-dasharray="1 1"/>
<path d="M56,589h1v1h-1zM67,589h1v1h-1zM77,589h1v1h-1zM88,589h1v1h-1zM99,589h1v1h-1zM109,589h1v1h-1zM120,589h1v1h-1zM131,589h1v1h-1zM141,589h1v1h-1zM152,589h1v1h-1zM163,589h1v1h-1zM173,589h1v1h-1zM184,589h1v1h-1zM195,589h1v1h-1zM205,589h1v1h-1zM216,589h1v1h-1zM227,589h1v1h-1zM237,589h1v1h-1zM248,589h1v1h-1zM259,589h1v1h-1zM269,589h1v1h-1zM280,589h1v1h-1zM291,589h1v1h-1zM301,589h1v1h-1zM312,589h1v1h-1zM323,589h1v1h-1zM333,589h1v1h-1zM344,589h1v1h-1zM354,589h1v1h-1zM365,589h1v1h-1zM376,589h1v1h-1zM386,589h1v1h-1zM397,589h1v1h-1zM408,589h1v1h-1zM418,589h1v1h-1zM429,589h1v1h-1zM440,589h1v1h-1zM450,589h1v1h-1zM461,589h1v1h-1zM472,589h1v1h-1zM482,589h1v1h-1zM493,589h1v1h-1zM504,589h1v1h-1zM514,589h1v1h-1zM525,589h1v1h-1zM536,589h1v1h-1zM546,589h1v1h-1zM557,589h1v1h-1zM568,589h1v1h-1zM578,589h1v1h-1zM589,589h1v1h-1zM600,589h1v1h-1zM610,589h1v1h-1zM621,589h1v1h-1zM632,589h1v1h-1zM642,589h1v1h-1zM653,589h1v1h-1zM664,589h1v1h-1zM674,589h1v1h-1zM685,589h1v1h-1zM696,589h1v1h-1zM706,589h1v1h-1zM717,589h1v1h-1zM728,589h1v1h-1zM738,589h1v1h-1zM749,589h1v1h-1zM760,589h1v1h-1zM770,589h1v1h-1zM781,589h1v1h-1zM792,589h1v1h-1zM802,589h1v1h-1zM813,589h1v1h-1zM824,589h1v1h-1zM834,589h1v1h-1zM845,589h1v1h-1zM856,589h1v1h-1zM866,589h1v1h-1zM877,589h1v1h-1zM887,589h1v1h-1zM898,589h1v1h-1zM909,589h1v1h-1zM919,589h1v1h-1zM930,589h1v1h-1zM941,589h1v1h-1zM951,589h1v1h-1zM962,589h1v1h-1zM973,589h1v1h-1zM983,589h1v1h-1zM994,589h1v1h-1zM1005,589h1v1h-1zM1015,589h1v1h-1zM1026,589h1v1h-1zM1037,589h1v1h-1zM1047,589h1v1h-1zM1058,589h1v1h-1zM1069,589h1v1h-1zM1079,589h1v1h-1zM1090,589h1v1h-1zM1101,589h1v1h-1zM1111,589h1v1h-1z" fill="#2c5070"/>
<path d="M56,602h1v1h-1zM67,602h1v1h-1zM77,602h1v1h-1zM88,602h1v1h-1zM99,602h1v1h-1zM109,602h1v1h-1zM120,602h1v1h-1zM131,602h1v1h-1zM141,602h1v1h-1zM152,602h1v1h-1zM163,602h1v1h-1zM173,602h1v1h-1zM184,602h1v1h-1zM195,602h1v1h-1zM205,602h1v1h-1zM216,602h1v1h-1zM227,602h1v1h-1zM237,602h1v1h-1zM248,602h1v1h-1zM259,602h1v1h-1zM269,602h1v1h-1zM280,602h1v1h-1zM291,602h1v1h-1zM301,602h1v1h-1zM312,602h1v1h-1zM323,602h1v1h-1zM333,602h1v1h-1zM344,602h1v1h-1zM354,602h1v1h-1zM365,602h1v1h-1zM376,602h1v1h-1zM386,602h1v1h-1zM397,602h1v1h-1zM408,602h1v1h-1zM418,602h1v1h-1zM429,602h1v1h-1zM440,602h1v1h-1zM450,602h1v1h-1zM461,602h1v1h-1zM472,602h1v1h-1zM482,602h1v1h-1zM493,602h1v1h-1zM504,602h1v1h-1zM514,602h1v1h-1zM525,602h1v1h-1zM536,602h1v1h-1zM546,602h1v1h-1zM557,602h1v1h-1zM568,602h1v1h-1zM578,602h1v1h-1zM589,602h1v1h-1zM600,602h1v1h-1zM610,602h1v1h-1zM621,602h1v1h-1zM632,602h1v1h-1zM642,602h1v1h-1zM653,602h1v1h-1zM664,602h1v1h-1zM674,602h1v1h-1zM685,602h1v1h-1zM696,602h1v1h-1zM706,602h1v1h-1zM717,602h1v1h-1zM728,602h1v1h-1zM738,602h1v1h-1zM749,602h1v1h-1zM760,602h1v1h-1zM770,602h1v1h-1zM781,602h1v1h-1zM792,602h1v1h-1zM802,602h1v1h-1zM813,602h1v1h-1zM824,602h1v1h-1zM834,602h1v1h-1zM845,602h1v1h-1zM856,602h1v1h-1zM866,602h1v1h-1zM877,602h1v1h-1zM887,602h1v1h-1zM898,602h1v1h-1zM909,602h1v1h-1zM919,602h1v1h-1zM930,602h1v1h-1zM941,602h1v1h-1zM951,602h1v1h-1zM962,602h1v1h-1zM973,602h1v1h-1zM983,602h1v1h-1zM994,602h1v1h-1zM1005,602h1v1h-1zM1015,602h1v1h-1zM1026,602h1v1h-1zM1037,602h1v1h-1zM1047,602h1v1h-1zM1058,602h1v1h-1zM1069,602h1v1h-1zM1079,602h1v1h-1zM1090,602h1v1h-1zM1101,602h1v1h-1zM1111,602h1v1h-1z" fill="#2c5070"/>
<line x1="46" y1="631.5" x2="1113" y2="631.5" stroke="#26486a" stroke-width="1" stroke-dasharray="1 1"/>
<line x1="46" y1="641.5" x2="1113" y2="641.5" stroke="#26486a" stroke-width="1" stroke-dasharray="1 1"/>
<path d="M56,621h1v1h-1zM67,621h1v1h-1zM77,621h1v1h-1zM88,621h1v1h-1zM99,621h1v1h-1zM109,621h1v1h-1zM120,621h1v1h-1zM131,621h1v1h-1zM141,621h1v1h-1zM152,621h1v1h-1zM163,621h1v1h-1zM173,621h1v1h-1zM184,621h1v1h-1zM195,621h1v1h-1zM205,621h1v1h-1zM216,621h1v1h-1zM227,621h1v1h-1zM237,621h1v1h-1zM248,621h1v1h-1zM259,621h1v1h-1zM269,621h1v1h-1zM280,621h1v1h-1zM291,621h1v1h-1zM301,621h1v1h-1zM312,621h1v1h-1zM323,621h1v1h-1zM333,621h1v1h-1zM344,621h1v1h-1zM354,621h1v1h-1zM365,621h1v1h-1zM376,621h1v1h-1zM386,621h1v1h-1zM397,621h1v1h-1zM408,621h1v1h-1zM418,621h1v1h-1zM429,621h1v1h-1zM440,621h1v1h-1zM450,621h1v1h-1zM461,621h1v1h-1zM472,621h1v1h-1zM482,621h1v1h-1zM493,621h1v1h-1zM504,621h1v1h-1zM514,621h1v1h-1zM525,621h1v1h-1zM536,621h1v1h-1zM546,621h1v1h-1zM557,621h1v1h-1zM568,621h1v1h-1zM578,621h1v1h-1zM589,621h1v1h-1zM600,621h1v1h-1zM610,621h1v1h-1zM621,621h1v1h-1zM632,621h1v1h-1zM642,621h1v1h-1zM653,621h1v1h-1zM664,621h1v1h-1zM674,621h1v1h-1zM685,621h1v1h-1zM696,621h1v1h-1zM706,621h1v1h-1zM717,621h1v1h-1zM728,621h1v1h-1zM738,621h1v1h-1zM749,621h1v1h-1zM760,621h1v1h-1zM770,621h1v1h-1zM781,621h1v1h-1zM792,621h1v1h-1zM802,621h1v1h-1zM813,621h1v1h-1zM824,621h1v1h-1zM834,621h1v1h-1zM845,621h1v1h-1zM856,621h1v1h-1zM866,621h1v1h-1zM877,621h1v1h-1zM887,621h1v1h-1zM898,621h1v1h-1zM909,621h1v1h-1zM919,621h1v1h-1zM930,621h1v1h-1zM941,621h1v1h-1zM951,621h1v1h-1zM962,621h1v1h-1zM973,621h1v1h-1zM983,621h1v1h-1zM994,621h1v1h-1zM1005,621h1v1h-1zM1015,621h1v1h-1zM1026,621h1v1h-1zM1037,621h1v1h-1zM1047,621h1v1h-1zM1058,621h1v1h-1zM1069,621h1v1h-1zM1079,621h1v1h-1zM1090,621h1v1h-1zM1101,621h1v1h-1zM1111,621h1v1h-1z" fill="#2c5070"/>
<path d="M56,634h1v1h-1zM67,634h1v1h-1zM77,634h1v1h-1zM88,634h1v1h-1zM99,634h1v1h-1zM109,634h1v1h-1zM120,634h1v1h-1zM131,634h1v1h-1zM141,634h1v1h-1zM152,634h1v1h-1zM163,634h1v1h-1zM173,634h1v1h-1zM184,634h1v1h-1zM195,634h1v1h-1zM205,634h1v1h-1zM216,634h1v1h-1zM227,634h1v1h-1zM237,634h1v1h-1zM248,634h1v1h-1zM259,634h1v1h-1zM269,634h1v1h-1zM280,634h1v1h-1zM291,634h1v1h-1zM301,634h1v1h-1zM312,634h1v1h-1zM323,634h1v1h-1zM333,634h1v1h-1zM344,634h1v1h-1zM354,634h1v1h-1zM365,634h1v1h-1zM376,634h1v1h-1zM386,634h1v1h-1zM397,634h1v1h-1zM408,634h1v1h-1zM418,634h1v1h-1zM429,634h1v1h-1zM440,634h1v1h-1zM450,634h1v1h-1zM461,634h1v1h-1zM472,634h1v1h-1zM482,634h1v1h-1zM493,634h1v1h-1zM504,634h1v1h-1zM514,634h1v1h-1zM525,634h1v1h-1zM536,634h1v1h-1zM546,634h1v1h-1zM557,634h1v1h-1zM568,634h1v1h-1zM578,634h1v1h-1zM589,634h1v1h-1zM600,634h1v1h-1zM610,634h1v1h-1zM621,634h1v1h-1zM632,634h1v1h-1zM642,634h1v1h-1zM653,634h1v1h-1zM664,634h1v1h-1zM674,634h1v1h-1zM685,634h1v1h-1zM696,634h1v1h-1zM706,634h1v1h-1zM717,634h1v1h-1zM728,634h1v1h-1zM738,634h1v1h-1zM749,634h1v1h-1zM760,634h1v1h-1zM770,634h1v1h-1zM781,634h1v1h-1zM792,634h1v1h-1zM802,634h1v1h-1zM813,634h1v1h-1zM824,634h1v1h-1zM834,634h1v1h-1zM845,634h1v1h-1zM856,634h1v1h-1zM866,634h1v1h-1zM877,634h1v1h-1zM887,634h1v1h-1zM898,634h1v1h-1zM909,634h1v1h-1zM919,634h1v1h-1zM930,634h1v1h-1zM941,634h1v1h-1zM951,634h1v1h-1zM962,634h1v1h-1zM973,634h1v1h-1zM983,634h1v1h-1zM994,634h1v1h-1zM1005,634h1v1h-1zM1015,634h1v1h-1zM1026,634h1v1h-1zM1037,634h1v1h-1zM1047,634h1v1h-1zM1058,634h1v1h-1zM1069,634h1v1h-1zM1079,634h1v1h-1zM1090,634h1v1h-1zM1101,634h1v1h-1zM1111,634h1v1h-1z" fill="#2c5070"/>
<line x1="46" y1="670.5" x2="1113" y2="670.5" stroke="#26486a" stroke-width="1" stroke-dasharray="1 1"/>
<path d="M56,652h1v1h-1zM67,652h1v1h-1zM77,652h1v1h-1zM88,652h1v1h-1zM99,652h1v1h-1zM109,652h1v1h-1zM120,652h1v1h-1zM131,652h1v1h-1zM141,652h1v1h-1zM152,652h1v1h-1zM163,652h1v1h-1zM173,652h1v1h-1zM184,652h1v1h-1zM195,652h1v1h-1zM205,652h1v1h-1zM216,652h1v1h-1zM227,652h1v1h-1zM237,652h1v1h-1zM248,652h1v1h-1zM259,652h1v1h-1zM269,652h1v1h-1zM280,652h1v1h-1zM291,652h1v1h-1zM301,652h1v1h-1zM312,652h1v1h-1zM323,652h1v1h-1zM333,652h1v1h-1zM344,652h1v1h-1zM354,652h1v1h-1zM365,652h1v1h-1zM376,652h1v1h-1zM386,652h1v1h-1zM397,652h1v1h-1zM408,652h1v1h-1zM418,652h1v1h-1zM429,652h1v1h-1zM440,652h1v1h-1zM450,652h1v1h-1zM461,652h1v1h-1zM472,652h1v1h-1zM482,652h1v1h-1zM493,652h1v1h-1zM504,652h1v1h-1zM514,652h1v1h-1zM525,652h1v1h-1zM536,652h1v1h-1zM546,652h1v1h-1zM557,652h1v1h-1zM568,652h1v1h-1zM578,652h1v1h-1zM589,652h1v1h-1zM600,652h1v1h-1zM610,652h1v1h-1zM621,652h1v1h-1zM632,652h1v1h-1zM642,652h1v1h-1zM653,652h1v1h-1zM664,652h1v1h-1zM674,652h1v1h-1zM685,652h1v1h-1zM696,652h1v1h-1zM706,652h1v1h-1zM717,652h1v1h-1zM728,652h1v1h-1zM738,652h1v1h-1zM749,652h1v1h-1zM760,652h1v1h-1zM770,652h1v1h-1zM781,652h1v1h-1zM792,652h1v1h-1zM802,652h1v1h-1zM813,652h1v1h-1zM824,652h1v1h-1zM834,652h1v1h-1zM845,652h1v1h-1zM856,652h1v1h-1zM866,652h1v1h-1zM877,652h1v1h-1zM887,652h1v1h-1zM898,652h1v1h-1zM909,652h1v1h-1zM919,652h1v1h-1zM930,652h1v1h-1zM941,652h1v1h-1zM951,652h1v1h-1zM962,652h1v1h-1zM973,652h1v1h-1zM983,652h1v1h-1zM994,652h1v1h-1zM1005,652h1v1h-1zM1015,652h1v1h-1zM1026,652h1v1h-1zM1037,652h1v1h-1zM1047,652h1v1h-1zM1058,652h1v1h-1zM1069,652h1v1h-1zM1079,652h1v1h-1zM1090,652h1v1h-1zM1101,652h1v1h-1zM1111,652h1v1h-1z" fill="#2c5070"/>
<path d="M56,666h1v1h-1zM67,666h1v1h-1zM77,666h1v1h-1zM88,666h1v1h-1zM99,666h1v1h-1zM109,666h1v1h-1zM120,666h1v1h-1zM131,666h1v1h-1zM141,666h1v1h-1zM152,666h1v1h-1zM163,666h1v1h-1zM173,666h1v1h-1zM184,666h1v1h-1zM195,666h1v1h-1zM205,666h1v1h-1zM216,666h1v1h-1zM227,666h1v1h-1zM237,666h1v1h-1zM248,666h1v1h-1zM259,666h1v1h-1zM269,666h1v1h-1zM280,666h1v1h-1zM291,666h1v1h-1zM301,666h1v1h-1zM312,666h1v1h-1zM323,666h1v1h-1zM333,666h1v1h-1zM344,666h1v1h-1zM354,666h1v1h-1zM365,666h1v1h-1zM376,666h1v1h-1zM386,666h1v1h-1zM397,666h1v1h-1zM408,666h1v1h-1zM418,666h1v1h-1zM429,666h1v1h-1zM440,666h1v1h-1zM450,666h1v1h-1zM461,666h1v1h-1zM472,666h1v1h-1zM482,666h1v1h-1zM493,666h1v1h-1zM504,666h1v1h-1zM514,666h1v1h-1zM525,666h1v1h-1zM536,666h1v1h-1zM546,666h1v1h-1zM557,666h1v1h-1zM568,666h1v1h-1zM578,666h1v1h-1zM589,666h1v1h-1zM600,666h1v1h-1zM610,666h1v1h-1zM621,666h1v1h-1zM632,666h1v1h-1zM642,666h1v1h-1zM653,666h1v1h-1zM664,666h1v1h-1zM674,666h1v1h-1zM685,666h1v1h-1zM696,666h1v1h-1zM706,666h1v1h-1zM717,666h1v1h-1zM728,666h1v1h-1zM738,666h1v1h-1zM749,666h1v1h-1zM760,666h1v1h-1zM770,666h1v1h-1zM781,666h1v1h-1zM792,666h1v1h-1zM802,666h1v1h-1zM813,666h1v1h-1zM824,666h1v1h-1zM834,666h1v1h-1zM845,666h1v1h-1zM856,666h1v1h-1zM866,666h1v1h-1zM877,666h1v1h-1zM887,666h1v1h-1zM898,666h1v1h-1zM909,666h1v1h-1zM919,666h1v1h-1zM930,666h1v1h-1zM941,666h1v1h-1zM951,666h1v1h-1zM962,666h1v1h-1zM973,666h1v1h-1zM983,666h1v1h-1zM994,666h1v1h-1zM1005,666h1v1h-1zM1015,666h1v1h-1zM1026,666h1v1h-1zM1037,666h1v1h-1zM1047,666h1v1h-1zM1058,666h1v1h-1zM1069,666h1v1h-1zM1079,666h1v1h-1zM1090,666h1v1h-1zM1101,666h1v1h-1zM1111,666h1v1h-1z" fill="#2c5070"/>
<line x1="46" y1="691.5" x2="1113" y2="691.5" stroke="#26486a" stroke-width="1" stroke-dasharray="1 1"/>
<line x1="46" y1="698.5" x2="1113" y2="698.5" stroke="#26486a" stroke-width="1" stroke-dasharray="1 1"/>
<path d="M56,684h1v1h-1zM67,684h1v1h-1zM77,684h1v1h-1zM88,684h1v1h-1zM99,684h1v1h-1zM109,684h1v1h-1zM120,684h1v1h-1zM131,684h1v1h-1zM141,684h1v1h-1zM152,684h1v1h-1zM163,684h1v1h-1zM173,684h1v1h-1zM184,684h1v1h-1zM195,684h1v1h-1zM205,684h1v1h-1zM216,684h1v1h-1zM227,684h1v1h-1zM237,684h1v1h-1zM248,684h1v1h-1zM259,684h1v1h-1zM269,684h1v1h-1zM280,684h1v1h-1zM291,684h1v1h-1zM301,684h1v1h-1zM312,684h1v1h-1zM323,684h1v1h-1zM333,684h1v1h-1zM344,684h1v1h-1zM354,684h1v1h-1zM365,684h1v1h-1zM376,684h1v1h-1zM386,684h1v1h-1zM397,684h1v1h-1zM408,684h1v1h-1zM418,684h1v1h-1zM429,684h1v1h-1zM440,684h1v1h-1zM450,684h1v1h-1zM461,684h1v1h-1zM472,684h1v1h-1zM482,684h1v1h-1zM493,684h1v1h-1zM504,684h1v1h-1zM514,684h1v1h-1zM525,684h1v1h-1zM536,684h1v1h-1zM546,684h1v1h-1zM557,684h1v1h-1zM568,684h1v1h-1zM578,684h1v1h-1zM589,684h1v1h-1zM600,684h1v1h-1zM610,684h1v1h-1zM621,684h1v1h-1zM632,684h1v1h-1zM642,684h1v1h-1zM653,684h1v1h-1zM664,684h1v1h-1zM674,684h1v1h-1zM685,684h1v1h-1zM696,684h1v1h-1zM706,684h1v1h-1zM717,684h1v1h-1zM728,684h1v1h-1zM738,684h1v1h-1zM749,684h1v1h-1zM760,684h1v1h-1zM770,684h1v1h-1zM781,684h1v1h-1zM792,684h1v1h-1zM802,684h1v1h-1zM813,684h1v1h-1zM824,684h1v1h-1zM834,684h1v1h-1zM845,684h1v1h-1zM856,684h1v1h-1zM866,684h1v1h-1zM877,684h1v1h-1zM887,684h1v1h-1zM898,684h1v1h-1zM909,684h1v1h-1zM919,684h1v1h-1zM930,684h1v1h-1zM941,684h1v1h-1zM951,684h1v1h-1zM962,684h1v1h-1zM973,684h1v1h-1zM983,684h1v1h-1zM994,684h1v1h-1zM1005,684h1v1h-1zM1015,684h1v1h-1zM1026,684h1v1h-1zM1037,684h1v1h-1zM1047,684h1v1h-1zM1058,684h1v1h-1zM1069,684h1v1h-1zM1079,684h1v1h-1zM1090,684h1v1h-1zM1101,684h1v1h-1zM1111,684h1v1h-1z" fill="#2c5070"/>
<path d="M56,697h1v1h-1zM67,697h1v1h-1zM77,697h1v1h-1zM88,697h1v1h-1zM99,697h1v1h-1zM109,697h1v1h-1zM120,697h1v1h-1zM131,697h1v1h-1zM141,697h1v1h-1zM152,697h1v1h-1zM163,697h1v1h-1zM173,697h1v1h-1zM184,697h1v1h-1zM195,697h1v1h-1zM205,697h1v1h-1zM216,697h1v1h-1zM227,697h1v1h-1zM237,697h1v1h-1zM248,697h1v1h-1zM259,697h1v1h-1zM269,697h1v1h-1zM280,697h1v1h-1zM291,697h1v1h-1zM301,697h1v1h-1zM312,697h1v1h-1zM323,697h1v1h-1zM333,697h1v1h-1zM344,697h1v1h-1zM354,697h1v1h-1zM365,697h1v1h-1zM376,697h1v1h-1zM386,697h1v1h-1zM397,697h1v1h-1zM408,697h1v1h-1zM418,697h1v1h-1zM429,697h1v1h-1zM440,697h1v1h-1zM450,697h1v1h-1zM461,697h1v1h-1zM472,697h1v1h-1zM482,697h1v1h-1zM493,697h1v1h-1zM504,697h1v1h-1zM514,697h1v1h-1zM525,697h1v1h-1zM536,697h1v1h-1zM546,697h1v1h-1zM557,697h1v1h-1zM568,697h1v1h-1zM578,697h1v1h-1zM589,697h1v1h-1zM600,697h1v1h-1zM610,697h1v1h-1zM621,697h1v1h-1zM632,697h1v1h-1zM642,697h1v1h-1zM653,697h1v1h-1zM664,697h1v1h-1zM674,697h1v1h-1zM685,697h1v1h-1zM696,697h1v1h-1zM706,697h1v1h-1zM717,697h1v1h-1zM728,697h1v1h-1zM738,697h1v1h-1zM749,697h1v1h-1zM760,697h1v1h-1zM770,697h1v1h-1zM781,697h1v1h-1zM792,697h1v1h-1zM802,697h1v1h-1zM813,697h1v1h-1zM824,697h1v1h-1zM834,697h1v1h-1zM845,697h1v1h-1zM856,697h1v1h-1zM866,697h1v1h-1zM877,697h1v1h-1zM887,697h1v1h-1zM898,697h1v1h-1zM909,697h1v1h-1zM919,697h1v1h-1zM930,697h1v1h-1zM941,697h1v1h-1zM951,697h1v1h-1zM962,697h1v1h-1zM973,697h1v1h-1zM983,697h1v1h-1zM994,697h1v1h-1zM1005,697h1v1h-1zM1015,697h1v1h-1zM1026,697h1v1h-1zM1037,697h1v1h-1zM1047,697h1v1h-1zM1058,697h1v1h-1zM1069,697h1v1h-1zM1079,697h1v1h-1zM1090,697h1v1h-1zM1101,697h1v1h-1zM1111,697h1v1h-1z" fill="#2c5070"/>
<line x1="46" y1="718.5" x2="1113" y2="718.5" stroke="#26486a" stroke-width="1" stroke-dasharray="1 1"/>
<path d="M56,716h1v1h-1zM67,716h1v1h-1zM77,716h1v1h-1zM88,716h1v1h-1zM99,716h1v1h-1zM109,716h1v1h-1zM120,716h1v1h-1zM131,716h1v1h-1zM141,716h1v1h-1zM152,716h1v1h-1zM163,716h1v1h-1zM173,716h1v1h-1zM184,716h1v1h-1zM195,716h1v1h-1zM205,716h1v1h-1zM216,716h1v1h-1zM227,716h1v1h-1zM237,716h1v1h-1zM248,716h1v1h-1zM259,716h1v1h-1zM269,716h1v1h-1zM280,716h1v1h-1zM291,716h1v1h-1zM301,716h1v1h-1zM312,716h1v1h-1zM323,716h1v1h-1zM333,716h1v1h-1zM344,716h1v1h-1zM354,716h1v1h-1zM365,716h1v1h-1zM376,716h1v1h-1zM386,716h1v1h-1zM397,716h1v1h-1zM408,716h1v1h-1zM418,716h1v1h-1zM429,716h1v1h-1zM440,716h1v1h-1zM450,716h1v1h-1zM461,716h1v1h-1zM472,716h1v1h-1zM482,716h1v1h-1zM493,716h1v1h-1zM504,716h1v1h-1zM514,716h1v1h-1zM525,716h1v1h-1zM536,716h1v1h-1zM546,716h1v1h-1zM557,716h1v1h-1zM568,716h1v1h-1zM578,716h1v1h-1zM589,716h1v1h-1zM600,716h1v1h-1zM610,716h1v1h-1zM621,716h1v1h-1zM632,716h1v1h-1zM642,716h1v1h-1zM653,716h1v1h-1zM664,716h1v1h-1zM674,716h1v1h-1zM685,716h1v1h-1zM696,716h1v1h-1zM706,716h1v1h-1zM717,716h1v1h-1zM728,716h1v1h-1zM738,716h1v1h-1zM749,716h1v1h-1zM760,716h1v1h-1zM770,716h1v1h-1zM781,716h1v1h-1zM792,716h1v1h-1zM802,716h1v1h-1zM813,716h1v1h-1zM824,716h1v1h-1zM834,716h1v1h-1zM845,716h1v1h-1zM856,716h1v1h-1zM866,716h1v1h-1zM877,716h1v1h-1zM887,716h1v1h-1zM898,716h1v1h-1zM909,716h1v1h-1zM919,716h1v1h-1zM930,716h1v1h-1zM941,716h1v1h-1zM951,716h1v1h-1zM962,716h1v1h-1zM973,716h1v1h-1zM983,716h1v1h-1zM994,716h1v1h-1zM1005,716h1v1h-1zM1015,716h1v1h-1zM1026,716h1v1h-1zM1037,716h1v1h-1zM1047,716h1v1h-1zM1058,716h1v1h-1zM1069,716h1v1h-1zM1079,716h1v1h-1zM1090,716h1v1h-1zM1101,716h1v1h-1zM1111,716h1v1h-1z" fill="#2c5070"/>
<path d="M56,729h1v1h-1zM67,729h1v1h-1zM77,729h1v1h-1zM88,729h1v1h-1zM99,729h1v1h-1zM109,729h1v1h-1zM120,729h1v1h-1zM131,729h1v1h-1zM141,729h1v1h-1zM152,729h1v1h-1zM163,729h1v1h-1zM173,729h1v1h-1zM184,729h1v1h-1zM195,729h1v1h-1zM205,729h1v1h-1zM216,729h1v1h-1zM227,729h1v1h-1zM237,729h1v1h-1zM248,729h1v1h-1zM259,729h1v1h-1zM269,729h1v1h-1zM280,729h1v1h-1zM291,729h1v1h-1zM301,729h1v1h-1zM312,729h1v1h-1zM323,729h1v1h-1zM333,729h1v1h-1zM344,729h1v1h-1zM354,729h1v1h-1zM365,729h1v1h-1zM376,729h1v1h-1zM386,729h1v1h-1zM397,729h1v1h-1zM408,729h1v1h-1zM418,729h1v1h-1zM429,729h1v1h-1zM440,729h1v1h-1zM450,729h1v1h-1zM461,729h1v1h-1zM472,729h1v1h-1zM482,729h1v1h-1zM493,729h1v1h-1zM504,729h1v1h-1zM514,729h1v1h-1zM525,729h1v1h-1zM536,729h1v1h-1zM546,729h1v1h-1zM557,729h1v1h-1zM568,729h1v1h-1zM578,729h1v1h-1zM589,729h1v1h-1zM600,729h1v1h-1zM610,729h1v1h-1zM621,729h1v1h-1zM632,729h1v1h-1zM642,729h1v1h-1zM653,729h1v1h-1zM664,729h1v1h-1zM674,729h1v1h-1zM685,729h1v1h-1zM696,729h1v1h-1zM706,729h1v1h-1zM717,729h1v1h-1zM728,729h1v1h-1zM738,729h1v1h-1zM749,729h1v1h-1zM760,729h1v1h-1zM770,729h1v1h-1zM781,729h1v1h-1zM792,729h1v1h-1zM802,729h1v1h-1zM813,729h1v1h-1zM824,729h1v1h-1zM834,729h1v1h-1zM845,729h1v1h-1zM856,729h1v1h-1zM866,729h1v1h-1zM877,729h1v1h-1zM887,729h1v1h-1zM898,729h1v1h-1zM909,729h1v1h-1zM919,729h1v1h-1zM930,729h1v1h-1zM941,729h1v1h-1zM951,729h1v1h-1zM962,729h1v1h-1zM973,729h1v1h-1zM983,729h1v1h-1zM994,729h1v1h-1zM1005,729h1v1h-1zM1015,729h1v1h-1zM1026,729h1v1h-1zM1037,729h1v1h-1zM1047,729h1v1h-1zM1058,729h1v1h-1zM1069,729h1v1h-1zM1079,729h1v1h-1zM1090,729h1v1h-1zM1101,729h1v1h-1zM1111,729h1v1h-1z" fill="#2c5070"/>
<line x1="46" y1="744.5" x2="1113" y2="744.5" stroke="#26486a" stroke-width="1" stroke-dasharray="1 1"/>
<line x1="46" y1="759.5" x2="1113" y2="759.5" stroke="#26486a" stroke-width="1" stroke-dasharray="1 1"/>
<path d="M56,748h1v1h-1zM67,748h1v1h-1zM77,748h1v1h-1zM88,748h1v1h-1zM99,748h1v1h-1zM109,748h1v1h-1zM120,748h1v1h-1zM131,748h1v1h-1zM141,748h1v1h-1zM152,748h1v1h-1zM163,748h1v1h-1zM173,748h1v1h-1zM184,748h1v1h-1zM195,748h1v1h-1zM205,748h1v1h-1zM216,748h1v1h-1zM227,748h1v1h-1zM237,748h1v1h-1zM248,748h1v1h-1zM259,748h1v1h-1zM269,748h1v1h-1zM280,748h1v1h-1zM291,748h1v1h-1zM301,748h1v1h-1zM312,748h1v1h-1zM323,748h1v1h-1zM333,748h1v1h-1zM344,748h1v1h-1zM354,748h1v1h-1zM365,748h1v1h-1zM376,748h1v1h-1zM386,748h1v1h-1zM397,748h1v1h-1zM408,748h1v1h-1zM418,748h1v1h-1zM429,748h1v1h-1zM440,748h1v1h-1zM450,748h1v1h-1zM461,748h1v1h-1zM472,748h1v1h-1zM482,748h1v1h-1zM493,748h1v1h-1zM504,748h1v1h-1zM514,748h1v1h-1zM525,748h1v1h-1zM536,748h1v1h-1zM546,748h1v1h-1zM557,748h1v1h-1zM568,748h1v1h-1zM578,748h1v1h-1zM589,748h1v1h-1zM600,748h1v1h-1zM610,748h1v1h-1zM621,748h1v1h-1zM632,748h1v1h-1zM642,748h1v1h-1zM653,748h1v1h-1zM664,748h1v1h-1zM674,748h1v1h-1zM685,748h1v1h-1zM696,748h1v1h-1zM706,748h1v1h-1zM717,748h1v1h-1zM728,748h1v1h-1zM738,748h1v1h-1zM749,748h1v1h-1zM760,748h1v1h-1zM770,748h1v1h-1zM781,748h1v1h-1zM792,748h1v1h-1zM802,748h1v1h-1zM813,748h1v1h-1zM824,748h1v1h-1zM834,748h1v1h-1zM845,748h1v1h-1zM856,748h1v1h-1zM866,748h1v1h-1zM877,748h1v1h-1zM887,748h1v1h-1zM898,748h1v1h-1zM909,748h1v1h-1zM919,748h1v1h-1zM930,748h1v1h-1zM941,748h1v1h-1zM951,748h1v1h-1zM962,748h1v1h-1zM973,748h1v1h-1zM983,748h1v1h-1zM994,748h1v1h-1zM1005,748h1v1h-1zM1015,748h1v1h-1zM1026,748h1v1h-1zM1037,748h1v1h-1zM1047,748h1v1h-1zM1058,748h1v1h-1zM1069,748h1v1h-1zM1079,748h1v1h-1zM1090,748h1v1h-1zM1101,748h1v1h-1zM1111,748h1v1h-1z" fill="#2c5070"/>
<path d="M56,761h1v1h-1zM67,761h1v1h-1zM77,761h1v1h-1zM88,761h1v1h-1zM99,761h1v1h-1zM109,761h1v1h-1zM120,761h1v1h-1zM131,761h1v1h-1zM141,761h1v1h-1zM152,761h1v1h-1zM163,761h1v1h-1zM173,761h1v1h-1zM184,761h1v1h-1zM195,761h1v1h-1zM205,761h1v1h-1zM216,761h1v1h-1zM227,761h1v1h-1zM237,761h1v1h-1zM248,761h1v1h-1zM259,761h1v1h-1zM269,761h1v1h-1zM280,761h1v1h-1zM291,761h1v1h-1zM301,761h1v1h-1zM312,761h1v1h-1zM323,761h1v1h-1zM333,761h1v1h-1zM344,761h1v1h-1zM354,761h1v1h-1zM365,761h1v1h-1zM376,761h1v1h-1zM386,761h1v1h-1zM397,761h1v1h-1zM408,761h1v1h-1zM418,761h1v1h-1zM429,761h1v1h-1zM440,761h1v1h-1zM450,761h1v1h-1zM461,761h1v1h-1zM472,761h1v1h-1zM482,761h1v1h-1zM493,761h1v1h-1zM504,761h1v1h-1zM514,761h1v1h-1zM525,761h1v1h-1zM536,761h1v1h-1zM546,761h1v1h-1zM557,761h1v1h-1zM568,761h1v1h-1zM578,761h1v1h-1zM589,761h1v1h-1zM600,761h1v1h-1zM610,761h1v1h-1zM621,761h1v1h-1zM632,761h1v1h-1zM642,761h1v1h-1zM653,761h1v1h-1zM664,761h1v1h-1zM674,761h1v1h-1zM685,761h1v1h-1zM696,761h1v1h-1zM706,761h1v1h-1zM717,761h1v1h-1zM728,761h1v1h-1zM738,761h1v1h-1zM749,761h1v1h-1zM760,761h1v1h-1zM770,761h1v1h-1zM781,761h1v1h-1zM792,761h1v1h-1zM802,761h1v1h-1zM813,761h1v1h-1zM824,761h1v1h-1zM834,761h1v1h-1zM845,761h1v1h-1zM856,761h1v1h-1zM866,761h1v1h-1zM877,761h1v1h-1zM887,761h1v1h-1zM898,761h1v1h-1zM909,761h1v1h-1zM919,761h1v1h-1zM930,761h1v1h-1zM941,761h1v1h-1zM951,761h1v1h-1zM962,761h1v1h-1zM973,761h1v1h-1zM983,761h1v1h-1zM994,761h1v1h-1zM1005,761h1v1h-1zM1015,761h1v1h-1zM1026,761h1v1h-1zM1037,761h1v1h-1zM1047,761h1v1h-1zM1058,761h1v1h-1zM1069,761h1v1h-1zM1079,761h1v1h-1zM1090,761h1v1h-1zM1101,761h1v1h-1zM1111,761h1v1h-1z" fill="#2c5070"/>
<line x1="46" y1="796.5" x2="1113" y2="796.5" stroke="#26486a" stroke-width="1" stroke-dasharray="1 1"/>
<path d="M56,780h1v1h-1zM67,780h1v1h-1zM77,780h1v1h-1zM88,780h1v1h-1zM99,780h1v1h-1zM109,780h1v1h-1zM120,780h1v1h-1zM131,780h1v1h-1zM141,780h1v1h-1zM152,780h1v1h-1zM163,780h1v1h-1zM173,780h1v1h-1zM184,780h1v1h-1zM195,780h1v1h-1zM205,780h1v1h-1zM216,780h1v1h-1zM227,780h1v1h-1zM237,780h1v1h-1zM248,780h1v1h-1zM259,780h1v1h-1zM269,780h1v1h-1zM280,780h1v1h-1zM291,780h1v1h-1zM301,780h1v1h-1zM312,780h1v1h-1zM323,780h1v1h-1zM333,780h1v1h-1zM344,780h1v1h-1zM354,780h1v1h-1zM365,780h1v1h-1zM376,780h1v1h-1zM386,780h1v1h-1zM397,780h1v1h-1zM408,780h1v1h-1zM418,780h1v1h-1zM429,780h1v1h-1zM440,780h1v1h-1zM450,780h1v1h-1zM461,780h1v1h-1zM472,780h1v1h-1zM482,780h1v1h-1zM493,780h1v1h-1zM504,780h1v1h-1zM514,780h1v1h-1zM525,780h1v1h-1zM536,780h1v1h-1zM546,780h1v1h-1zM557,780h1v1h-1zM568,780h1v1h-1zM578,780h1v1h-1zM589,780h1v1h-1zM600,780h1v1h-1zM610,780h1v1h-1zM621,780h1v1h-1zM632,780h1v1h-1zM642,780h1v1h-1zM653,780h1v1h-1zM664,780h1v1h-1zM674,780h1v1h-1zM685,780h1v1h-1zM696,780h1v1h-1zM706,780h1v1h-1zM717,780h1v1h-1zM728,780h1v1h-1zM738,780h1v1h-1zM749,780h1v1h-1zM760,780h1v1h-1zM770,780h1v1h-1zM781,780h1v1h-1zM792,780h1v1h-1zM802,780h1v1h-1zM813,780h1v1h-1zM824,780h1v1h-1zM834,780h1v1h-1zM845,780h1v1h-1zM856,780h1v1h-1zM866,780h1v1h-1zM877,780h1v1h-1zM887,780h1v1h-1zM898,780h1v1h-1zM909,780h1v1h-1zM919,780h1v1h-1zM930,780h1v1h-1zM941,780h1v1h-1zM951,780h1v1h-1zM962,780h1v1h-1zM973,780h1v1h-1zM983,780h1v1h-1zM994,780h1v1h-1zM1005,780h1v1h-1zM1015,780h1v1h-1zM1026,780h1v1h-1zM1037,780h1v1h-1zM1047,780h1v1h-1zM1058,780h1v1h-1zM1069,780h1v1h-1zM1079,780h1v1h-1zM1090,780h1v1h-1zM1101,780h1v1h-1zM1111,780h1v1h-1z" fill="#2c5070"/>
<path d="M56,793h1v1h-1zM67,793h1v1h-1zM77,793h1v1h-1zM88,793h1v1h-1zM99,793h1v1h-1zM109,793h1v1h-1zM120,793h1v1h-1zM131,793h1v1h-1zM141,793h1v1h-1zM152,793h1v1h-1zM163,793h1v1h-1zM173,793h1v1h-1zM184,793h1v1h-1zM195,793h1v1h-1zM205,793h1v1h-1zM216,793h1v1h-1zM227,793h1v1h-1zM237,793h1v1h-1zM248,793h1v1h-1zM259,793h1v1h-1zM269,793h1v1h-1zM280,793h1v1h-1zM291,793h1v1h-1zM301,793h1v1h-1zM312,793h1v1h-1zM323,793h1v1h-1zM333,793h1v1h-1zM344,793h1v1h-1zM354,793h1v1h-1zM365,793h1v1h-1zM376,793h1v1h-1zM386,793h1v1h-1zM397,793h1v1h-1zM408,793h1v1h-1zM418,793h1v1h-1zM429,793h1v1h-1zM440,793h1v1h-1zM450,793h1v1h-1zM461,793h1v1h-1zM472,793h1v1h-1zM482,793h1v1h-1zM493,793h1v1h-1zM504,793h1v1h-1zM514,793h1v1h-1zM525,793h1v1h-1zM536,793h1v1h-1zM546,793h1v1h-1zM557,793h1v1h-1zM568,793h1v1h-1zM578,793h1v1h-1zM589,793h1v1h-1zM600,793h1v1h-1zM610,793h1v1h-1zM621,793h1v1h-1zM632,793h1v1h-1zM642,793h1v1h-1zM653,793h1v1h-1zM664,793h1v1h-1zM674,793h1v1h-1zM685,793h1v1h-1zM696,793h1v1h-1zM706,793h1v1h-1zM717,793h1v1h-1zM728,793h1v1h-1zM738,793h1v1h-1zM749,793h1v1h-1zM760,793h1v1h-1zM770,793h1v1h-1zM781,793h1v1h-1zM792,793h1v1h-1zM802,793h1v1h-1zM813,793h1v1h-1zM824,793h1v1h-1zM834,793h1v1h-1zM845,793h1v1h-1zM856,793h1v1h-1zM866,793h1v1h-1zM877,793h1v1h-1zM887,793h1v1h-1zM898,793h1v1h-1zM909,793h1v1h-1zM919,793h1v1h-1zM930,793h1v1h-1zM941,793h1v1h-1zM951,793h1v1h-1zM962,793h1v1h-1zM973,793h1v1h-1zM983,793h1v1h-1zM994,793h1v1h-1zM1005,793h1v1h-1zM1015,793h1v1h-1zM1026,793h1v1h-1zM1037,793h1v1h-1zM1047,793h1v1h-1zM1058,793h1v1h-1zM1069,793h1v1h-1zM1079,793h1v1h-1zM1090,793h1v1h-1zM1101,793h1v1h-1zM1111,793h1v1h-1z" fill="#2c5070"/>
<path d="M56,812h1v1h-1zM67,812h1v1h-1zM77,812h1v1h-1zM88,812h1v1h-1zM99,812h1v1h-1zM109,812h1v1h-1zM120,812h1v1h-1zM131,812h1v1h-1zM141,812h1v1h-1zM152,812h1v1h-1zM163,812h1v1h-1zM173,812h1v1h-1zM184,812h1v1h-1zM195,812h1v1h-1zM205,812h1v1h-1zM216,812h1v1h-1zM227,812h1v1h-1zM237,812h1v1h-1zM248,812h1v1h-1zM259,812h1v1h-1zM269,812h1v1h-1zM280,812h1v1h-1zM291,812h1v1h-1zM301,812h1v1h-1zM312,812h1v1h-1zM323,812h1v1h-1zM333,812h1v1h-1zM344,812h1v1h-1zM354,812h1v1h-1zM365,812h1v1h-1zM376,812h1v1h-1zM386,812h1v1h-1zM397,812h1v1h-1zM408,812h1v1h-1zM418,812h1v1h-1zM429,812h1v1h-1zM440,812h1v1h-1zM450,812h1v1h-1zM461,812h1v1h-1zM472,812h1v1h-1zM482,812h1v1h-1zM493,812h1v1h-1zM504,812h1v1h-1zM514,812h1v1h-1zM525,812h1v1h-1zM536,812h1v1h-1zM546,812h1v1h-1zM557,812h1v1h-1zM568,812h1v1h-1zM578,812h1v1h-1zM589,812h1v1h-1zM600,812h1v1h-1zM610,812h1v1h-1zM621,812h1v1h-1zM632,812h1v1h-1zM642,812h1v1h-1zM653,812h1v1h-1zM664,812h1v1h-1zM674,812h1v1h-1zM685,812h1v1h-1zM696,812h1v1h-1zM706,812h1v1h-1zM717,812h1v1h-1zM728,812h1v1h-1zM738,812h1v1h-1zM749,812h1v1h-1zM760,812h1v1h-1zM770,812h1v1h-1zM781,812h1v1h-1zM792,812h1v1h-1zM802,812h1v1h-1zM813,812h1v1h-1zM824,812h1v1h-1zM834,812h1v1h-1zM845,812h1v1h-1zM856,812h1v1h-1zM866,812h1v1h-1zM877,812h1v1h-1zM887,812h1v1h-1zM898,812h1v1h-1zM909,812h1v1h-1zM919,812h1v1h-1zM930,812h1v1h-1zM941,812h1v1h-1zM951,812h1v1h-1zM962,812h1v1h-1zM973,812h1v1h-1zM983,812h1v1h-1zM994,812h1v1h-1zM1005,812h1v1h-1zM1015,812h1v1h-1zM1026,812h1v1h-1zM1037,812h1v1h-1zM1047,812h1v1h-1zM1058,812h1v1h-1zM1069,812h1v1h-1zM1079,812h1v1h-1zM1090,812h1v1h-1zM1101,812h1v1h-1zM1111,812h1v1h-1z" fill="#2c5070"/>
<line x1="56.5" y1="156" x2="56.5" y2="817" stroke="#26486a" stroke-width="1" stroke-dasharray="1 2"/>
<line x1="131.5" y1="156" x2="131.5" y2="817" stroke="#26486a" stroke-width="1" stroke-dasharray="1 2"/>
<line x1="333.5" y1="156" x2="333.5" y2="817" stroke="#26486a" stroke-width="1" stroke-dasharray="1 2"/>
<line x1="355.5" y1="156" x2="355.5" y2="817" stroke="#26486a" stroke-width="1" stroke-dasharray="1 2"/>
<line x1="408.5" y1="156" x2="408.5" y2="817" stroke="#26486a" stroke-width="1" stroke-dasharray="1 2"/>
<line x1="430.5" y1="156" x2="430.5" y2="817" stroke="#26486a" stroke-width="1" stroke-dasharray="1 2"/>
<line x1="483.5" y1="156" x2="483.5" y2="817" stroke="#26486a" stroke-width="1" stroke-dasharray="1 2"/>
<line x1="632.5" y1="156" x2="632.5" y2="817" stroke="#26486a" stroke-width="1" stroke-dasharray="1 2"/>
<line x1="728.5" y1="156" x2="728.5" y2="817" stroke="#26486a" stroke-width="1" stroke-dasharray="1 2"/>
<line x1="782.5" y1="156" x2="782.5" y2="817" stroke="#26486a" stroke-width="1" stroke-dasharray="1 2"/>
<line x1="857.5" y1="156" x2="857.5" y2="817" stroke="#26486a" stroke-width="1" stroke-dasharray="1 2"/>
<line x1="931.5" y1="156" x2="931.5" y2="817" stroke="#26486a" stroke-width="1" stroke-dasharray="1 2"/>
<line x1="1006.5" y1="156" x2="1006.5" y2="817" stroke="#26486a" stroke-width="1" stroke-dasharray="1 2"/>
<line x1="1058.5" y1="156" x2="1058.5" y2="817" stroke="#26486a" stroke-width="1" stroke-dasharray="1 2"/>
<line x1="1080.5" y1="156" x2="1080.5" y2="817" stroke="#26486a" stroke-width="1" stroke-dasharray="1 2"/>
<line x1="46" y1="166.5" x2="1113" y2="166.5" stroke="#1e3c5c" stroke-width="1"/>
<path d="M56,166h1v1h-1zM66,166h1v1h-1zM77,166h1v1h-1zM87,166h1v1h-1zM98,166h1v1h-1zM109,166h1v1h-1zM119,166h1v1h-1zM130,166h1v1h-1zM141,166h1v1h-1zM151,166h1v1h-1zM162,166h1v1h-1zM173,166h1v1h-1zM183,166h1v1h-1zM194,166h1v1h-1zM205,166h1v1h-1zM215,166h1v1h-1zM226,166h1v1h-1zM237,166h1v1h-1zM247,166h1v1h-1zM258,166h1v1h-1zM269,166h1v1h-1zM279,166h1v1h-1zM290,166h1v1h-1zM301,166h1v1h-1zM311,166h1v1h-1zM322,166h1v1h-1zM333,166h1v1h-1zM343,166h1v1h-1zM354,166h1v1h-1zM365,166h1v1h-1zM375,166h1v1h-1zM386,166h1v1h-1zM397,166h1v1h-1zM407,166h1v1h-1zM418,166h1v1h-1zM429,166h1v1h-1zM439,166h1v1h-1zM450,166h1v1h-1zM461,166h1v1h-1zM471,166h1v1h-1zM482,166h1v1h-1zM493,166h1v1h-1zM503,166h1v1h-1zM514,166h1v1h-1zM525,166h1v1h-1zM535,166h1v1h-1zM546,166h1v1h-1zM557,166h1v1h-1zM567,166h1v1h-1zM578,166h1v1h-1zM589,166h1v1h-1zM599,166h1v1h-1zM610,166h1v1h-1zM620,166h1v1h-1zM631,166h1v1h-1zM642,166h1v1h-1zM652,166h1v1h-1zM663,166h1v1h-1zM674,166h1v1h-1zM684,166h1v1h-1zM695,166h1v1h-1zM706,166h1v1h-1zM716,166h1v1h-1zM727,166h1v1h-1zM738,166h1v1h-1zM748,166h1v1h-1zM759,166h1v1h-1zM770,166h1v1h-1zM780,166h1v1h-1zM791,166h1v1h-1zM802,166h1v1h-1zM812,166h1v1h-1zM823,166h1v1h-1zM834,166h1v1h-1zM844,166h1v1h-1zM855,166h1v1h-1zM866,166h1v1h-1zM876,166h1v1h-1zM887,166h1v1h-1zM898,166h1v1h-1zM908,166h1v1h-1zM919,166h1v1h-1zM930,166h1v1h-1zM940,166h1v1h-1zM951,166h1v1h-1zM962,166h1v1h-1zM972,166h1v1h-1zM983,166h1v1h-1zM994,166h1v1h-1zM1004,166h1v1h-1zM1015,166h1v1h-1zM1026,166h1v1h-1zM1036,166h1v1h-1zM1047,166h1v1h-1zM1058,166h1v1h-1zM1068,166h1v1h-1zM1079,166h1v1h-1zM1090,166h1v1h-1zM1100,166h1v1h-1zM1111,166h1v1h-1z" fill="#8e3c30"/>
<line x1="46" y1="198.5" x2="1113" y2="198.5" stroke="#1e3c5c" stroke-width="1"/>
<path d="M56,198h1v1h-1zM66,198h1v1h-1zM77,198h1v1h-1zM87,198h1v1h-1zM98,198h1v1h-1zM109,198h1v1h-1zM119,198h1v1h-1zM130,198h1v1h-1zM141,198h1v1h-1zM151,198h1v1h-1zM162,198h1v1h-1zM173,198h1v1h-1zM183,198h1v1h-1zM194,198h1v1h-1zM205,198h1v1h-1zM215,198h1v1h-1zM226,198h1v1h-1zM237,198h1v1h-1zM247,198h1v1h-1zM258,198h1v1h-1zM269,198h1v1h-1zM279,198h1v1h-1zM290,198h1v1h-1zM301,198h1v1h-1zM311,198h1v1h-1zM322,198h1v1h-1zM333,198h1v1h-1zM343,198h1v1h-1zM354,198h1v1h-1zM365,198h1v1h-1zM375,198h1v1h-1zM386,198h1v1h-1zM397,198h1v1h-1zM407,198h1v1h-1zM418,198h1v1h-1zM429,198h1v1h-1zM439,198h1v1h-1zM450,198h1v1h-1zM461,198h1v1h-1zM471,198h1v1h-1zM482,198h1v1h-1zM493,198h1v1h-1zM503,198h1v1h-1zM514,198h1v1h-1zM525,198h1v1h-1zM535,198h1v1h-1zM546,198h1v1h-1zM557,198h1v1h-1zM567,198h1v1h-1zM578,198h1v1h-1zM589,198h1v1h-1zM599,198h1v1h-1zM610,198h1v1h-1zM620,198h1v1h-1zM631,198h1v1h-1zM642,198h1v1h-1zM652,198h1v1h-1zM663,198h1v1h-1zM674,198h1v1h-1zM684,198h1v1h-1zM695,198h1v1h-1zM706,198h1v1h-1zM716,198h1v1h-1zM727,198h1v1h-1zM738,198h1v1h-1zM748,198h1v1h-1zM759,198h1v1h-1zM770,198h1v1h-1zM780,198h1v1h-1zM791,198h1v1h-1zM802,198h1v1h-1zM812,198h1v1h-1zM823,198h1v1h-1zM834,198h1v1h-1zM844,198h1v1h-1zM855,198h1v1h-1zM866,198h1v1h-1zM876,198h1v1h-1zM887,198h1v1h-1zM898,198h1v1h-1zM908,198h1v1h-1zM919,198h1v1h-1zM930,198h1v1h-1zM940,198h1v1h-1zM951,198h1v1h-1zM962,198h1v1h-1zM972,198h1v1h-1zM983,198h1v1h-1zM994,198h1v1h-1zM1004,198h1v1h-1zM1015,198h1v1h-1zM1026,198h1v1h-1zM1036,198h1v1h-1zM1047,198h1v1h-1zM1058,198h1v1h-1zM1068,198h1v1h-1zM1079,198h1v1h-1zM1090,198h1v1h-1zM1100,198h1v1h-1zM1111,198h1v1h-1z" fill="#8e3c30"/>
<line x1="46" y1="230.5" x2="1113" y2="230.5" stroke="#1e3c5c" stroke-width="1"/>
<path d="M56,230h1v1h-1zM66,230h1v1h-1zM77,230h1v1h-1zM87,230h1v1h-1zM98,230h1v1h-1zM109,230h1v1h-1zM119,230h1v1h-1zM130,230h1v1h-1zM141,230h1v1h-1zM151,230h1v1h-1zM162,230h1v1h-1zM173,230h1v1h-1zM183,230h1v1h-1zM194,230h1v1h-1zM205,230h1v1h-1zM215,230h1v1h-1zM226,230h1v1h-1zM237,230h1v1h-1zM247,230h1v1h-1zM258,230h1v1h-1zM269,230h1v1h-1zM279,230h1v1h-1zM290,230h1v1h-1zM301,230h1v1h-1zM311,230h1v1h-1zM322,230h1v1h-1zM333,230h1v1h-1zM343,230h1v1h-1zM354,230h1v1h-1zM365,230h1v1h-1zM375,230h1v1h-1zM386,230h1v1h-1zM397,230h1v1h-1zM407,230h1v1h-1zM418,230h1v1h-1zM429,230h1v1h-1zM439,230h1v1h-1zM450,230h1v1h-1zM461,230h1v1h-1zM471,230h1v1h-1zM482,230h1v1h-1zM493,230h1v1h-1zM503,230h1v1h-1zM514,230h1v1h-1zM525,230h1v1h-1zM535,230h1v1h-1zM546,230h1v1h-1zM557,230h1v1h-1zM567,230h1v1h-1zM578,230h1v1h-1zM589,230h1v1h-1zM599,230h1v1h-1zM610,230h1v1h-1zM620,230h1v1h-1zM631,230h1v1h-1zM642,230h1v1h-1zM652,230h1v1h-1zM663,230h1v1h-1zM674,230h1v1h-1zM684,230h1v1h-1zM695,230h1v1h-1zM706,230h1v1h-1zM716,230h1v1h-1zM727,230h1v1h-1zM738,230h1v1h-1zM748,230h1v1h-1zM759,230h1v1h-1zM770,230h1v1h-1zM780,230h1v1h-1zM791,230h1v1h-1zM802,230h1v1h-1zM812,230h1v1h-1zM823,230h1v1h-1zM834,230h1v1h-1zM844,230h1v1h-1zM855,230h1v1h-1zM866,230h1v1h-1zM876,230h1v1h-1zM887,230h1v1h-1zM898,230h1v1h-1zM908,230h1v1h-1zM919,230h1v1h-1zM930,230h1v1h-1zM940,230h1v1h-1zM951,230h1v1h-1zM962,230h1v1h-1zM972,230h1v1h-1zM983,230h1v1h-1zM994,230h1v1h-1zM1004,230h1v1h-1zM1015,230h1v1h-1zM1026,230h1v1h-1zM1036,230h1v1h-1zM1047,230h1v1h-1zM1058,230h1v1h-1zM1068,230h1v1h-1zM1079,230h1v1h-1zM1090,230h1v1h-1zM1100,230h1v1h-1zM1111,230h1v1h-1z" fill="#8e3c30"/>
<line x1="46" y1="262.5" x2="1113" y2="262.5" stroke="#1e3c5c" stroke-width="1"/>
<path d="M56,262h1v1h-1zM66,262h1v1h-1zM77,262h1v1h-1zM87,262h1v1h-1zM98,262h1v1h-1zM109,262h1v1h-1zM119,262h1v1h-1zM130,262h1v1h-1zM141,262h1v1h-1zM151,262h1v1h-1zM162,262h1v1h-1zM173,262h1v1h-1zM183,262h1v1h-1zM194,262h1v1h-1zM205,262h1v1h-1zM215,262h1v1h-1zM226,262h1v1h-1zM237,262h1v1h-1zM247,262h1v1h-1zM258,262h1v1h-1zM269,262h1v1h-1zM279,262h1v1h-1zM290,262h1v1h-1zM301,262h1v1h-1zM311,262h1v1h-1zM322,262h1v1h-1zM333,262h1v1h-1zM343,262h1v1h-1zM354,262h1v1h-1zM365,262h1v1h-1zM375,262h1v1h-1zM386,262h1v1h-1zM397,262h1v1h-1zM407,262h1v1h-1zM418,262h1v1h-1zM429,262h1v1h-1zM439,262h1v1h-1zM450,262h1v1h-1zM461,262h1v1h-1zM471,262h1v1h-1zM482,262h1v1h-1zM493,262h1v1h-1zM503,262h1v1h-1zM514,262h1v1h-1zM525,262h1v1h-1zM535,262h1v1h-1zM546,262h1v1h-1zM557,262h1v1h-1zM567,262h1v1h-1zM578,262h1v1h-1zM589,262h1v1h-1zM599,262h1v1h-1zM610,262h1v1h-1zM620,262h1v1h-1zM631,262h1v1h-1zM642,262h1v1h-1zM652,262h1v1h-1zM663,262h1v1h-1zM674,262h1v1h-1zM684,262h1v1h-1zM695,262h1v1h-1zM706,262h1v1h-1zM716,262h1v1h-1zM727,262h1v1h-1zM738,262h1v1h-1zM748,262h1v1h-1zM759,262h1v1h-1zM770,262h1v1h-1zM780,262h1v1h-1zM791,262h1v1h-1zM802,262h1v1h-1zM812,262h1v1h-1zM823,262h1v1h-1zM834,262h1v1h-1zM844,262h1v1h-1zM855,262h1v1h-1zM866,262h1v1h-1zM876,262h1v1h-1zM887,262h1v1h-1zM898,262h1v1h-1zM908,262h1v1h-1zM919,262h1v1h-1zM930,262h1v1h-1zM940,262h1v1h-1zM951,262h1v1h-1zM962,262h1v1h-1zM972,262h1v1h-1zM983,262h1v1h-1zM994,262h1v1h-1zM1004,262h1v1h-1zM1015,262h1v1h-1zM1026,262h1v1h-1zM1036,262h1v1h-1zM1047,262h1v1h-1zM1058,262h1v1h-1zM1068,262h1v1h-1zM1079,262h1v1h-1zM1090,262h1v1h-1zM1100,262h1v1h-1zM1111,262h1v1h-1z" fill="#8e3c30"/>
<line x1="46" y1="294.5" x2="1113" y2="294.5" stroke="#1e3c5c" stroke-width="1"/>
<path d="M56,294h1v1h-1zM66,294h1v1h-1zM77,294h1v1h-1zM87,294h1v1h-1zM98,294h1v1h-1zM109,294h1v1h-1zM119,294h1v1h-1zM130,294h1v1h-1zM141,294h1v1h-1zM151,294h1v1h-1zM162,294h1v1h-1zM173,294h1v1h-1zM183,294h1v1h-1zM194,294h1v1h-1zM205,294h1v1h-1zM215,294h1v1h-1zM226,294h1v1h-1zM237,294h1v1h-1zM247,294h1v1h-1zM258,294h1v1h-1zM269,294h1v1h-1zM279,294h1v1h-1zM290,294h1v1h-1zM301,294h1v1h-1zM311,294h1v1h-1zM322,294h1v1h-1zM333,294h1v1h-1zM343,294h1v1h-1zM354,294h1v1h-1zM365,294h1v1h-1zM375,294h1v1h-1zM386,294h1v1h-1zM397,294h1v1h-1zM407,294h1v1h-1zM418,294h1v1h-1zM429,294h1v1h-1zM439,294h1v1h-1zM450,294h1v1h-1zM461,294h1v1h-1zM471,294h1v1h-1zM482,294h1v1h-1zM493,294h1v1h-1zM503,294h1v1h-1zM514,294h1v1h-1zM525,294h1v1h-1zM535,294h1v1h-1zM546,294h1v1h-1zM557,294h1v1h-1zM567,294h1v1h-1zM578,294h1v1h-1zM589,294h1v1h-1zM599,294h1v1h-1zM610,294h1v1h-1zM620,294h1v1h-1zM631,294h1v1h-1zM642,294h1v1h-1zM652,294h1v1h-1zM663,294h1v1h-1zM674,294h1v1h-1zM684,294h1v1h-1zM695,294h1v1h-1zM706,294h1v1h-1zM716,294h1v1h-1zM727,294h1v1h-1zM738,294h1v1h-1zM748,294h1v1h-1zM759,294h1v1h-1zM770,294h1v1h-1zM780,294h1v1h-1zM791,294h1v1h-1zM802,294h1v1h-1zM812,294h1v1h-1zM823,294h1v1h-1zM834,294h1v1h-1zM844,294h1v1h-1zM855,294h1v1h-1zM866,294h1v1h-1zM876,294h1v1h-1zM887,294h1v1h-1zM898,294h1v1h-1zM908,294h1v1h-1zM919,294h1v1h-1zM930,294h1v1h-1zM940,294h1v1h-1zM951,294h1v1h-1zM962,294h1v1h-1zM972,294h1v1h-1zM983,294h1v1h-1zM994,294h1v1h-1zM1004,294h1v1h-1zM1015,294h1v1h-1zM1026,294h1v1h-1zM1036,294h1v1h-1zM1047,294h1v1h-1zM1058,294h1v1h-1zM1068,294h1v1h-1zM1079,294h1v1h-1zM1090,294h1v1h-1zM1100,294h1v1h-1zM1111,294h1v1h-1z" fill="#8e3c30"/>
<line x1="46" y1="326.5" x2="1113" y2="326.5" stroke="#1e3c5c" stroke-width="1"/>
<path d="M56,326h1v1h-1zM66,326h1v1h-1zM77,326h1v1h-1zM87,326h1v1h-1zM98,326h1v1h-1zM109,326h1v1h-1zM119,326h1v1h-1zM130,326h1v1h-1zM141,326h1v1h-1zM151,326h1v1h-1zM162,326h1v1h-1zM173,326h1v1h-1zM183,326h1v1h-1zM194,326h1v1h-1zM205,326h1v1h-1zM215,326h1v1h-1zM226,326h1v1h-1zM237,326h1v1h-1zM247,326h1v1h-1zM258,326h1v1h-1zM269,326h1v1h-1zM279,326h1v1h-1zM290,326h1v1h-1zM301,326h1v1h-1zM311,326h1v1h-1zM322,326h1v1h-1zM333,326h1v1h-1zM343,326h1v1h-1zM354,326h1v1h-1zM365,326h1v1h-1zM375,326h1v1h-1zM386,326h1v1h-1zM397,326h1v1h-1zM407,326h1v1h-1zM418,326h1v1h-1zM429,326h1v1h-1zM439,326h1v1h-1zM450,326h1v1h-1zM461,326h1v1h-1zM471,326h1v1h-1zM482,326h1v1h-1zM493,326h1v1h-1zM503,326h1v1h-1zM514,326h1v1h-1zM525,326h1v1h-1zM535,326h1v1h-1zM546,326h1v1h-1zM557,326h1v1h-1zM567,326h1v1h-1zM578,326h1v1h-1zM589,326h1v1h-1zM599,326h1v1h-1zM610,326h1v1h-1zM620,326h1v1h-1zM631,326h1v1h-1zM642,326h1v1h-1zM652,326h1v1h-1zM663,326h1v1h-1zM674,326h1v1h-1zM684,326h1v1h-1zM695,326h1v1h-1zM706,326h1v1h-1zM716,326h1v1h-1zM727,326h1v1h-1zM738,326h1v1h-1zM748,326h1v1h-1zM759,326h1v1h-1zM770,326h1v1h-1zM780,326h1v1h-1zM791,326h1v1h-1zM802,326h1v1h-1zM812,326h1v1h-1zM823,326h1v1h-1zM834,326h1v1h-1zM844,326h1v1h-1zM855,326h1v1h-1zM866,326h1v1h-1zM876,326h1v1h-1zM887,326h1v1h-1zM898,326h1v1h-1zM908,326h1v1h-1zM919,326h1v1h-1zM930,326h1v1h-1zM940,326h1v1h-1zM951,326h1v1h-1zM962,326h1v1h-1zM972,326h1v1h-1zM983,326h1v1h-1zM994,326h1v1h-1zM1004,326h1v1h-1zM1015,326h1v1h-1zM1026,326h1v1h-1zM1036,326h1v1h-1zM1047,326h1v1h-1zM1058,326h1v1h-1zM1068,326h1v1h-1zM1079,326h1v1h-1zM1090,326h1v1h-1zM1100,326h1v1h-1zM1111,326h1v1h-1z" fill="#8e3c30"/>
<line x1="46" y1="357.5" x2="1113" y2="357.5" stroke="#1e3c5c" stroke-width="1"/>
<path d="M56,357h1v1h-1zM66,357h1v1h-1zM77,357h1v1h-1zM87,357h1v1h-1zM98,357h1v1h-1zM109,357h1v1h-1zM119,357h1v1h-1zM130,357h1v1h-1zM141,357h1v1h-1zM151,357h1v1h-1zM162,357h1v1h-1zM173,357h1v1h-1zM183,357h1v1h-1zM194,357h1v1h-1zM205,357h1v1h-1zM215,357h1v1h-1zM226,357h1v1h-1zM237,357h1v1h-1zM247,357h1v1h-1zM258,357h1v1h-1zM269,357h1v1h-1zM279,357h1v1h-1zM290,357h1v1h-1zM301,357h1v1h-1zM311,357h1v1h-1zM322,357h1v1h-1zM333,357h1v1h-1zM343,357h1v1h-1zM354,357h1v1h-1zM365,357h1v1h-1zM375,357h1v1h-1zM386,357h1v1h-1zM397,357h1v1h-1zM407,357h1v1h-1zM418,357h1v1h-1zM429,357h1v1h-1zM439,357h1v1h-1zM450,357h1v1h-1zM461,357h1v1h-1zM471,357h1v1h-1zM482,357h1v1h-1zM493,357h1v1h-1zM503,357h1v1h-1zM514,357h1v1h-1zM525,357h1v1h-1zM535,357h1v1h-1zM546,357h1v1h-1zM557,357h1v1h-1zM567,357h1v1h-1zM578,357h1v1h-1zM589,357h1v1h-1zM599,357h1v1h-1zM610,357h1v1h-1zM620,357h1v1h-1zM631,357h1v1h-1zM642,357h1v1h-1zM652,357h1v1h-1zM663,357h1v1h-1zM674,357h1v1h-1zM684,357h1v1h-1zM695,357h1v1h-1zM706,357h1v1h-1zM716,357h1v1h-1zM727,357h1v1h-1zM738,357h1v1h-1zM748,357h1v1h-1zM759,357h1v1h-1zM770,357h1v1h-1zM780,357h1v1h-1zM791,357h1v1h-1zM802,357h1v1h-1zM812,357h1v1h-1zM823,357h1v1h-1zM834,357h1v1h-1zM844,357h1v1h-1zM855,357h1v1h-1zM866,357h1v1h-1zM876,357h1v1h-1zM887,357h1v1h-1zM898,357h1v1h-1zM908,357h1v1h-1zM919,357h1v1h-1zM930,357h1v1h-1zM940,357h1v1h-1zM951,357h1v1h-1zM962,357h1v1h-1zM972,357h1v1h-1zM983,357h1v1h-1zM994,357h1v1h-1zM1004,357h1v1h-1zM1015,357h1v1h-1zM1026,357h1v1h-1zM1036,357h1v1h-1zM1047,357h1v1h-1zM1058,357h1v1h-1zM1068,357h1v1h-1zM1079,357h1v1h-1zM1090,357h1v1h-1zM1100,357h1v1h-1zM1111,357h1v1h-1z" fill="#8e3c30"/>
<line x1="46" y1="389.5" x2="1113" y2="389.5" stroke="#1e3c5c" stroke-width="1"/>
<path d="M56,389h1v1h-1zM66,389h1v1h-1zM77,389h1v1h-1zM87,389h1v1h-1zM98,389h1v1h-1zM109,389h1v1h-1zM119,389h1v1h-1zM130,389h1v1h-1zM141,389h1v1h-1zM151,389h1v1h-1zM162,389h1v1h-1zM173,389h1v1h-1zM183,389h1v1h-1zM194,389h1v1h-1zM205,389h1v1h-1zM215,389h1v1h-1zM226,389h1v1h-1zM237,389h1v1h-1zM247,389h1v1h-1zM258,389h1v1h-1zM269,389h1v1h-1zM279,389h1v1h-1zM290,389h1v1h-1zM301,389h1v1h-1zM311,389h1v1h-1zM322,389h1v1h-1zM333,389h1v1h-1zM343,389h1v1h-1zM354,389h1v1h-1zM365,389h1v1h-1zM375,389h1v1h-1zM386,389h1v1h-1zM397,389h1v1h-1zM407,389h1v1h-1zM418,389h1v1h-1zM429,389h1v1h-1zM439,389h1v1h-1zM450,389h1v1h-1zM461,389h1v1h-1zM471,389h1v1h-1zM482,389h1v1h-1zM493,389h1v1h-1zM503,389h1v1h-1zM514,389h1v1h-1zM525,389h1v1h-1zM535,389h1v1h-1zM546,389h1v1h-1zM557,389h1v1h-1zM567,389h1v1h-1zM578,389h1v1h-1zM589,389h1v1h-1zM599,389h1v1h-1zM610,389h1v1h-1zM620,389h1v1h-1zM631,389h1v1h-1zM642,389h1v1h-1zM652,389h1v1h-1zM663,389h1v1h-1zM674,389h1v1h-1zM684,389h1v1h-1zM695,389h1v1h-1zM706,389h1v1h-1zM716,389h1v1h-1zM727,389h1v1h-1zM738,389h1v1h-1zM748,389h1v1h-1zM759,389h1v1h-1zM770,389h1v1h-1zM780,389h1v1h-1zM791,389h1v1h-1zM802,389h1v1h-1zM812,389h1v1h-1zM823,389h1v1h-1zM834,389h1v1h-1zM844,389h1v1h-1zM855,389h1v1h-1zM866,389h1v1h-1zM876,389h1v1h-1zM887,389h1v1h-1zM898,389h1v1h-1zM908,389h1v1h-1zM919,389h1v1h-1zM930,389h1v1h-1zM940,389h1v1h-1zM951,389h1v1h-1zM962,389h1v1h-1zM972,389h1v1h-1zM983,389h1v1h-1zM994,389h1v1h-1zM1004,389h1v1h-1zM1015,389h1v1h-1zM1026,389h1v1h-1zM1036,389h1v1h-1zM1047,389h1v1h-1zM1058,389h1v1h-1zM1068,389h1v1h-1zM1079,389h1v1h-1zM1090,389h1v1h-1zM1100,389h1v1h-1zM1111,389h1v1h-1z" fill="#8e3c30"/>
<line x1="46" y1="421.5" x2="1113" y2="421.5" stroke="#1e3c5c" stroke-width="1"/>
<path d="M56,421h1v1h-1zM66,421h1v1h-1zM77,421h1v1h-1zM87,421h1v1h-1zM98,421h1v1h-1zM109,421h1v1h-1zM119,421h1v1h-1zM130,421h1v1h-1zM141,421h1v1h-1zM151,421h1v1h-1zM162,421h1v1h-1zM173,421h1v1h-1zM183,421h1v1h-1zM194,421h1v1h-1zM205,421h1v1h-1zM215,421h1v1h-1zM226,421h1v1h-1zM237,421h1v1h-1zM247,421h1v1h-1zM258,421h1v1h-1zM269,421h1v1h-1zM279,421h1v1h-1zM290,421h1v1h-1zM301,421h1v1h-1zM311,421h1v1h-1zM322,421h1v1h-1zM333,421h1v1h-1zM343,421h1v1h-1zM354,421h1v1h-1zM365,421h1v1h-1zM375,421h1v1h-1zM386,421h1v1h-1zM397,421h1v1h-1zM407,421h1v1h-1zM418,421h1v1h-1zM429,421h1v1h-1zM439,421h1v1h-1zM450,421h1v1h-1zM461,421h1v1h-1zM471,421h1v1h-1zM482,421h1v1h-1zM493,421h1v1h-1zM503,421h1v1h-1zM514,421h1v1h-1zM525,421h1v1h-1zM535,421h1v1h-1zM546,421h1v1h-1zM557,421h1v1h-1zM567,421h1v1h-1zM578,421h1v1h-1zM589,421h1v1h-1zM599,421h1v1h-1zM610,421h1v1h-1zM620,421h1v1h-1zM631,421h1v1h-1zM642,421h1v1h-1zM652,421h1v1h-1zM663,421h1v1h-1zM674,421h1v1h-1zM684,421h1v1h-1zM695,421h1v1h-1zM706,421h1v1h-1zM716,421h1v1h-1zM727,421h1v1h-1zM738,421h1v1h-1zM748,421h1v1h-1zM759,421h1v1h-1zM770,421h1v1h-1zM780,421h1v1h-1zM791,421h1v1h-1zM802,421h1v1h-1zM812,421h1v1h-1zM823,421h1v1h-1zM834,421h1v1h-1zM844,421h1v1h-1zM855,421h1v1h-1zM866,421h1v1h-1zM876,421h1v1h-1zM887,421h1v1h-1zM898,421h1v1h-1zM908,421h1v1h-1zM919,421h1v1h-1zM930,421h1v1h-1zM940,421h1v1h-1zM951,421h1v1h-1zM962,421h1v1h-1zM972,421h1v1h-1zM983,421h1v1h-1zM994,421h1v1h-1zM1004,421h1v1h-1zM1015,421h1v1h-1zM1026,421h1v1h-1zM1036,421h1v1h-1zM1047,421h1v1h-1zM1058,421h1v1h-1zM1068,421h1v1h-1zM1079,421h1v1h-1zM1090,421h1v1h-1zM1100,421h1v1h-1zM1111,421h1v1h-1z" fill="#8e3c30"/>
<line x1="46" y1="453.5" x2="1113" y2="453.5" stroke="#1e3c5c" stroke-width="1"/>
<path d="M56,453h1v1h-1zM66,453h1v1h-1zM77,453h1v1h-1zM87,453h1v1h-1zM98,453h1v1h-1zM109,453h1v1h-1zM119,453h1v1h-1zM130,453h1v1h-1zM141,453h1v1h-1zM151,453h1v1h-1zM162,453h1v1h-1zM173,453h1v1h-1zM183,453h1v1h-1zM194,453h1v1h-1zM205,453h1v1h-1zM215,453h1v1h-1zM226,453h1v1h-1zM237,453h1v1h-1zM247,453h1v1h-1zM258,453h1v1h-1zM269,453h1v1h-1zM279,453h1v1h-1zM290,453h1v1h-1zM301,453h1v1h-1zM311,453h1v1h-1zM322,453h1v1h-1zM333,453h1v1h-1zM343,453h1v1h-1zM354,453h1v1h-1zM365,453h1v1h-1zM375,453h1v1h-1zM386,453h1v1h-1zM397,453h1v1h-1zM407,453h1v1h-1zM418,453h1v1h-1zM429,453h1v1h-1zM439,453h1v1h-1zM450,453h1v1h-1zM461,453h1v1h-1zM471,453h1v1h-1zM482,453h1v1h-1zM493,453h1v1h-1zM503,453h1v1h-1zM514,453h1v1h-1zM525,453h1v1h-1zM535,453h1v1h-1zM546,453h1v1h-1zM557,453h1v1h-1zM567,453h1v1h-1zM578,453h1v1h-1zM589,453h1v1h-1zM599,453h1v1h-1zM610,453h1v1h-1zM620,453h1v1h-1zM631,453h1v1h-1zM642,453h1v1h-1zM652,453h1v1h-1zM663,453h1v1h-1zM674,453h1v1h-1zM684,453h1v1h-1zM695,453h1v1h-1zM706,453h1v1h-1zM716,453h1v1h-1zM727,453h1v1h-1zM738,453h1v1h-1zM748,453h1v1h-1zM759,453h1v1h-1zM770,453h1v1h-1zM780,453h1v1h-1zM791,453h1v1h-1zM802,453h1v1h-1zM812,453h1v1h-1zM823,453h1v1h-1zM834,453h1v1h-1zM844,453h1v1h-1zM855,453h1v1h-1zM866,453h1v1h-1zM876,453h1v1h-1zM887,453h1v1h-1zM898,453h1v1h-1zM908,453h1v1h-1zM919,453h1v1h-1zM930,453h1v1h-1zM940,453h1v1h-1zM951,453h1v1h-1zM962,453h1v1h-1zM972,453h1v1h-1zM983,453h1v1h-1zM994,453h1v1h-1zM1004,453h1v1h-1zM1015,453h1v1h-1zM1026,453h1v1h-1zM1036,453h1v1h-1zM1047,453h1v1h-1zM1058,453h1v1h-1zM1068,453h1v1h-1zM1079,453h1v1h-1zM1090,453h1v1h-1zM1100,453h1v1h-1zM1111,453h1v1h-1z" fill="#8e3c30"/>
<line x1="46" y1="484.5" x2="1113" y2="484.5" stroke="#1e3c5c" stroke-width="1"/>
<path d="M56,484h1v1h-1zM66,484h1v1h-1zM77,484h1v1h-1zM87,484h1v1h-1zM98,484h1v1h-1zM109,484h1v1h-1zM119,484h1v1h-1zM130,484h1v1h-1zM141,484h1v1h-1zM151,484h1v1h-1zM162,484h1v1h-1zM173,484h1v1h-1zM183,484h1v1h-1zM194,484h1v1h-1zM205,484h1v1h-1zM215,484h1v1h-1zM226,484h1v1h-1zM237,484h1v1h-1zM247,484h1v1h-1zM258,484h1v1h-1zM269,484h1v1h-1zM279,484h1v1h-1zM290,484h1v1h-1zM301,484h1v1h-1zM311,484h1v1h-1zM322,484h1v1h-1zM333,484h1v1h-1zM343,484h1v1h-1zM354,484h1v1h-1zM365,484h1v1h-1zM375,484h1v1h-1zM386,484h1v1h-1zM397,484h1v1h-1zM407,484h1v1h-1zM418,484h1v1h-1zM429,484h1v1h-1zM439,484h1v1h-1zM450,484h1v1h-1zM461,484h1v1h-1zM471,484h1v1h-1zM482,484h1v1h-1zM493,484h1v1h-1zM503,484h1v1h-1zM514,484h1v1h-1zM525,484h1v1h-1zM535,484h1v1h-1zM546,484h1v1h-1zM557,484h1v1h-1zM567,484h1v1h-1zM578,484h1v1h-1zM589,484h1v1h-1zM599,484h1v1h-1zM610,484h1v1h-1zM620,484h1v1h-1zM631,484h1v1h-1zM642,484h1v1h-1zM652,484h1v1h-1zM663,484h1v1h-1zM674,484h1v1h-1zM684,484h1v1h-1zM695,484h1v1h-1zM706,484h1v1h-1zM716,484h1v1h-1zM727,484h1v1h-1zM738,484h1v1h-1zM748,484h1v1h-1zM759,484h1v1h-1zM770,484h1v1h-1zM780,484h1v1h-1zM791,484h1v1h-1zM802,484h1v1h-1zM812,484h1v1h-1zM823,484h1v1h-1zM834,484h1v1h-1zM844,484h1v1h-1zM855,484h1v1h-1zM866,484h1v1h-1zM876,484h1v1h-1zM887,484h1v1h-1zM898,484h1v1h-1zM908,484h1v1h-1zM919,484h1v1h-1zM930,484h1v1h-1zM940,484h1v1h-1zM951,484h1v1h-1zM962,484h1v1h-1zM972,484h1v1h-1zM983,484h1v1h-1zM994,484h1v1h-1zM1004,484h1v1h-1zM1015,484h1v1h-1zM1026,484h1v1h-1zM1036,484h1v1h-1zM1047,484h1v1h-1zM1058,484h1v1h-1zM1068,484h1v1h-1zM1079,484h1v1h-1zM1090,484h1v1h-1zM1100,484h1v1h-1zM1111,484h1v1h-1z" fill="#8e3c30"/>
<line x1="46" y1="516.5" x2="1113" y2="516.5" stroke="#1e3c5c" stroke-width="1"/>
<path d="M56,516h1v1h-1zM66,516h1v1h-1zM77,516h1v1h-1zM87,516h1v1h-1zM98,516h1v1h-1zM109,516h1v1h-1zM119,516h1v1h-1zM130,516h1v1h-1zM141,516h1v1h-1zM151,516h1v1h-1zM162,516h1v1h-1zM173,516h1v1h-1zM183,516h1v1h-1zM194,516h1v1h-1zM205,516h1v1h-1zM215,516h1v1h-1zM226,516h1v1h-1zM237,516h1v1h-1zM247,516h1v1h-1zM258,516h1v1h-1zM269,516h1v1h-1zM279,516h1v1h-1zM290,516h1v1h-1zM301,516h1v1h-1zM311,516h1v1h-1zM322,516h1v1h-1zM333,516h1v1h-1zM343,516h1v1h-1zM354,516h1v1h-1zM365,516h1v1h-1zM375,516h1v1h-1zM386,516h1v1h-1zM397,516h1v1h-1zM407,516h1v1h-1zM418,516h1v1h-1zM429,516h1v1h-1zM439,516h1v1h-1zM450,516h1v1h-1zM461,516h1v1h-1zM471,516h1v1h-1zM482,516h1v1h-1zM493,516h1v1h-1zM503,516h1v1h-1zM514,516h1v1h-1zM525,516h1v1h-1zM535,516h1v1h-1zM546,516h1v1h-1zM557,516h1v1h-1zM567,516h1v1h-1zM578,516h1v1h-1zM589,516h1v1h-1zM599,516h1v1h-1zM610,516h1v1h-1zM620,516h1v1h-1zM631,516h1v1h-1zM642,516h1v1h-1zM652,516h1v1h-1zM663,516h1v1h-1zM674,516h1v1h-1zM684,516h1v1h-1zM695,516h1v1h-1zM706,516h1v1h-1zM716,516h1v1h-1zM727,516h1v1h-1zM738,516h1v1h-1zM748,516h1v1h-1zM759,516h1v1h-1zM770,516h1v1h-1zM780,516h1v1h-1zM791,516h1v1h-1zM802,516h1v1h-1zM812,516h1v1h-1zM823,516h1v1h-1zM834,516h1v1h-1zM844,516h1v1h-1zM855,516h1v1h-1zM866,516h1v1h-1zM876,516h1v1h-1zM887,516h1v1h-1zM898,516h1v1h-1zM908,516h1v1h-1zM919,516h1v1h-1zM930,516h1v1h-1zM940,516h1v1h-1zM951,516h1v1h-1zM962,516h1v1h-1zM972,516h1v1h-1zM983,516h1v1h-1zM994,516h1v1h-1zM1004,516h1v1h-1zM1015,516h1v1h-1zM1026,516h1v1h-1zM1036,516h1v1h-1zM1047,516h1v1h-1zM1058,516h1v1h-1zM1068,516h1v1h-1zM1079,516h1v1h-1zM1090,516h1v1h-1zM1100,516h1v1h-1zM1111,516h1v1h-1z" fill="#8e3c30"/>
<line x1="46" y1="548.5" x2="1113" y2="548.5" stroke="#1e3c5c" stroke-width="1"/>
<path d="M56,548h1v1h-1zM66,548h1v1h-1zM77,548h1v1h-1zM87,548h1v1h-1zM98,548h1v1h-1zM109,548h1v1h-1zM119,548h1v1h-1zM130,548h1v1h-1zM141,548h1v1h-1zM151,548h1v1h-1zM162,548h1v1h-1zM173,548h1v1h-1zM183,548h1v1h-1zM194,548h1v1h-1zM205,548h1v1h-1zM215,548h1v1h-1zM226,548h1v1h-1zM237,548h1v1h-1zM247,548h1v1h-1zM258,548h1v1h-1zM269,548h1v1h-1zM279,548h1v1h-1zM290,548h1v1h-1zM301,548h1v1h-1zM311,548h1v1h-1zM322,548h1v1h-1zM333,548h1v1h-1zM343,548h1v1h-1zM354,548h1v1h-1zM365,548h1v1h-1zM375,548h1v1h-1zM386,548h1v1h-1zM397,548h1v1h-1zM407,548h1v1h-1zM418,548h1v1h-1zM429,548h1v1h-1zM439,548h1v1h-1zM450,548h1v1h-1zM461,548h1v1h-1zM471,548h1v1h-1zM482,548h1v1h-1zM493,548h1v1h-1zM503,548h1v1h-1zM514,548h1v1h-1zM525,548h1v1h-1zM535,548h1v1h-1zM546,548h1v1h-1zM557,548h1v1h-1zM567,548h1v1h-1zM578,548h1v1h-1zM589,548h1v1h-1zM599,548h1v1h-1zM610,548h1v1h-1zM620,548h1v1h-1zM631,548h1v1h-1zM642,548h1v1h-1zM652,548h1v1h-1zM663,548h1v1h-1zM674,548h1v1h-1zM684,548h1v1h-1zM695,548h1v1h-1zM706,548h1v1h-1zM716,548h1v1h-1zM727,548h1v1h-1zM738,548h1v1h-1zM748,548h1v1h-1zM759,548h1v1h-1zM770,548h1v1h-1zM780,548h1v1h-1zM791,548h1v1h-1zM802,548h1v1h-1zM812,548h1v1h-1zM823,548h1v1h-1zM834,548h1v1h-1zM844,548h1v1h-1zM855,548h1v1h-1zM866,548h1v1h-1zM876,548h1v1h-1zM887,548h1v1h-1zM898,548h1v1h-1zM908,548h1v1h-1zM919,548h1v1h-1zM930,548h1v1h-1zM940,548h1v1h-1zM951,548h1v1h-1zM962,548h1v1h-1zM972,548h1v1h-1zM983,548h1v1h-1zM994,548h1v1h-1zM1004,548h1v1h-1zM1015,548h1v1h-1zM1026,548h1v1h-1zM1036,548h1v1h-1zM1047,548h1v1h-1zM1058,548h1v1h-1zM1068,548h1v1h-1zM1079,548h1v1h-1zM1090,548h1v1h-1zM1100,548h1v1h-1zM1111,548h1v1h-1z" fill="#8e3c30"/>
<line x1="46" y1="580.5" x2="1113" y2="580.5" stroke="#1e3c5c" stroke-width="1"/>
<path d="M56,580h1v1h-1zM66,580h1v1h-1zM77,580h1v1h-1zM87,580h1v1h-1zM98,580h1v1h-1zM109,580h1v1h-1zM119,580h1v1h-1zM130,580h1v1h-1zM141,580h1v1h-1zM151,580h1v1h-1zM162,580h1v1h-1zM173,580h1v1h-1zM183,580h1v1h-1zM194,580h1v1h-1zM205,580h1v1h-1zM215,580h1v1h-1zM226,580h1v1h-1zM237,580h1v1h-1zM247,580h1v1h-1zM258,580h1v1h-1zM269,580h1v1h-1zM279,580h1v1h-1zM290,580h1v1h-1zM301,580h1v1h-1zM311,580h1v1h-1zM322,580h1v1h-1zM333,580h1v1h-1zM343,580h1v1h-1zM354,580h1v1h-1zM365,580h1v1h-1zM375,580h1v1h-1zM386,580h1v1h-1zM397,580h1v1h-1zM407,580h1v1h-1zM418,580h1v1h-1zM429,580h1v1h-1zM439,580h1v1h-1zM450,580h1v1h-1zM461,580h1v1h-1zM471,580h1v1h-1zM482,580h1v1h-1zM493,580h1v1h-1zM503,580h1v1h-1zM514,580h1v1h-1zM525,580h1v1h-1zM535,580h1v1h-1zM546,580h1v1h-1zM557,580h1v1h-1zM567,580h1v1h-1zM578,580h1v1h-1zM589,580h1v1h-1zM599,580h1v1h-1zM610,580h1v1h-1zM620,580h1v1h-1zM631,580h1v1h-1zM642,580h1v1h-1zM652,580h1v1h-1zM663,580h1v1h-1zM674,580h1v1h-1zM684,580h1v1h-1zM695,580h1v1h-1zM706,580h1v1h-1zM716,580h1v1h-1zM727,580h1v1h-1zM738,580h1v1h-1zM748,580h1v1h-1zM759,580h1v1h-1zM770,580h1v1h-1zM780,580h1v1h-1zM791,580h1v1h-1zM802,580h1v1h-1zM812,580h1v1h-1zM823,580h1v1h-1zM834,580h1v1h-1zM844,580h1v1h-1zM855,580h1v1h-1zM866,580h1v1h-1zM876,580h1v1h-1zM887,580h1v1h-1zM898,580h1v1h-1zM908,580h1v1h-1zM919,580h1v1h-1zM930,580h1v1h-1zM940,580h1v1h-1zM951,580h1v1h-1zM962,580h1v1h-1zM972,580h1v1h-1zM983,580h1v1h-1zM994,580h1v1h-1zM1004,580h1v1h-1zM1015,580h1v1h-1zM1026,580h1v1h-1zM1036,580h1v1h-1zM1047,580h1v1h-1zM1058,580h1v1h-1zM1068,580h1v1h-1zM1079,580h1v1h-1zM1090,580h1v1h-1zM1100,580h1v1h-1zM1111,580h1v1h-1z" fill="#8e3c30"/>
<line x1="46" y1="612.5" x2="1113" y2="612.5" stroke="#1e3c5c" stroke-width="1"/>
<path d="M56,612h1v1h-1zM66,612h1v1h-1zM77,612h1v1h-1zM87,612h1v1h-1zM98,612h1v1h-1zM109,612h1v1h-1zM119,612h1v1h-1zM130,612h1v1h-1zM141,612h1v1h-1zM151,612h1v1h-1zM162,612h1v1h-1zM173,612h1v1h-1zM183,612h1v1h-1zM194,612h1v1h-1zM205,612h1v1h-1zM215,612h1v1h-1zM226,612h1v1h-1zM237,612h1v1h-1zM247,612h1v1h-1zM258,612h1v1h-1zM269,612h1v1h-1zM279,612h1v1h-1zM290,612h1v1h-1zM301,612h1v1h-1zM311,612h1v1h-1zM322,612h1v1h-1zM333,612h1v1h-1zM343,612h1v1h-1zM354,612h1v1h-1zM365,612h1v1h-1zM375,612h1v1h-1zM386,612h1v1h-1zM397,612h1v1h-1zM407,612h1v1h-1zM418,612h1v1h-1zM429,612h1v1h-1zM439,612h1v1h-1zM450,612h1v1h-1zM461,612h1v1h-1zM471,612h1v1h-1zM482,612h1v1h-1zM493,612h1v1h-1zM503,612h1v1h-1zM514,612h1v1h-1zM525,612h1v1h-1zM535,612h1v1h-1zM546,612h1v1h-1zM557,612h1v1h-1zM567,612h1v1h-1zM578,612h1v1h-1zM589,612h1v1h-1zM599,612h1v1h-1zM610,612h1v1h-1zM620,612h1v1h-1zM631,612h1v1h-1zM642,612h1v1h-1zM652,612h1v1h-1zM663,612h1v1h-1zM674,612h1v1h-1zM684,612h1v1h-1zM695,612h1v1h-1zM706,612h1v1h-1zM716,612h1v1h-1zM727,612h1v1h-1zM738,612h1v1h-1zM748,612h1v1h-1zM759,612h1v1h-1zM770,612h1v1h-1zM780,612h1v1h-1zM791,612h1v1h-1zM802,612h1v1h-1zM812,612h1v1h-1zM823,612h1v1h-1zM834,612h1v1h-1zM844,612h1v1h-1zM855,612h1v1h-1zM866,612h1v1h-1zM876,612h1v1h-1zM887,612h1v1h-1zM898,612h1v1h-1zM908,612h1v1h-1zM919,612h1v1h-1zM930,612h1v1h-1zM940,612h1v1h-1zM951,612h1v1h-1zM962,612h1v1h-1zM972,612h1v1h-1zM983,612h1v1h-1zM994,612h1v1h-1zM1004,612h1v1h-1zM1015,612h1v1h-1zM1026,612h1v1h-1zM1036,612h1v1h-1zM1047,612h1v1h-1zM1058,612h1v1h-1zM1068,612h1v1h-1zM1079,612h1v1h-1zM1090,612h1v1h-1zM1100,612h1v1h-1zM1111,612h1v1h-1z" fill="#8e3c30"/>
<line x1="46" y1="644.5" x2="1113" y2="644.5" stroke="#1e3c5c" stroke-width="1"/>
<path d="M56,644h1v1h-1zM66,644h1v1h-1zM77,644h1v1h-1zM87,644h1v1h-1zM98,644h1v1h-1zM109,644h1v1h-1zM119,644h1v1h-1zM130,644h1v1h-1zM141,644h1v1h-1zM151,644h1v1h-1zM162,644h1v1h-1zM173,644h1v1h-1zM183,644h1v1h-1zM194,644h1v1h-1zM205,644h1v1h-1zM215,644h1v1h-1zM226,644h1v1h-1zM237,644h1v1h-1zM247,644h1v1h-1zM258,644h1v1h-1zM269,644h1v1h-1zM279,644h1v1h-1zM290,644h1v1h-1zM301,644h1v1h-1zM311,644h1v1h-1zM322,644h1v1h-1zM333,644h1v1h-1zM343,644h1v1h-1zM354,644h1v1h-1zM365,644h1v1h-1zM375,644h1v1h-1zM386,644h1v1h-1zM397,644h1v1h-1zM407,644h1v1h-1zM418,644h1v1h-1zM429,644h1v1h-1zM439,644h1v1h-1zM450,644h1v1h-1zM461,644h1v1h-1zM471,644h1v1h-1zM482,644h1v1h-1zM493,644h1v1h-1zM503,644h1v1h-1zM514,644h1v1h-1zM525,644h1v1h-1zM535,644h1v1h-1zM546,644h1v1h-1zM557,644h1v1h-1zM567,644h1v1h-1zM578,644h1v1h-1zM589,644h1v1h-1zM599,644h1v1h-1zM610,644h1v1h-1zM620,644h1v1h-1zM631,644h1v1h-1zM642,644h1v1h-1zM652,644h1v1h-1zM663,644h1v1h-1zM674,644h1v1h-1zM684,644h1v1h-1zM695,644h1v1h-1zM706,644h1v1h-1zM716,644h1v1h-1zM727,644h1v1h-1zM738,644h1v1h-1zM748,644h1v1h-1zM759,644h1v1h-1zM770,644h1v1h-1zM780,644h1v1h-1zM791,644h1v1h-1zM802,644h1v1h-1zM812,644h1v1h-1zM823,644h1v1h-1zM834,644h1v1h-1zM844,644h1v1h-1zM855,644h1v1h-1zM866,644h1v1h-1zM876,644h1v1h-1zM887,644h1v1h-1zM898,644h1v1h-1zM908,644h1v1h-1zM919,644h1v1h-1zM930,644h1v1h-1zM940,644h1v1h-1zM951,644h1v1h-1zM962,644h1v1h-1zM972,644h1v1h-1zM983,644h1v1h-1zM994,644h1v1h-1zM1004,644h1v1h-1zM1015,644h1v1h-1zM1026,644h1v1h-1zM1036,644h1v1h-1zM1047,644h1v1h-1zM1058,644h1v1h-1zM1068,644h1v1h-1zM1079,644h1v1h-1zM1090,644h1v1h-1zM1100,644h1v1h-1zM1111,644h1v1h-1z" fill="#8e3c30"/>
<line x1="46" y1="675.5" x2="1113" y2="675.5" stroke="#1e3c5c" stroke-width="1"/>
<path d="M56,675h1v1h-1zM66,675h1v1h-1zM77,675h1v1h-1zM87,675h1v1h-1zM98,675h1v1h-1zM109,675h1v1h-1zM119,675h1v1h-1zM130,675h1v1h-1zM141,675h1v1h-1zM151,675h1v1h-1zM162,675h1v1h-1zM173,675h1v1h-1zM183,675h1v1h-1zM194,675h1v1h-1zM205,675h1v1h-1zM215,675h1v1h-1zM226,675h1v1h-1zM237,675h1v1h-1zM247,675h1v1h-1zM258,675h1v1h-1zM269,675h1v1h-1zM279,675h1v1h-1zM290,675h1v1h-1zM301,675h1v1h-1zM311,675h1v1h-1zM322,675h1v1h-1zM333,675h1v1h-1zM343,675h1v1h-1zM354,675h1v1h-1zM365,675h1v1h-1zM375,675h1v1h-1zM386,675h1v1h-1zM397,675h1v1h-1zM407,675h1v1h-1zM418,675h1v1h-1zM429,675h1v1h-1zM439,675h1v1h-1zM450,675h1v1h-1zM461,675h1v1h-1zM471,675h1v1h-1zM482,675h1v1h-1zM493,675h1v1h-1zM503,675h1v1h-1zM514,675h1v1h-1zM525,675h1v1h-1zM535,675h1v1h-1zM546,675h1v1h-1zM557,675h1v1h-1zM567,675h1v1h-1zM578,675h1v1h-1zM589,675h1v1h-1zM599,675h1v1h-1zM610,675h1v1h-1zM620,675h1v1h-1zM631,675h1v1h-1zM642,675h1v1h-1zM652,675h1v1h-1zM663,675h1v1h-1zM674,675h1v1h-1zM684,675h1v1h-1zM695,675h1v1h-1zM706,675h1v1h-1zM716,675h1v1h-1zM727,675h1v1h-1zM738,675h1v1h-1zM748,675h1v1h-1zM759,675h1v1h-1zM770,675h1v1h-1zM780,675h1v1h-1zM791,675h1v1h-1zM802,675h1v1h-1zM812,675h1v1h-1zM823,675h1v1h-1zM834,675h1v1h-1zM844,675h1v1h-1zM855,675h1v1h-1zM866,675h1v1h-1zM876,675h1v1h-1zM887,675h1v1h-1zM898,675h1v1h-1zM908,675h1v1h-1zM919,675h1v1h-1zM930,675h1v1h-1zM940,675h1v1h-1zM951,675h1v1h-1zM962,675h1v1h-1zM972,675h1v1h-1zM983,675h1v1h-1zM994,675h1v1h-1zM1004,675h1v1h-1zM1015,675h1v1h-1zM1026,675h1v1h-1zM1036,675h1v1h-1zM1047,675h1v1h-1zM1058,675h1v1h-1zM1068,675h1v1h-1zM1079,675h1v1h-1zM1090,675h1v1h-1zM1100,675h1v1h-1zM1111,675h1v1h-1z" fill="#8e3c30"/>
<line x1="46" y1="707.5" x2="1113" y2="707.5" stroke="#1e3c5c" stroke-width="1"/>
<path d="M56,707h1v1h-1zM66,707h1v1h-1zM77,707h1v1h-1zM87,707h1v1h-1zM98,707h1v1h-1zM109,707h1v1h-1zM119,707h1v1h-1zM130,707h1v1h-1zM141,707h1v1h-1zM151,707h1v1h-1zM162,707h1v1h-1zM173,707h1v1h-1zM183,707h1v1h-1zM194,707h1v1h-1zM205,707h1v1h-1zM215,707h1v1h-1zM226,707h1v1h-1zM237,707h1v1h-1zM247,707h1v1h-1zM258,707h1v1h-1zM269,707h1v1h-1zM279,707h1v1h-1zM290,707h1v1h-1zM301,707h1v1h-1zM311,707h1v1h-1zM322,707h1v1h-1zM333,707h1v1h-1zM343,707h1v1h-1zM354,707h1v1h-1zM365,707h1v1h-1zM375,707h1v1h-1zM386,707h1v1h-1zM397,707h1v1h-1zM407,707h1v1h-1zM418,707h1v1h-1zM429,707h1v1h-1zM439,707h1v1h-1zM450,707h1v1h-1zM461,707h1v1h-1zM471,707h1v1h-1zM482,707h1v1h-1zM493,707h1v1h-1zM503,707h1v1h-1zM514,707h1v1h-1zM525,707h1v1h-1zM535,707h1v1h-1zM546,707h1v1h-1zM557,707h1v1h-1zM567,707h1v1h-1zM578,707h1v1h-1zM589,707h1v1h-1zM599,707h1v1h-1zM610,707h1v1h-1zM620,707h1v1h-1zM631,707h1v1h-1zM642,707h1v1h-1zM652,707h1v1h-1zM663,707h1v1h-1zM674,707h1v1h-1zM684,707h1v1h-1zM695,707h1v1h-1zM706,707h1v1h-1zM716,707h1v1h-1zM727,707h1v1h-1zM738,707h1v1h-1zM748,707h1v1h-1zM759,707h1v1h-1zM770,707h1v1h-1zM780,707h1v1h-1zM791,707h1v1h-1zM802,707h1v1h-1zM812,707h1v1h-1zM823,707h1v1h-1zM834,707h1v1h-1zM844,707h1v1h-1zM855,707h1v1h-1zM866,707h1v1h-1zM876,707h1v1h-1zM887,707h1v1h-1zM898,707h1v1h-1zM908,707h1v1h-1zM919,707h1v1h-1zM930,707h1v1h-1zM940,707h1v1h-1zM951,707h1v1h-1zM962,707h1v1h-1zM972,707h1v1h-1zM983,707h1v1h-1zM994,707h1v1h-1zM1004,707h1v1h-1zM1015,707h1v1h-1zM1026,707h1v1h-1zM1036,707h1v1h-1zM1047,707h1v1h-1zM1058,707h1v1h-1zM1068,707h1v1h-1zM1079,707h1v1h-1zM1090,707h1v1h-1zM1100,707h1v1h-1zM1111,707h1v1h-1z" fill="#8e3c30"/>
<line x1="46" y1="739.5" x2="1113" y2="739.5" stroke="#1e3c5c" stroke-width="1"/>
<path d="M56,739h1v1h-1zM66,739h1v1h-1zM77,739h1v1h-1zM87,739h1v1h-1zM98,739h1v1h-1zM109,739h1v1h-1zM119,739h1v1h-1zM130,739h1v1h-1zM141,739h1v1h-1zM151,739h1v1h-1zM162,739h1v1h-1zM173,739h1v1h-1zM183,739h1v1h-1zM194,739h1v1h-1zM205,739h1v1h-1zM215,739h1v1h-1zM226,739h1v1h-1zM237,739h1v1h-1zM247,739h1v1h-1zM258,739h1v1h-1zM269,739h1v1h-1zM279,739h1v1h-1zM290,739h1v1h-1zM301,739h1v1h-1zM311,739h1v1h-1zM322,739h1v1h-1zM333,739h1v1h-1zM343,739h1v1h-1zM354,739h1v1h-1zM365,739h1v1h-1zM375,739h1v1h-1zM386,739h1v1h-1zM397,739h1v1h-1zM407,739h1v1h-1zM418,739h1v1h-1zM429,739h1v1h-1zM439,739h1v1h-1zM450,739h1v1h-1zM461,739h1v1h-1zM471,739h1v1h-1zM482,739h1v1h-1zM493,739h1v1h-1zM503,739h1v1h-1zM514,739h1v1h-1zM525,739h1v1h-1zM535,739h1v1h-1zM546,739h1v1h-1zM557,739h1v1h-1zM567,739h1v1h-1zM578,739h1v1h-1zM589,739h1v1h-1zM599,739h1v1h-1zM610,739h1v1h-1zM620,739h1v1h-1zM631,739h1v1h-1zM642,739h1v1h-1zM652,739h1v1h-1zM663,739h1v1h-1zM674,739h1v1h-1zM684,739h1v1h-1zM695,739h1v1h-1zM706,739h1v1h-1zM716,739h1v1h-1zM727,739h1v1h-1zM738,739h1v1h-1zM748,739h1v1h-1zM759,739h1v1h-1zM770,739h1v1h-1zM780,739h1v1h-1zM791,739h1v1h-1zM802,739h1v1h-1zM812,739h1v1h-1zM823,739h1v1h-1zM834,739h1v1h-1zM844,739h1v1h-1zM855,739h1v1h-1zM866,739h1v1h-1zM876,739h1v1h-1zM887,739h1v1h-1zM898,739h1v1h-1zM908,739h1v1h-1zM919,739h1v1h-1zM930,739h1v1h-1zM940,739h1v1h-1zM951,739h1v1h-1zM962,739h1v1h-1zM972,739h1v1h-1zM983,739h1v1h-1zM994,739h1v1h-1zM1004,739h1v1h-1zM1015,739h1v1h-1zM1026,739h1v1h-1zM1036,739h1v1h-1zM1047,739h1v1h-1zM1058,739h1v1h-1zM1068,739h1v1h-1zM1079,739h1v1h-1zM1090,739h1v1h-1zM1100,739h1v1h-1zM1111,739h1v1h-1z" fill="#8e3c30"/>
<line x1="46" y1="771.5" x2="1113" y2="771.5" stroke="#1e3c5c" stroke-width="1"/>
<path d="M56,771h1v1h-1zM66,771h1v1h-1zM77,771h1v1h-1zM87,771h1v1h-1zM98,771h1v1h-1zM109,771h1v1h-1zM119,771h1v1h-1zM130,771h1v1h-1zM141,771h1v1h-1zM151,771h1v1h-1zM162,771h1v1h-1zM173,771h1v1h-1zM183,771h1v1h-1zM194,771h1v1h-1zM205,771h1v1h-1zM215,771h1v1h-1zM226,771h1v1h-1zM237,771h1v1h-1zM247,771h1v1h-1zM258,771h1v1h-1zM269,771h1v1h-1zM279,771h1v1h-1zM290,771h1v1h-1zM301,771h1v1h-1zM311,771h1v1h-1zM322,771h1v1h-1zM333,771h1v1h-1zM343,771h1v1h-1zM354,771h1v1h-1zM365,771h1v1h-1zM375,771h1v1h-1zM386,771h1v1h-1zM397,771h1v1h-1zM407,771h1v1h-1zM418,771h1v1h-1zM429,771h1v1h-1zM439,771h1v1h-1zM450,771h1v1h-1zM461,771h1v1h-1zM471,771h1v1h-1zM482,771h1v1h-1zM493,771h1v1h-1zM503,771h1v1h-1zM514,771h1v1h-1zM525,771h1v1h-1zM535,771h1v1h-1zM546,771h1v1h-1zM557,771h1v1h-1zM567,771h1v1h-1zM578,771h1v1h-1zM589,771h1v1h-1zM599,771h1v1h-1zM610,771h1v1h-1zM620,771h1v1h-1zM631,771h1v1h-1zM642,771h1v1h-1zM652,771h1v1h-1zM663,771h1v1h-1zM674,771h1v1h-1zM684,771h1v1h-1zM695,771h1v1h-1zM706,771h1v1h-1zM716,771h1v1h-1zM727,771h1v1h-1zM738,771h1v1h-1zM748,771h1v1h-1zM759,771h1v1h-1zM770,771h1v1h-1zM780,771h1v1h-1zM791,771h1v1h-1zM802,771h1v1h-1zM812,771h1v1h-1zM823,771h1v1h-1zM834,771h1v1h-1zM844,771h1v1h-1zM855,771h1v1h-1zM866,771h1v1h-1zM876,771h1v1h-1zM887,771h1v1h-1zM898,771h1v1h-1zM908,771h1v1h-1zM919,771h1v1h-1zM930,771h1v1h-1zM940,771h1v1h-1zM951,771h1v1h-1zM962,771h1v1h-1zM972,771h1v1h-1zM983,771h1v1h-1zM994,771h1v1h-1zM1004,771h1v1h-1zM1015,771h1v1h-1zM1026,771h1v1h-1zM1036,771h1v1h-1zM1047,771h1v1h-1zM1058,771h1v1h-1zM1068,771h1v1h-1zM1079,771h1v1h-1zM1090,771h1v1h-1zM1100,771h1v1h-1zM1111,771h1v1h-1z" fill="#8e3c30"/>
<line x1="46" y1="802.5" x2="1113" y2="802.5" stroke="#1e3c5c" stroke-width="1"/>
<path d="M56,802h1v1h-1zM66,802h1v1h-1zM77,802h1v1h-1zM87,802h1v1h-1zM98,802h1v1h-1zM109,802h1v1h-1zM119,802h1v1h-1zM130,802h1v1h-1zM141,802h1v1h-1zM151,802h1v1h-1zM162,802h1v1h-1zM173,802h1v1h-1zM183,802h1v1h-1zM194,802h1v1h-1zM205,802h1v1h-1zM215,802h1v1h-1zM226,802h1v1h-1zM237,802h1v1h-1zM247,802h1v1h-1zM258,802h1v1h-1zM269,802h1v1h-1zM279,802h1v1h-1zM290,802h1v1h-1zM301,802h1v1h-1zM311,802h1v1h-1zM322,802h1v1h-1zM333,802h1v1h-1zM343,802h1v1h-1zM354,802h1v1h-1zM365,802h1v1h-1zM375,802h1v1h-1zM386,802h1v1h-1zM397,802h1v1h-1zM407,802h1v1h-1zM418,802h1v1h-1zM429,802h1v1h-1zM439,802h1v1h-1zM450,802h1v1h-1zM461,802h1v1h-1zM471,802h1v1h-1zM482,802h1v1h-1zM493,802h1v1h-1zM503,802h1v1h-1zM514,802h1v1h-1zM525,802h1v1h-1zM535,802h1v1h-1zM546,802h1v1h-1zM557,802h1v1h-1zM567,802h1v1h-1zM578,802h1v1h-1zM589,802h1v1h-1zM599,802h1v1h-1zM610,802h1v1h-1zM620,802h1v1h-1zM631,802h1v1h-1zM642,802h1v1h-1zM652,802h1v1h-1zM663,802h1v1h-1zM674,802h1v1h-1zM684,802h1v1h-1zM695,802h1v1h-1zM706,802h1v1h-1zM716,802h1v1h-1zM727,802h1v1h-1zM738,802h1v1h-1zM748,802h1v1h-1zM759,802h1v1h-1zM770,802h1v1h-1zM780,802h1v1h-1zM791,802h1v1h-1zM802,802h1v1h-1zM812,802h1v1h-1zM823,802h1v1h-1zM834,802h1v1h-1zM844,802h1v1h-1zM855,802h1v1h-1zM866,802h1v1h-1zM876,802h1v1h-1zM887,802h1v1h-1zM898,802h1v1h-1zM908,802h1v1h-1zM919,802h1v1h-1zM930,802h1v1h-1zM940,802h1v1h-1zM951,802h1v1h-1zM962,802h1v1h-1zM972,802h1v1h-1zM983,802h1v1h-1zM994,802h1v1h-1zM1004,802h1v1h-1zM1015,802h1v1h-1zM1026,802h1v1h-1zM1036,802h1v1h-1zM1047,802h1v1h-1zM1058,802h1v1h-1zM1068,802h1v1h-1zM1079,802h1v1h-1zM1090,802h1v1h-1zM1100,802h1v1h-1zM1111,802h1v1h-1z" fill="#8e3c30"/>
<line x1="46" y1="808.5" x2="1113" y2="808.5" stroke="#8284b4" stroke-width="1"/>
<line x1="47" y1="808.5" x2="1113" y2="808.5" stroke="#6a9a40" stroke-width="1" stroke-dasharray="1 3"/>
<rect x="46" y="676" width="1067" height="2" fill="#1e3c5c"/>
<line x1="47" y1="677.5" x2="1113" y2="677.5" stroke="#8e3c30" stroke-width="1" stroke-dasharray="1 1"/>
<rect x="46" y="802" width="1067" height="2" fill="#1e3c5c"/>
<line x1="47" y1="803.5" x2="1113" y2="803.5" stroke="#8e3c30" stroke-width="1" stroke-dasharray="1 1"/>
<line x1="66.5" y1="156" x2="66.5" y2="817" stroke="#6a7474" stroke-width="1"/>
<line x1="194.5" y1="156" x2="194.5" y2="817" stroke="#6a7474" stroke-width="1"/>
<line x1="322.5" y1="156" x2="322.5" y2="817" stroke="#6a7474" stroke-width="1"/>
<line x1="450.5" y1="156" x2="450.5" y2="817" stroke="#6a7474" stroke-width="1"/>
<line x1="578.5" y1="156" x2="578.5" y2="817" stroke="#6a7474" stroke-width="1"/>
<line x1="707.5" y1="156" x2="707.5" y2="817" stroke="#6a7474" stroke-width="1"/>
<line x1="836.5" y1="156" x2="836.5" y2="817" stroke="#6a7474" stroke-width="1"/>
<clipPath id="bandclip"><polygon points="46.0,340.0 61.0,318.0 76.3,306.0 91.4,299.0 109.5,292.4 129.2,286.3 146.0,284.0 161.2,286.5 185.6,295.0 196.0,295.0 220.5,291.7 246.0,293.4 271.7,297.2 299.4,301.2 339.0,303.2 380.0,307.0 408.0,308.5 415.0,310.5 421.9,317.3 431.2,325.4 440.5,334.1 449.8,344.0 461.5,353.3 478.9,376.5 508.2,410.7 542.5,437.6 576.7,459.6 606.0,471.8 620.0,477.2 638.2,476.2 656.3,480.2 677.5,493.8 695.6,512.0 710.8,530.1 722.9,537.7 747.1,539.2 771.3,540.7 795.5,539.2 810.0,540.0 825.0,540.0 840.3,533.0 855.4,522.2 870.5,507.1 888.7,498.0 909.8,490.4 928.0,487.4 943.1,485.3 967.3,482.9 985.5,473.8 1000.6,467.7 1000.6,614.5 988.5,591.8 973.4,567.6 958.3,558.5 937.1,560.0 915.9,561.5 897.7,567.6 876.6,578.2 855.4,582.7 837.2,588.8 820.0,589.1 795.5,588.2 771.3,588.2 747.1,588.2 722.9,587.6 704.7,590.6 680.5,589.1 654.1,579.2 644.8,574.5 632.0,568.7 621.5,559.4 612.2,554.7 600.5,550.6 588.9,548.3 574.9,544.2 563.3,539.0 551.6,533.8 540.0,526.2 527.8,518.3 498.5,498.7 478.9,491.4 459.3,491.4 434.1,480.3 418.3,466.5 398.5,440.8 378.7,419.0 358.9,397.3 339.1,381.4 319.3,365.6 299.6,353.7 279.8,341.9 260.0,338.3 227.5,339.9 206.6,344.0 192.6,351.0 175.0,365.0 151.0,400.0 139.2,416.3 123.0,437.3 106.6,458.3 88.0,474.6 67.0,487.4 46.0,494.4"/></clipPath>
<polygon points="46.0,340.0 61.0,318.0 76.3,306.0 91.4,299.0 109.5,292.4 129.2,286.3 146.0,284.0 161.2,286.5 185.6,295.0 196.0,295.0 220.5,291.7 246.0,293.4 271.7,297.2 299.4,301.2 339.0,303.2 380.0,307.0 408.0,308.5 415.0,310.5 421.9,317.3 431.2,325.4 440.5,334.1 449.8,344.0 461.5,353.3 478.9,376.5 508.2,410.7 542.5,437.6 576.7,459.6 606.0,471.8 620.0,477.2 638.2,476.2 656.3,480.2 677.5,493.8 695.6,512.0 710.8,530.1 722.9,537.7 747.1,539.2 771.3,540.7 795.5,539.2 810.0,540.0 825.0,540.0 840.3,533.0 855.4,522.2 870.5,507.1 888.7,498.0 909.8,490.4 928.0,487.4 943.1,485.3 967.3,482.9 985.5,473.8 1000.6,467.7 1000.6,614.5 988.5,591.8 973.4,567.6 958.3,558.5 937.1,560.0 915.9,561.5 897.7,567.6 876.6,578.2 855.4,582.7 837.2,588.8 820.0,589.1 795.5,588.2 771.3,588.2 747.1,588.2 722.9,587.6 704.7,590.6 680.5,589.1 654.1,579.2 644.8,574.5 632.0,568.7 621.5,559.4 612.2,554.7 600.5,550.6 588.9,548.3 574.9,544.2 563.3,539.0 551.6,533.8 540.0,526.2 527.8,518.3 498.5,498.7 478.9,491.4 459.3,491.4 434.1,480.3 418.3,466.5 398.5,440.8 378.7,419.0 358.9,397.3 339.1,381.4 319.3,365.6 299.6,353.7 279.8,341.9 260.0,338.3 227.5,339.9 206.6,344.0 192.6,351.0 175.0,365.0 151.0,400.0 139.2,416.3 123.0,437.3 106.6,458.3 88.0,474.6 67.0,487.4 46.0,494.4" fill="#2c4452" shape-rendering="auto"/>
<g clip-path="url(#bandclip)">
<path d="M46,273h960v1h-960zM46,276h960v1h-960zM46,279h960v1h-960zM46,283h960v1h-960zM46,286h960v1h-960zM46,289h960v1h-960zM46,292h960v1h-960zM46,295h960v1h-960zM46,299h960v1h-960zM46,302h960v1h-960zM46,305h960v1h-960zM46,308h960v1h-960zM46,311h960v1h-960zM46,314h960v1h-960zM46,318h960v1h-960zM46,321h960v1h-960zM46,324h960v1h-960zM46,327h960v1h-960zM46,330h960v1h-960zM46,334h960v1h-960zM46,337h960v1h-960zM46,340h960v1h-960zM46,343h960v1h-960zM46,346h960v1h-960zM46,349h960v1h-960zM46,353h960v1h-960zM46,356h960v1h-960zM46,359h960v1h-960zM46,362h960v1h-960zM46,365h960v1h-960zM46,369h960v1h-960zM46,372h960v1h-960zM46,375h960v1h-960zM46,378h960v1h-960zM46,381h960v1h-960zM46,384h960v1h-960zM46,388h960v1h-960zM46,391h960v1h-960zM46,394h960v1h-960zM46,397h960v1h-960zM46,400h960v1h-960zM46,404h960v1h-960zM46,407h960v1h-960zM46,410h960v1h-960zM46,413h960v1h-960zM46,416h960v1h-960zM46,419h960v1h-960zM46,423h960v1h-960zM46,426h960v1h-960zM46,429h960v1h-960zM46,432h960v1h-960zM46,435h960v1h-960zM46,438h960v1h-960zM46,442h960v1h-960zM46,445h960v1h-960zM46,448h960v1h-960zM46,451h960v1h-960zM46,454h960v1h-960zM46,458h960v1h-960zM46,461h960v1h-960zM46,464h960v1h-960zM46,467h960v1h-960zM46,470h960v1h-960zM46,473h960v1h-960zM46,477h960v1h-960zM46,480h960v1h-960zM46,483h960v1h-960zM46,486h960v1h-960zM46,489h960v1h-960zM46,493h960v1h-960zM46,496h960v1h-960zM46,499h960v1h-960zM46,502h960v1h-960zM46,505h960v1h-960zM46,508h960v1h-960zM46,512h960v1h-960zM46,515h960v1h-960zM46,518h960v1h-960zM46,521h960v1h-960zM46,524h960v1h-960zM46,528h960v1h-960zM46,531h960v1h-960zM46,534h960v1h-960zM46,537h960v1h-960zM46,540h960v1h-960zM46,543h960v1h-960zM46,547h960v1h-960zM46,550h960v1h-960zM46,553h960v1h-960zM46,556h960v1h-960zM46,559h960v1h-960zM46,562h960v1h-960zM46,566h960v1h-960zM46,569h960v1h-960zM46,572h960v1h-960zM46,575h960v1h-960zM46,578h960v1h-960zM46,582h960v1h-960zM46,585h960v1h-960zM46,588h960v1h-960zM46,591h960v1h-960zM46,594h960v1h-960zM46,597h960v1h-960zM46,601h960v1h-960zM46,604h960v1h-960zM46,607h960v1h-960zM46,610h960v1h-960zM46,613h960v1h-960zM46,617h960v1h-960zM45,270h1v350h-1zM56,270h1v350h-1zM66,270h1v350h-1zM77,270h1v350h-1zM88,270h1v350h-1zM98,270h1v350h-1zM109,270h1v350h-1zM120,270h1v350h-1zM130,270h1v350h-1zM141,270h1v350h-1zM152,270h1v350h-1zM162,270h1v350h-1zM173,270h1v350h-1zM184,270h1v350h-1zM194,270h1v350h-1zM205,270h1v350h-1zM216,270h1v350h-1zM226,270h1v350h-1zM237,270h1v350h-1zM248,270h1v350h-1zM258,270h1v350h-1zM269,270h1v350h-1zM280,270h1v350h-1zM290,270h1v350h-1zM301,270h1v350h-1zM312,270h1v350h-1zM322,270h1v350h-1zM333,270h1v350h-1zM343,270h1v350h-1zM354,270h1v350h-1zM365,270h1v350h-1zM375,270h1v350h-1zM386,270h1v350h-1zM397,270h1v350h-1zM407,270h1v350h-1zM418,270h1v350h-1zM429,270h1v350h-1zM439,270h1v350h-1zM450,270h1v350h-1zM461,270h1v350h-1zM471,270h1v350h-1zM482,270h1v350h-1zM493,270h1v350h-1zM503,270h1v350h-1zM514,270h1v350h-1zM525,270h1v350h-1zM535,270h1v350h-1zM546,270h1v350h-1zM557,270h1v350h-1zM567,270h1v350h-1zM578,270h1v350h-1zM589,270h1v350h-1zM599,270h1v350h-1zM610,270h1v350h-1zM621,270h1v350h-1zM631,270h1v350h-1zM642,270h1v350h-1zM653,270h1v350h-1zM663,270h1v350h-1zM674,270h1v350h-1zM685,270h1v350h-1zM695,270h1v350h-1zM706,270h1v350h-1zM717,270h1v350h-1zM727,270h1v350h-1zM738,270h1v350h-1zM749,270h1v350h-1zM759,270h1v350h-1zM770,270h1v350h-1zM781,270h1v350h-1zM791,270h1v350h-1zM802,270h1v350h-1zM813,270h1v350h-1zM823,270h1v350h-1zM834,270h1v350h-1zM845,270h1v350h-1zM855,270h1v350h-1zM866,270h1v350h-1zM876,270h1v350h-1zM887,270h1v350h-1zM898,270h1v350h-1zM908,270h1v350h-1zM919,270h1v350h-1zM930,270h1v350h-1zM940,270h1v350h-1zM951,270h1v350h-1zM962,270h1v350h-1zM972,270h1v350h-1zM983,270h1v350h-1zM994,270h1v350h-1zM1004,270h1v350h-1zM1015,270h1v350h-1zM1026,270h1v350h-1zM1036,270h1v350h-1zM1047,270h1v350h-1z" fill="#657070"/>
</g>
<path d="M46.0,340.0 C48.5,336.3 56.0,323.7 61.0,318.0 C66.0,312.3 71.2,309.2 76.3,306.0 C81.4,302.8 85.9,301.3 91.4,299.0 C96.9,296.7 103.2,294.5 109.5,292.4 C115.8,290.3 123.1,287.7 129.2,286.3 C135.3,284.9 140.7,284.0 146.0,284.0 C151.3,284.0 154.6,284.7 161.2,286.5 C167.8,288.3 179.8,293.6 185.6,295.0 C191.4,296.4 190.2,295.6 196.0,295.0 C201.8,294.4 212.2,292.0 220.5,291.7 C228.8,291.4 237.5,292.5 246.0,293.4 C254.5,294.3 262.8,295.9 271.7,297.2 C280.6,298.5 288.2,300.2 299.4,301.2 C310.6,302.2 325.6,302.2 339.0,303.2 C352.4,304.2 368.5,306.1 380.0,307.0 C391.5,307.9 402.2,307.9 408.0,308.5 C413.8,309.1 412.7,309.0 415.0,310.5 C417.3,312.0 419.2,314.8 421.9,317.3 C424.6,319.8 428.1,322.6 431.2,325.4 C434.3,328.2 437.4,331.0 440.5,334.1 C443.6,337.2 446.3,340.8 449.8,344.0 C453.3,347.2 456.6,347.9 461.5,353.3 C466.4,358.7 471.1,366.9 478.9,376.5 C486.7,386.1 497.6,400.5 508.2,410.7 C518.8,420.9 531.1,429.5 542.5,437.6 C553.9,445.8 566.1,453.9 576.7,459.6 C587.3,465.3 598.8,468.9 606.0,471.8 C613.2,474.7 614.6,476.5 620.0,477.2 C625.4,477.9 632.2,475.7 638.2,476.2 C644.2,476.7 649.8,477.3 656.3,480.2 C662.8,483.1 671.0,488.5 677.5,493.8 C684.0,499.1 690.1,505.9 695.6,512.0 C701.1,518.0 706.2,525.8 710.8,530.1 C715.3,534.4 716.8,536.2 722.9,537.7 C729.0,539.2 739.0,538.7 747.1,539.2 C755.2,539.7 763.2,540.7 771.3,540.7 C779.4,540.7 789.0,539.3 795.5,539.2 C802.0,539.1 805.1,539.9 810.0,540.0 C814.9,540.1 820.0,541.2 825.0,540.0 C830.0,538.8 835.2,536.0 840.3,533.0 C845.4,530.0 850.4,526.5 855.4,522.2 C860.4,517.9 865.0,511.1 870.5,507.1 C876.0,503.1 882.2,500.8 888.7,498.0 C895.2,495.2 903.2,492.2 909.8,490.4 C916.3,488.6 922.5,488.2 928.0,487.4 C933.5,486.5 936.6,486.1 943.1,485.3 C949.6,484.6 960.2,484.8 967.3,482.9 C974.4,481.0 980.0,476.3 985.5,473.8 C991.0,471.3 998.1,468.7 1000.6,467.7" fill="none" stroke="#d0d6d8" stroke-width="1.3" stroke-dasharray="2 2" shape-rendering="auto"/>
<path d="M46.0,494.4 C49.5,493.2 60.0,490.7 67.0,487.4 C74.0,484.1 81.4,479.5 88.0,474.6 C94.6,469.8 100.8,464.5 106.6,458.3 C112.4,452.1 117.6,444.3 123.0,437.3 C128.4,430.3 134.5,422.5 139.2,416.3 C143.9,410.1 145.0,408.6 151.0,400.0 C157.0,391.4 168.1,373.2 175.0,365.0 C181.9,356.8 187.3,354.5 192.6,351.0 C197.9,347.5 200.8,345.9 206.6,344.0 C212.4,342.1 218.6,340.8 227.5,339.9 C236.4,338.9 251.3,338.0 260.0,338.3 C268.7,338.6 273.2,339.3 279.8,341.9 C286.4,344.5 293.0,349.8 299.6,353.7 C306.2,357.6 312.7,361.0 319.3,365.6 C325.9,370.2 332.5,376.1 339.1,381.4 C345.7,386.7 352.3,391.0 358.9,397.3 C365.5,403.6 372.1,411.8 378.7,419.0 C385.3,426.2 391.9,432.9 398.5,440.8 C405.1,448.7 412.4,459.9 418.3,466.5 C424.2,473.1 427.3,476.2 434.1,480.3 C440.9,484.4 451.8,489.5 459.3,491.4 C466.8,493.2 472.4,490.2 478.9,491.4 C485.4,492.6 490.4,494.2 498.5,498.7 C506.6,503.2 520.9,513.7 527.8,518.3 C534.7,522.9 536.0,523.6 540.0,526.2 C544.0,528.8 547.7,531.7 551.6,533.8 C555.5,535.9 559.4,537.3 563.3,539.0 C567.2,540.7 570.6,542.7 574.9,544.2 C579.2,545.8 584.6,547.2 588.9,548.3 C593.2,549.4 596.6,549.5 600.5,550.6 C604.4,551.7 608.7,553.2 612.2,554.7 C615.7,556.2 618.2,557.1 621.5,559.4 C624.8,561.7 628.1,566.2 632.0,568.7 C635.9,571.2 641.1,572.8 644.8,574.5 C648.5,576.2 648.1,576.8 654.1,579.2 C660.1,581.6 672.1,587.2 680.5,589.1 C688.9,591.0 697.6,590.9 704.7,590.6 C711.8,590.4 715.8,588.0 722.9,587.6 C730.0,587.2 739.0,588.1 747.1,588.2 C755.2,588.3 763.2,588.2 771.3,588.2 C779.4,588.2 787.4,588.1 795.5,588.2 C803.6,588.4 813.0,589.0 820.0,589.1 C827.0,589.2 831.3,589.9 837.2,588.8 C843.1,587.7 848.8,584.5 855.4,582.7 C862.0,580.9 869.5,580.7 876.6,578.2 C883.7,575.7 891.2,570.4 897.7,567.6 C904.2,564.8 909.3,562.8 915.9,561.5 C922.5,560.2 930.0,560.5 937.1,560.0 C944.2,559.5 952.2,557.2 958.3,558.5 C964.3,559.8 968.4,562.1 973.4,567.6 C978.4,573.1 984.0,584.0 988.5,591.8 C993.0,599.6 998.6,610.7 1000.6,614.5" fill="none" stroke="#d0d6d8" stroke-width="1.3" stroke-dasharray="2 2" shape-rendering="auto"/>
<g clip-path="url(#bandclip)">
<rect x="66" y="156" width="1" height="661" fill="#a8acb4"/>
<rect x="194" y="156" width="1" height="661" fill="#a8acb4"/>
<rect x="322" y="156" width="1" height="661" fill="#a8acb4"/>
<rect x="450" y="156" width="1" height="661" fill="#a8acb4"/>
<rect x="578" y="156" width="1" height="661" fill="#a8acb4"/>
<rect x="707" y="156" width="1" height="661" fill="#a8acb4"/>
<rect x="836" y="156" width="1" height="661" fill="#a8acb4"/>
</g>
<rect x="938" y="156" width="2" height="661" fill="#8c9494"/>
<rect x="963" y="156" width="1" height="661" fill="#c8b018"/>
<path d="M46.0,262.0 C48.3,257.6 55.3,242.8 60.0,235.8 C64.7,228.8 69.3,223.8 74.0,220.0 C78.7,216.2 83.1,214.6 88.0,213.0 C92.9,211.4 97.3,210.7 103.6,210.7 C109.9,210.7 118.8,210.6 126.0,213.0 C133.2,215.4 140.6,220.3 147.0,225.0 C153.4,229.7 159.4,236.0 164.7,241.0 C170.0,246.0 174.8,250.6 178.6,255.0 C182.4,259.4 184.5,265.0 187.4,267.3 C190.3,269.6 189.3,268.9 196.0,269.0 C202.7,269.1 219.2,267.6 227.5,268.0 C235.8,268.4 239.9,270.8 246.0,271.4 C252.1,272.0 257.2,269.8 263.8,271.5 C270.4,273.2 276.3,280.9 285.5,281.4 C294.7,281.9 307.6,278.0 319.2,274.7 C330.8,271.4 344.3,265.8 354.9,261.6 C365.5,257.4 372.7,254.5 382.6,249.7 C392.5,244.9 406.4,233.6 414.3,232.7 C422.2,231.8 425.7,240.6 430.0,244.4 C434.3,248.2 436.7,252.3 440.0,255.6 C443.3,258.9 446.4,259.9 449.6,264.0 C452.8,268.1 456.1,275.2 459.2,280.0 C462.3,284.8 465.2,286.6 468.5,292.8 C471.8,299.0 476.4,312.3 479.0,317.3 C481.6,322.3 479.8,316.1 483.8,322.7 C487.9,329.3 496.0,347.1 503.3,356.9 C510.6,366.7 518.8,373.2 527.8,381.4 C536.8,389.5 547.3,398.9 557.1,405.8 C566.9,412.7 576.7,417.6 586.5,422.9 C596.3,428.2 608.2,436.6 615.8,437.6 C623.4,438.6 626.4,430.4 632.1,428.7 C637.9,427.0 644.2,425.4 650.3,427.2 C656.3,429.0 662.9,434.2 668.4,439.3 C673.9,444.4 678.5,450.9 683.5,457.5 C688.5,464.1 694.7,472.1 698.7,478.7 C702.7,485.2 703.7,491.1 707.7,496.8 C711.7,502.5 716.3,509.6 722.9,512.6 C729.5,515.6 739.0,514.2 747.1,515.0 C755.2,515.8 763.2,516.8 771.3,517.4 C779.4,518.0 789.0,518.0 795.5,518.6 C802.0,519.2 805.1,520.5 810.0,520.7 C814.9,520.9 820.1,521.6 825.1,519.8 C830.1,518.0 835.2,515.2 840.3,510.1 C845.3,505.0 850.4,495.4 855.4,488.9 C860.4,482.3 865.0,475.4 870.5,470.8 C876.0,466.2 882.7,463.2 888.7,461.1 C894.8,459.0 900.8,459.5 906.8,458.1 C912.8,456.7 919.5,454.4 925.0,452.6 C930.5,450.8 934.1,448.2 940.1,447.2 C946.1,446.2 956.2,447.7 961.3,446.6 C966.3,445.5 966.4,445.8 970.4,440.5 C974.4,435.2 980.2,423.0 985.5,414.8 C990.8,406.6 999.3,395.4 1002.1,391.5" fill="none" stroke="#3f8fc4" stroke-width="1.3" shape-rendering="auto"/>
<path d="M46.0,572.5 C48.7,573.0 57.2,576.3 62.3,575.3 C67.3,574.3 71.2,570.1 76.3,566.7 C81.3,563.3 87.9,559.1 92.6,555.0 C97.3,550.9 99.6,548.6 104.3,542.2 C109.0,535.8 114.8,526.3 120.6,516.6 C126.4,506.9 133.8,494.8 139.2,483.9 C144.6,473.0 148.7,461.4 153.2,451.3 C157.7,441.2 162.4,431.3 166.0,423.3 C169.6,415.3 170.6,411.1 175.0,403.4 C179.4,395.7 186.2,383.3 192.6,377.2 C199.0,371.1 204.6,369.2 213.5,366.7 C222.4,364.2 237.6,363.2 246.0,362.2 C254.4,361.2 257.2,360.1 263.8,360.6 C270.4,361.1 279.7,363.4 285.7,365.2 C291.7,367.0 294.0,367.5 299.6,371.5 C305.2,375.5 311.7,379.7 319.3,389.3 C326.9,398.9 337.7,419.1 345.0,429.0 C352.3,438.9 356.4,439.6 363.0,449.0 C369.6,458.4 379.1,476.9 384.5,485.5 C389.9,494.1 392.5,494.2 395.7,500.4 C398.9,506.6 400.8,515.6 403.5,522.5 C406.2,529.4 408.4,535.9 412.2,541.7 C416.0,547.5 421.0,553.5 426.2,557.4 C431.4,561.3 437.8,563.7 443.6,565.3 C449.4,566.9 456.2,567.5 461.1,567.0 C466.1,566.5 468.9,565.6 473.3,562.6 C477.7,559.6 482.8,551.1 487.3,548.7 C491.8,546.3 496.6,547.1 500.5,548.2 C504.4,549.3 506.9,552.3 511.0,555.2 C515.1,558.1 519.8,562.8 525.0,565.7 C530.2,568.6 538.1,570.3 542.4,572.6 C546.7,574.9 546.6,577.6 551.0,579.6 C555.4,581.6 562.0,583.5 568.5,584.8 C575.0,586.1 582.6,586.0 590.0,587.5 C597.4,589.0 607.8,591.6 612.6,593.6 C617.5,595.6 617.5,597.5 619.1,599.3 C620.7,601.1 618.1,600.7 622.0,604.2 C625.9,607.7 636.1,616.1 642.7,620.5 C649.3,624.9 656.6,627.7 661.4,630.3 C666.1,632.9 666.0,635.5 671.2,636.0 C676.4,636.5 686.0,636.0 692.6,633.0 C699.2,630.0 705.8,621.9 710.8,617.9 C715.8,613.9 716.8,610.2 722.9,608.8 C729.0,607.4 739.0,608.9 747.1,609.4 C755.2,609.9 763.2,611.4 771.3,611.8 C779.4,612.2 789.0,611.8 795.5,611.8 C802.0,611.8 803.5,611.0 810.0,611.5 C816.5,612.0 826.1,613.2 834.2,614.5 C842.3,615.8 850.3,618.0 858.4,619.0 C866.5,620.0 875.5,622.0 882.6,620.5 C889.7,619.0 894.8,613.0 900.8,610.0 C906.8,607.0 912.8,604.4 918.9,602.4 C925.0,600.4 930.5,599.1 937.1,597.9 C943.7,596.7 953.8,595.4 958.3,595.4 C962.8,595.4 961.5,594.6 964.3,597.9 C967.1,601.2 971.5,606.8 975.0,615.0 C978.5,623.2 980.7,634.0 985.0,647.0 C989.3,660.0 998.3,685.3 1001.0,693.0" fill="none" stroke="#3f8fc4" stroke-width="1.3" shape-rendering="auto"/>
<path d="M46.0,417.5 C49.9,414.6 63.5,404.7 69.3,400.0 C75.1,395.3 73.2,395.8 80.9,389.4 C88.7,383.0 104.2,369.9 115.8,361.5 C127.4,353.1 139.1,344.9 150.7,338.8 C162.3,332.7 175.7,328.4 185.6,324.9 C195.5,321.4 199.9,319.9 210.0,317.9 C220.1,315.8 234.4,312.1 246.0,312.6 C257.6,313.1 269.4,317.9 279.6,321.0 C289.9,324.1 294.3,326.0 307.5,331.0 C320.7,336.0 343.7,343.1 358.9,350.8 C374.1,358.6 386.9,368.4 398.5,377.5 C410.1,386.6 417.9,397.3 428.2,405.2 C438.4,413.1 446.7,416.8 460.0,425.0 C473.3,433.2 493.6,444.9 508.2,454.7 C522.8,464.5 536.9,476.4 547.4,484.0 C557.9,491.6 562.9,495.4 571.4,500.0 C579.9,504.6 589.9,508.5 598.2,511.6 C606.6,514.7 611.2,515.3 621.5,518.6 C631.8,521.9 650.2,527.5 660.0,531.4 C669.8,535.3 672.5,537.9 680.5,542.2 C688.5,546.5 699.1,554.3 707.7,557.3 C716.3,560.3 723.9,558.6 731.9,560.4 C739.9,562.2 747.8,567.4 756.0,568.0 C764.2,568.6 773.3,564.5 781.0,564.0 C788.7,563.5 794.7,564.7 802.0,565.0 C809.3,565.3 818.8,566.2 825.0,566.0 C831.2,565.8 834.0,565.8 839.0,564.0 C844.0,562.2 850.8,557.2 855.0,555.0 C859.2,552.8 858.9,553.7 864.5,551.0 C870.1,548.3 880.6,542.4 888.7,538.9 C896.8,535.4 904.8,532.3 912.9,529.8 C921.0,527.3 930.0,525.1 937.1,523.7 C944.2,522.3 949.2,521.4 955.2,521.6 C961.2,521.9 967.9,523.3 973.4,525.2 C978.9,527.1 983.7,530.0 988.5,532.8 C993.3,535.6 999.8,540.4 1002.1,541.9" fill="none" stroke="#dc2020" stroke-width="1.7" shape-rendering="auto"/>
<path d="M46.0,430.3 C53.8,428.4 75.3,423.7 92.6,418.6 C109.9,413.6 134.2,404.9 149.7,400.0 C165.2,395.1 173.8,392.8 185.6,389.4 C197.4,386.0 208.1,382.8 220.5,379.7 C232.9,376.6 246.8,374.3 260.0,370.6 C273.2,366.9 286.4,360.7 299.6,357.7 C312.8,354.7 325.9,353.9 339.1,352.8 C352.3,351.7 365.5,349.7 378.7,350.8 C391.9,351.9 404.8,356.6 418.3,359.7 C431.9,362.8 449.9,366.4 460.0,369.6 C470.1,372.8 467.6,374.1 478.9,378.9 C490.2,383.7 511.5,391.6 527.8,398.5 C544.1,405.4 561.3,412.7 576.7,420.5 C592.1,428.3 608.8,439.0 620.0,445.4 C631.2,451.8 636.1,454.5 644.2,459.0 C652.3,463.5 660.3,467.8 668.4,472.6 C676.5,477.4 685.5,482.9 692.6,487.7 C699.7,492.5 703.7,497.3 710.8,501.4 C717.9,505.4 726.9,508.7 735.0,512.0 C743.1,515.3 751.1,518.5 759.2,521.0 C767.3,523.5 775.3,524.8 783.4,527.1 C791.5,529.4 798.1,532.8 807.6,534.6 C817.1,536.4 829.8,537.6 840.3,538.0 C850.8,538.4 860.4,536.7 870.5,536.7 C880.6,536.7 890.7,537.5 900.8,538.0 C910.9,538.5 920.9,539.1 931.0,539.8 C941.1,540.4 953.2,540.9 961.3,541.9 C969.4,542.9 972.8,543.9 979.4,545.8 C986.0,547.7 997.1,551.9 1000.6,553.1" fill="none" stroke="#e4dc20" stroke-width="1.6" stroke-dasharray="4 3" shape-rendering="auto"/>
<path d="M46.0,339.3 C48.5,335.0 56.9,318.4 61.1,313.5 C65.3,308.6 66.7,311.7 71.0,309.8 C75.3,307.9 82.9,303.8 86.8,302.2 C90.7,300.6 91.6,300.0 94.4,300.0 C97.2,300.0 99.0,300.3 103.5,302.2 C108.0,304.1 114.5,309.2 121.6,311.3 C128.7,313.4 140.0,313.3 146.0,315.0 C152.0,316.7 150.5,318.0 157.7,321.4 C164.9,324.8 181.5,333.9 189.1,335.3 C196.7,336.7 197.8,331.4 203.0,330.0 C208.2,328.6 213.3,327.6 220.5,326.6 C227.7,325.6 238.8,325.7 246.0,323.8 C253.2,321.9 257.5,316.6 263.8,315.0 C270.1,313.4 276.7,311.8 283.6,314.3 C290.6,316.8 297.6,323.1 305.5,330.0 C313.4,336.9 323.9,348.1 331.2,355.7 C338.4,363.3 343.7,368.6 349.0,375.5 C354.3,382.4 357.9,389.7 362.9,397.3 C367.8,404.9 372.8,413.1 378.7,421.0 C384.6,428.9 391.9,436.1 398.5,444.7 C405.1,453.3 411.7,466.0 418.3,472.4 C424.9,478.8 431.4,480.6 438.0,483.3 C444.6,486.0 451.9,488.2 457.8,488.3 C463.7,488.4 466.3,485.7 473.3,484.1 C480.3,482.5 490.9,477.7 500.0,478.9 C509.1,480.1 521.1,487.9 527.8,491.4 C534.5,494.9 535.0,495.9 540.0,500.0 C545.0,504.1 552.6,511.6 557.5,516.3 C562.4,521.0 565.6,524.5 569.1,528.0 C572.6,531.5 574.9,534.2 578.4,537.3 C581.9,540.4 585.7,545.1 590.0,546.6 C594.3,548.1 599.5,546.2 604.0,546.0 C608.5,545.8 612.7,543.6 616.8,545.4 C620.9,547.2 621.9,553.7 628.5,557.0 C635.1,560.3 646.7,561.6 656.4,565.2 C666.1,568.8 678.5,575.8 686.6,578.5 C694.7,581.2 699.2,582.5 704.7,581.5 C710.2,580.5 713.8,575.1 719.8,572.5 C725.8,569.9 733.9,567.1 741.0,565.8 C748.1,564.5 755.1,566.0 762.2,564.9 C769.3,563.8 776.9,559.9 783.4,558.9 C789.9,557.9 794.5,559.0 801.5,558.9 C808.5,558.8 818.6,560.6 825.1,558.5 C831.6,556.4 835.2,551.2 840.3,546.4 C845.3,541.6 850.4,534.8 855.4,529.8 C860.4,524.8 865.0,520.5 870.5,516.2 C876.0,511.9 882.2,507.9 888.7,504.1 C895.2,500.3 903.8,496.0 909.8,493.5 C915.8,491.0 920.5,490.2 925.0,488.9 C929.5,487.6 932.6,485.1 937.1,485.9 C941.6,486.7 947.7,490.0 952.2,493.5 C956.7,497.0 960.3,501.3 964.3,507.1 C968.3,512.9 972.4,520.7 976.4,528.3 C980.4,535.9 984.5,543.9 988.5,552.5 C992.5,561.1 998.6,575.2 1000.6,579.7" fill="none" stroke="#e48ae4" stroke-width="1.5" shape-rendering="auto"/>
<rect x="51" y="274" width="1" height="45" fill="#d42020"/>
<rect x="46" y="302" width="10" height="14" fill="#d42020"/>
<rect x="61" y="261" width="1" height="44" fill="#d42020"/>
<rect x="57" y="267" width="9" height="34" fill="#d42020"/>
<rect x="72" y="266" width="1" height="40" fill="#4a9cce"/>
<rect x="67" y="266" width="10" height="33" fill="url(#bdots)"/>
<rect x="83" y="300" width="1" height="38" fill="#4a9cce"/>
<rect x="78" y="300" width="10" height="16" fill="url(#bdots)"/>
<rect x="93" y="311" width="1" height="23" fill="#4a9cce"/>
<rect x="89" y="315" width="9" height="9" fill="url(#bdots)"/>
<rect x="104" y="324" width="1" height="54" fill="#4a9cce"/>
<rect x="99" y="324" width="10" height="11" fill="url(#bdots)"/>
<rect x="115" y="330" width="1" height="29" fill="#4a9cce"/>
<rect x="110" y="330" width="10" height="5" fill="url(#bdots)"/>
<rect x="125" y="313" width="1" height="24" fill="#d42020"/>
<rect x="121" y="313" width="9" height="24" fill="#d42020"/>
<rect x="136" y="312" width="1" height="19" fill="#4a9cce"/>
<rect x="131" y="314" width="10" height="16" fill="url(#bdots)"/>
<rect x="147" y="320" width="1" height="10" fill="#d42020"/>
<rect x="142" y="320" width="10" height="10" fill="#d42020"/>
<rect x="157" y="320" width="1" height="36" fill="#4a9cce"/>
<rect x="153" y="320" width="9" height="23" fill="url(#bdots)"/>
<rect x="168" y="334" width="1" height="12" fill="#4a9cce"/>
<rect x="163" y="338" width="10" height="6" fill="url(#bdots)"/>
<rect x="179" y="326" width="1" height="38" fill="#4a9cce"/>
<rect x="174" y="343" width="10" height="11" fill="url(#bdots)"/>
<rect x="189" y="334" width="1" height="26" fill="#4a9cce"/>
<rect x="185" y="350" width="9" height="4" fill="url(#bdots)"/>
<rect x="200" y="271" width="1" height="86" fill="#d42020"/>
<rect x="195" y="292" width="10" height="62" fill="#d42020"/>
<rect x="211" y="254" width="1" height="63" fill="#4a9cce"/>
<rect x="206" y="292" width="10" height="14" fill="url(#bdots)"/>
<rect x="221" y="287" width="1" height="34" fill="#d42020"/>
<rect x="217" y="300" width="9" height="8" fill="#d42020"/>
<rect x="232" y="296" width="1" height="40" fill="#4a9cce"/>
<rect x="227" y="302" width="10" height="22" fill="url(#bdots)"/>
<rect x="243" y="313" width="1" height="25" fill="#d42020"/>
<rect x="238" y="313" width="10" height="9" fill="#d42020"/>
<rect x="253" y="284" width="1" height="43" fill="#d42020"/>
<rect x="249" y="287" width="9" height="31" fill="#d42020"/>
<rect x="264" y="282" width="1" height="36" fill="#4a9cce"/>
<rect x="259" y="290" width="10" height="10" fill="url(#bdots)"/>
<rect x="275" y="299" width="1" height="53" fill="#4a9cce"/>
<rect x="270" y="299" width="10" height="44" fill="url(#bdots)"/>
<rect x="285" y="323" width="1" height="36" fill="#4a9cce"/>
<rect x="281" y="342" width="9" height="17" fill="url(#bdots)"/>
<rect x="296" y="354" width="1" height="26" fill="#4a9cce"/>
<rect x="291" y="358" width="10" height="22" fill="url(#bdots)"/>
<rect x="307" y="364" width="1" height="26" fill="#4a9cce"/>
<rect x="302" y="380" width="10" height="8" fill="url(#bdots)"/>
<rect x="317" y="378" width="1" height="19" fill="#4a9cce"/>
<rect x="313" y="387" width="9" height="2" fill="url(#bdots)"/>
<rect x="328" y="376" width="1" height="32" fill="#4a9cce"/>
<rect x="323" y="388" width="10" height="20" fill="url(#bdots)"/>
<rect x="339" y="394" width="1" height="36" fill="#4a9cce"/>
<rect x="334" y="406" width="10" height="22" fill="url(#bdots)"/>
<rect x="349" y="410" width="1" height="34" fill="#d42020"/>
<rect x="345" y="419" width="9" height="9" fill="#d42020"/>
<rect x="360" y="419" width="1" height="26" fill="#4a9cce"/>
<rect x="355" y="419" width="10" height="24" fill="url(#bdots)"/>
<rect x="371" y="442" width="1" height="50" fill="#4a9cce"/>
<rect x="366" y="442" width="10" height="44" fill="url(#bdots)"/>
<rect x="381" y="450" width="1" height="41" fill="#d42020"/>
<rect x="377" y="453" width="9" height="33" fill="#d42020"/>
<rect x="392" y="440" width="1" height="47" fill="#4a9cce"/>
<rect x="387" y="453" width="10" height="25" fill="url(#bdots)"/>
<rect x="403" y="472" width="1" height="48" fill="#4a9cce"/>
<rect x="398" y="478" width="10" height="42" fill="url(#bdots)"/>
<rect x="413" y="509" width="1" height="31" fill="#4a9cce"/>
<rect x="409" y="522" width="9" height="18" fill="url(#bdots)"/>
<rect x="424" y="509" width="1" height="45" fill="#d42020"/>
<rect x="419" y="514" width="10" height="26" fill="#d42020"/>
<rect x="435" y="472" width="1" height="50" fill="#d42020"/>
<rect x="430" y="472" width="10" height="43" fill="#d42020"/>
<rect x="446" y="465" width="1" height="16" fill="#d42020"/>
<rect x="441" y="471" width="10" height="2" fill="#d42020"/>
<rect x="456" y="455" width="1" height="22" fill="#d42020"/>
<rect x="452" y="464" width="9" height="13" fill="#d42020"/>
<rect x="467" y="455" width="1" height="15" fill="#d42020"/>
<rect x="462" y="455" width="10" height="10" fill="#d42020"/>
<rect x="478" y="438" width="1" height="19" fill="#d42020"/>
<rect x="473" y="446" width="10" height="10" fill="#d42020"/>
<rect x="488" y="446" width="1" height="16" fill="#4a9cce"/>
<rect x="484" y="446" width="9" height="10" fill="url(#bdots)"/>
<rect x="499" y="450" width="1" height="50" fill="#4a9cce"/>
<rect x="494" y="455" width="10" height="45" fill="url(#bdots)"/>
<rect x="510" y="499" width="1" height="61" fill="#4a9cce"/>
<rect x="505" y="499" width="10" height="52" fill="url(#bdots)"/>
<rect x="520" y="545" width="1" height="20" fill="#d42020"/>
<rect x="516" y="548" width="9" height="3" fill="#d42020"/>
<rect x="531" y="524" width="1" height="26" fill="#d42020"/>
<rect x="526" y="532" width="10" height="18" fill="#d42020"/>
<rect x="542" y="523" width="1" height="30" fill="#4a9cce"/>
<rect x="537" y="532" width="10" height="19" fill="url(#bdots)"/>
<rect x="552" y="544" width="1" height="36" fill="#4a9cce"/>
<rect x="548" y="550" width="9" height="16" fill="url(#bdots)"/>
<rect x="563" y="535" width="1" height="31" fill="#d42020"/>
<rect x="558" y="547" width="10" height="19" fill="#d42020"/>
<rect x="574" y="541" width="1" height="19" fill="#c8c020"/>
<rect x="569" y="546" width="10" height="2" fill="#c8c020"/>
<rect x="584" y="543" width="1" height="14" fill="#c8c020"/>
<rect x="580" y="546" width="9" height="2" fill="#c8c020"/>
<rect x="595" y="523" width="1" height="30" fill="#d42020"/>
<rect x="590" y="535" width="10" height="12" fill="#d42020"/>
<rect x="606" y="528" width="1" height="16" fill="#d42020"/>
<rect x="601" y="532" width="10" height="4" fill="#d42020"/>
<rect x="616" y="529" width="1" height="28" fill="#4a9cce"/>
<rect x="612" y="531" width="9" height="22" fill="url(#bdots)"/>
<rect x="627" y="550" width="1" height="80" fill="#4a9cce"/>
<rect x="622" y="553" width="10" height="72" fill="url(#bdots)"/>
<rect x="638" y="582" width="1" height="43" fill="#d42020"/>
<rect x="633" y="585" width="10" height="40" fill="#d42020"/>
<rect x="648" y="575" width="1" height="21" fill="#d42020"/>
<rect x="644" y="585" width="9" height="3" fill="#d42020"/>
<rect x="659" y="570" width="1" height="18" fill="#d42020"/>
<rect x="654" y="574" width="10" height="14" fill="#d42020"/>
<rect x="670" y="566" width="1" height="41" fill="#4a9cce"/>
<rect x="665" y="574" width="10" height="30" fill="url(#bdots)"/>
<rect x="680" y="569" width="1" height="35" fill="#d42020"/>
<rect x="676" y="583" width="9" height="19" fill="#d42020"/>
<rect x="691" y="565" width="1" height="22" fill="#d42020"/>
<rect x="686" y="568" width="10" height="16" fill="#d42020"/>
<rect x="702" y="554" width="1" height="18" fill="#d42020"/>
<rect x="697" y="561" width="10" height="6" fill="#d42020"/>
<rect x="712" y="545" width="1" height="30" fill="#d42020"/>
<rect x="708" y="545" width="9" height="17" fill="#d42020"/>
<rect x="723" y="524" width="1" height="24" fill="#d42020"/>
<rect x="718" y="539" width="10" height="7" fill="#d42020"/>
<rect x="734" y="531" width="1" height="44" fill="#4a9cce"/>
<rect x="729" y="539" width="10" height="18" fill="url(#bdots)"/>
<rect x="744" y="545" width="1" height="46" fill="#4a9cce"/>
<rect x="740" y="553" width="9" height="34" fill="url(#bdots)"/>
<rect x="755" y="570" width="1" height="17" fill="#d42020"/>
<rect x="750" y="570" width="10" height="14" fill="#d42020"/>
<rect x="766" y="568" width="1" height="14" fill="#d42020"/>
<rect x="761" y="568" width="10" height="4" fill="#d42020"/>
<rect x="776" y="545" width="1" height="25" fill="#d42020"/>
<rect x="772" y="548" width="9" height="22" fill="#d42020"/>
<rect x="787" y="544" width="1" height="26" fill="#4a9cce"/>
<rect x="782" y="548" width="10" height="5" fill="url(#bdots)"/>
<rect x="798" y="547" width="1" height="24" fill="#4a9cce"/>
<rect x="793" y="552" width="10" height="5" fill="url(#bdots)"/>
<rect x="808" y="539" width="1" height="39" fill="#4a9cce"/>
<rect x="804" y="558" width="9" height="9" fill="url(#bdots)"/>
<rect x="819" y="535" width="1" height="35" fill="#d42020"/>
<rect x="814" y="535" width="10" height="34" fill="#d42020"/>
<rect x="830" y="511" width="1" height="25" fill="#d42020"/>
<rect x="825" y="516" width="10" height="20" fill="#d42020"/>
<rect x="840" y="498" width="1" height="39" fill="#d42020"/>
<rect x="836" y="510" width="9" height="5" fill="#d42020"/>
<rect x="851" y="471" width="1" height="42" fill="#d42020"/>
<rect x="846" y="477" width="10" height="34" fill="#d42020"/>
<rect x="862" y="463" width="1" height="20" fill="#d42020"/>
<rect x="857" y="471" width="10" height="7" fill="#d42020"/>
<rect x="872" y="461" width="1" height="18" fill="#d42020"/>
<rect x="868" y="461" width="9" height="14" fill="#d42020"/>
<rect x="883" y="460" width="1" height="39" fill="#4a9cce"/>
<rect x="878" y="461" width="10" height="24" fill="url(#bdots)"/>
<rect x="894" y="480" width="1" height="30" fill="#4a9cce"/>
<rect x="889" y="484" width="10" height="23" fill="url(#bdots)"/>
<rect x="904" y="506" width="1" height="30" fill="#4a9cce"/>
<rect x="900" y="506" width="9" height="4" fill="url(#bdots)"/>
<rect x="915" y="473" width="1" height="42" fill="#d42020"/>
<rect x="910" y="481" width="10" height="27" fill="#d42020"/>
<rect x="926" y="473" width="1" height="38" fill="#4a9cce"/>
<rect x="921" y="481" width="10" height="9" fill="url(#bdots)"/>
<rect x="937" y="478" width="1" height="43" fill="#4a9cce"/>
<rect x="932" y="490" width="10" height="4" fill="url(#bdots)"/>
<rect x="947" y="486" width="1" height="49" fill="#4a9cce"/>
<rect x="943" y="490" width="9" height="35" fill="url(#bdots)"/>
<rect x="958" y="510" width="1" height="34" fill="#4a9cce"/>
<rect x="953" y="526" width="10" height="9" fill="url(#bdots)"/>
<rect x="969" y="532" width="1" height="92" fill="#4a9cce"/>
<rect x="964" y="535" width="10" height="72" fill="url(#bdots)"/>
<rect x="979" y="600" width="1" height="84" fill="#4a9cce"/>
<rect x="975" y="608" width="9" height="76" fill="url(#bdots)"/>
<rect x="990" y="676" width="1" height="89" fill="#4a9cce"/>
<rect x="985" y="682" width="10" height="23" fill="url(#bdots)"/>
<rect x="1001" y="704" width="1" height="16" fill="#4a9cce"/>
<rect x="996" y="704" width="10" height="7" fill="url(#bdots)"/>
</svg>

<!-- price labels -->
<div class="a" style="left:1113px;top:702px;width:59px;height:17px;background:#4a8ec0;color:#fff;font-size:14px;line-height:17px;"></div>
<svg class="a" style="left:1100px;top:798px" width="73" height="22"><path d="M1,10 L9,2 H72 V21 H9 Z" fill="#eef2f6" stroke="#2a5a8a" stroke-width="1"/><path d="M1,10 L9,2 V18 Z" fill="#c0d0e0"/></svg>

<!-- status bar -->
<div class="a" style="left:42px;top:821px;width:1131px;height:23px;background:#eef2f6;border:1px solid #2a5a8a"></div>
<div class="a" style="left:361px;top:822px;width:1px;height:21px;background:#2a5a8a"></div>
<div class="a" style="left:382px;top:822px;width:686px;height:9px;background:repeating-linear-gradient(135deg,#b4cade 0,#b4cade 1px,#e6edf3 1px,#e6edf3 2.5px)"></div>
<div class="btn" style="left:364px;top:824px;width:18px;height:18px"><div class="a" style="left:3px;top:3px;border-top:5px solid transparent;border-bottom:5px solid transparent;border-right:8px solid #fff"></div></div>
<div class="btn" style="left:914px;top:824px;width:15px;height:17px"><div class="a" style="left:3px;top:4px;width:8px;height:8px;background:repeating-linear-gradient(90deg,#fff 0,#fff 1px,transparent 1px,transparent 2px)"></div></div>
<div class="btn" style="left:1069px;top:824px;width:17px;height:18px"><div class="a" style="left:5px;top:3px;border-top:5px solid transparent;border-bottom:5px solid transparent;border-left:8px solid #fff"></div></div>
<div class="a" style="left:1086px;top:822px;width:1px;height:21px;background:#2a5a8a"></div>
<div class="btn" style="left:1114px;top:824px;width:17px;height:18px"><div class="ddb" style="display:none"></div><div class="a" style="left:3px;top:5px;border-left:5px solid transparent;border-right:5px solid transparent;border-top:7px solid #fff"></div></div>
<div class="a" style="left:1133px;top:822px;width:1px;height:21px;background:#2a5a8a"></div>
<div class="btn" style="left:1135px;top:824px;width:17px;height:18px"><div class="a" style="left:3px;top:6px;width:9px;height:4px;background:#fff"></div><div class="a" style="left:5px;top:4px;width:5px;height:8px;background:#fff"></div></div>
<div class="btn" style="left:1154px;top:824px;width:16px;height:18px"><div class="a" style="left:3px;top:6px;width:9px;height:4px;background:#fff"></div></div>
<!-- tooltip -->
<div class="a" style="left:865px;top:836px;width:62px;height:20px;background:#fff;border:1px solid #111;font-size:13px;line-height:18px;"></div>

<!-- bottom taskbar -->
<div class="a" style="left:0;top:852px;width:1182px;height:7px;background:#e6eaf0"></div>
<div class="a" style="left:125px;top:852px;width:890px;height:7px;background:#d4d8e8"></div>
<div class="a" style="left:0;top:852px;width:126px;height:7px;background:linear-gradient(#1a8a1a 0,#1a8a1a 1px,#8ed880 1px,#b8e8a8);border-top-right-radius:6px"></div>
<div class="a" style="left:17px;top:856px;width:6px;height:3px;background:#e86a50"></div>
<div class="tab" style="left:315px;width:98px"></div>
<div class="tab" style="left:413px;width:100px"></div>
<div class="tab" style="left:513px;width:102px"></div>
<div class="tab" style="left:615px;width:103px"></div>
<div class="tab" style="left:718px;width:99px;background:#6a7488;border-color:#4a5468"></div>
<div class="tab" style="left:817px;width:199px"></div>
<svg class="a" style="left:0;top:0;position:absolute" width="1182" height="859">

<g stroke="#111" stroke-width="2.3" fill="none" stroke-linecap="square">
<path d="M30.5,16.3 H41.5 M33.2,13.5 V21 M38,13.5 V20.5 Q37.5,23 33.5,24.5"/>
<path d="M45,15 H52 Q50.5,21 45.5,24.5"/>
<path d="M53.2,12.5 l1,1.5 M55,12 l1,1.5" stroke-width="1.2"/>
<path d="M57.5,15.2 Q62,15 65.5,13.5 M57,18.7 H67 M62.2,15 V21 Q61.5,23.5 58,24.5"/>
<path d="M69.8,19 H77.5 L76.5,21.5 M73.5,16.5 L74.8,24.5"/>
<path d="M82,19 H92"/>
<path d="M97.8,13 V24.5 M99,18.5 L103,20.5"/>
</g>
<g aria-label="チャート表示数切替"><path transform="translate(18.36,44.91) scale(1.138,1.209)" d="M2,2 L8,1 M1,4.5 H9 M5,1.5 V6 Q5,9 2,10" fill="none" stroke="#111" stroke-width="1.15" vector-effect="non-scaling-stroke"/><path transform="translate(30.47,44.91) scale(1.138,1.209)" d="M2,5 H8 L7,7 M4,3.5 L5.5,10" fill="none" stroke="#111" stroke-width="1.15" vector-effect="non-scaling-stroke"/><path transform="translate(42.59,44.91) scale(1.138,1.209)" d="M1,5.5 H9" fill="none" stroke="#111" stroke-width="1.15" vector-effect="non-scaling-stroke"/><path transform="translate(54.70,44.91) scale(1.138,1.209)" d="M4,0.5 V10 M4,4.5 L8,6.5" fill="none" stroke="#111" stroke-width="1.15" vector-effect="non-scaling-stroke"/><path transform="translate(66.81,44.91) scale(1.138,1.209)" d="M1,1.5 H9 M1.5,3.2 H8.5 M0.5,5 H9.5 M5,0.3 V5 M5,5 Q3,8 0.5,10 M4,6.5 V9.5 L6,8.5 M5.5,6 Q7,9 9.5,10" fill="none" stroke="#111" stroke-width="1.15" vector-effect="non-scaling-stroke"/><path transform="translate(78.92,44.91) scale(1.138,1.209)" d="M2,1.5 H8 M0.5,4.5 H9.5 M5,4.5 V10 L4,9.5 M2.5,6.5 L1,9 M7.5,6.5 L9,9" fill="none" stroke="#111" stroke-width="1.15" vector-effect="non-scaling-stroke"/><path transform="translate(91.03,44.91) scale(1.138,1.209)" d="M1,1 L2,2.5 M4,1 L3,2.5 M2.5,0.5 V4.5 M0.5,3 H4.5 M1,5.5 H4.5 Q3,9 0.5,10 M1.5,7 L4.5,9.5 M6.5,0.5 Q6,3 5,4.5 M6,2.5 H9.5 M8.5,2.5 Q8,7 5,10 M6.5,5 Q7.5,8 9.5,10" fill="none" stroke="#111" stroke-width="1.15" vector-effect="non-scaling-stroke"/><path transform="translate(103.14,44.91) scale(1.138,1.209)" d="M0.5,4 H4 M2,1 V8 Q2,9 4,8.5 M5,2 H9 Q9,9 7,10 M7,2 Q7,7 4.5,10" fill="none" stroke="#111" stroke-width="1.15" vector-effect="non-scaling-stroke"/><path transform="translate(115.25,44.91) scale(1.138,1.209)" d="M0.5,1.5 H4 M2.2,0.5 V4 M0.5,3 H4 M1,4.5 L3.5,3 M5.5,1.5 H9.5 M7.5,0.5 V4 M5.5,3 H9.5 M6,4.5 L9,3 M2,5.5 H8 V10 H2 Z M2,7.7 H8" fill="none" stroke="#111" stroke-width="1.15" vector-effect="non-scaling-stroke"/></g>
<g aria-label="ユーロ/円"><path transform="translate(45.36,77.91) scale(1.143,1.209)" d="M2,2 H7 V8 M0.5,8 H9.5" fill="none" stroke="#111" stroke-width="1.15" vector-effect="non-scaling-stroke"/><path transform="translate(57.52,77.91) scale(1.143,1.209)" d="M1,5.5 H9" fill="none" stroke="#111" stroke-width="1.15" vector-effect="non-scaling-stroke"/><path transform="translate(69.68,77.91) scale(1.143,1.209)" d="M1.5,1.5 H8.5 V9 H1.5 Z" fill="none" stroke="#111" stroke-width="1.15" vector-effect="non-scaling-stroke"/><text x="81.47" y="90" textLength="3.38" lengthAdjust="spacingAndGlyphs" font-size="13" fill="#111" font-weight="normal" font-family="Liberation Sans" xml:space="preserve">/</text><path transform="translate(85.21,77.91) scale(1.143,1.209)" d="M1.5,10 V1 H8.5 V9 Q8.5,10 7,10 M5,1 V6 M1.5,6 H8.5" fill="none" stroke="#111" stroke-width="1.15" vector-effect="non-scaling-stroke"/></g>
<g aria-label="5分足"><text x="164.00" y="90" textLength="7.48" lengthAdjust="spacingAndGlyphs" font-size="13" fill="#111" font-weight="normal" font-family="Liberation Sans" xml:space="preserve">5</text><path transform="translate(171.89,77.91) scale(1.265,1.209)" d="M3.5,0.5 Q2.5,3 0.5,4.5 M6,0.5 Q7.5,3 9.5,4.5 M2,5.5 H8 Q8,9.5 6,10 M4.5,5.5 Q4,9 1.5,10" fill="none" stroke="#111" stroke-width="1.15" vector-effect="non-scaling-stroke"/><path transform="translate(185.35,77.91) scale(1.265,1.209)" d="M2,1 H8 V4 H2 Z M5,4 V9 M5,6.5 H8 M2.5,5.5 V9 M0.5,10 Q5,8.5 9.5,10" fill="none" stroke="#111" stroke-width="1.15" vector-effect="non-scaling-stroke"/></g>
<g aria-label="ローソク(BID)"><path transform="translate(238.14,77.91) scale(1.054,1.209)" d="M1.5,1.5 H8.5 V9 H1.5 Z" fill="none" stroke="#111" stroke-width="1.15" vector-effect="non-scaling-stroke"/><path transform="translate(249.35,77.91) scale(1.054,1.209)" d="M1,5.5 H9" fill="none" stroke="#111" stroke-width="1.15" vector-effect="non-scaling-stroke"/><path transform="translate(260.56,77.91) scale(1.054,1.209)" d="M1.5,2 L3,5.5 M8.5,1.5 Q7.5,7 3,10" fill="none" stroke="#111" stroke-width="1.15" vector-effect="non-scaling-stroke"/><path transform="translate(271.77,77.91) scale(1.054,1.209)" d="M4,0.5 Q3,3 1,5 M3.5,2 H8.5 Q7.5,8 2.5,10" fill="none" stroke="#111" stroke-width="1.15" vector-effect="non-scaling-stroke"/><text x="282.64" y="90" textLength="26.16" lengthAdjust="spacingAndGlyphs" font-size="13" fill="#111" font-weight="normal" font-family="Liberation Sans" xml:space="preserve">(BID)</text></g>
<g aria-label="検索"><path transform="translate(504.89,78.84) scale(1.217,1.116)" d="M2,0.5 V10 M0.5,3 H3.5 M2,4 L0.5,7 M2,4.5 L3.5,6 M6.5,0.5 L4,3.5 M6.5,0.5 L9.5,3.5 M5,4 H8.5 V6.5 H5 Z M6.7,4 V10 M4,8 H9.5 M6.7,8 L4.5,10 M6.7,8 L9.5,10" fill="none" stroke="#b8a4a8" stroke-width="1.15" vector-effect="non-scaling-stroke"/><path transform="translate(517.84,78.84) scale(1.217,1.116)" d="M0.5,1.5 H9.5 M5,0.3 V3 M1,4.5 V3 H9 V4.5 M5,3.5 L3.5,5.5 H6.5 L3,7.5 H7.5 M5,7 V10 M3,8.5 L1,10 M7,8.5 L9,10" fill="none" stroke="#b8a4a8" stroke-width="1.15" vector-effect="non-scaling-stroke"/></g>
<g aria-label="2009/01/27 23:45"><text x="46.10" y="111" textLength="86.00" lengthAdjust="spacingAndGlyphs" font-size="11" fill="#111" font-weight="normal" font-family="Liberation Sans" xml:space="preserve">2009/01/27 23:45</text></g>
<g aria-label="始値:117.97"><path transform="translate(140.02,100.77) scale(1.006,1.023)" d="M2,0.5 Q2,4 0.5,6 M0.5,3 H4 Q4,8 1,10 M1,5 L4,9 M7,0.5 L5,4 H9.5 L8.5,3 M5.5,6 H9 V10 H5.5 Z" fill="none" stroke="#111" stroke-width="1.15" vector-effect="non-scaling-stroke"/><path transform="translate(150.72,100.77) scale(1.006,1.023)" d="M2.5,0.5 L0.5,4 M1.5,3 V10 M3.5,1.5 H9.5 M6.5,0.5 V3 M4.5,3 V10 H9.5 M5.5,3 H8.5 V9 M5.5,5 H8.5 M5.5,7 H8.5" fill="none" stroke="#111" stroke-width="1.15" vector-effect="non-scaling-stroke"/><text x="161.10" y="111" textLength="35.70" lengthAdjust="spacingAndGlyphs" font-size="11" fill="#111" font-weight="normal" font-family="Liberation Sans" xml:space="preserve">:117.97</text></g>
<g aria-label="高値:118.04"><path transform="translate(204.83,100.77) scale(1.034,1.023)" d="M5,0.3 V1.5 M0.5,1.5 H9.5 M2.5,2.5 H7.5 V4.5 H2.5 Z M1,10 V5.5 H9 V10 L8,9.5 M3,7 H7 V9 H3 Z" fill="none" stroke="#111" stroke-width="1.15" vector-effect="non-scaling-stroke"/><path transform="translate(215.83,100.77) scale(1.034,1.023)" d="M2.5,0.5 L0.5,4 M1.5,3 V10 M3.5,1.5 H9.5 M6.5,0.5 V3 M4.5,3 V10 H9.5 M5.5,3 H8.5 V9 M5.5,5 H8.5 M5.5,7 H8.5" fill="none" stroke="#111" stroke-width="1.15" vector-effect="non-scaling-stroke"/><text x="226.50" y="111" textLength="36.70" lengthAdjust="spacingAndGlyphs" font-size="11" fill="#111" font-weight="normal" font-family="Liberation Sans" xml:space="preserve">:118.04</text></g>
<g aria-label="安値:117.78"><path transform="translate(271.62,100.77) scale(1.018,1.023)" d="M5,0.3 V1.5 M1,3 V1.5 H9 V3 M4,3.5 Q3,6 2,8 Q6,9 9,10 M0.5,5.5 H9.5 M7,5.5 Q6,9 1,10" fill="none" stroke="#111" stroke-width="1.15" vector-effect="non-scaling-stroke"/><path transform="translate(282.46,100.77) scale(1.018,1.023)" d="M2.5,0.5 L0.5,4 M1.5,3 V10 M3.5,1.5 H9.5 M6.5,0.5 V3 M4.5,3 V10 H9.5 M5.5,3 H8.5 V9 M5.5,5 H8.5 M5.5,7 H8.5" fill="none" stroke="#111" stroke-width="1.15" vector-effect="non-scaling-stroke"/><text x="292.96" y="111" textLength="36.14" lengthAdjust="spacingAndGlyphs" font-size="11" fill="#111" font-weight="normal" font-family="Liberation Sans" xml:space="preserve">:117.78</text></g>
<g aria-label="終値:117.95"><path transform="translate(337.52,100.77) scale(1.018,1.023)" d="M2,0.5 L0.5,3 L3,4 M3,2 L0.5,6 H4 M2,6 V10 M1,7.5 L0.5,9 M3,7.5 L4,9 M6.5,0.5 L5,3 M6,1.5 H8.5 Q7.5,4 5,5.5 M6,3 L9.5,5.5 M6.5,7 L8,8 M6,9 L8.5,10" fill="none" stroke="#111" stroke-width="1.15" vector-effect="non-scaling-stroke"/><path transform="translate(348.36,100.77) scale(1.018,1.023)" d="M2.5,0.5 L0.5,4 M1.5,3 V10 M3.5,1.5 H9.5 M6.5,0.5 V3 M4.5,3 V10 H9.5 M5.5,3 H8.5 V9 M5.5,5 H8.5 M5.5,7 H8.5" fill="none" stroke="#111" stroke-width="1.15" vector-effect="non-scaling-stroke"/><text x="358.86" y="111" textLength="36.14" lengthAdjust="spacingAndGlyphs" font-size="11" fill="#111" font-weight="normal" font-family="Liberation Sans" xml:space="preserve">:117.95</text></g>
<g aria-label="ボリンジャーバンド:"><path transform="translate(48.66,114.77) scale(0.825,1.023)" d="M0.5,3.5 H8 M4.5,0.5 V10 L3.5,9.5 M2.5,5 L0.5,8.5 M6.5,5 L8.5,8.5 M8,0.2 l0.8,1.2 M9.3,0 l0.8,1.2" fill="none" stroke="#111" stroke-width="1.15" vector-effect="non-scaling-stroke"/><path transform="translate(57.44,114.77) scale(0.825,1.023)" d="M2.5,1 V6 M7.5,0.5 V5 Q7.5,9 4,10" fill="none" stroke="#111" stroke-width="1.15" vector-effect="non-scaling-stroke"/><path transform="translate(66.21,114.77) scale(0.825,1.023)" d="M1.5,1.5 L3.5,3 M1.5,9.5 Q7,8 9,2" fill="none" stroke="#111" stroke-width="1.15" vector-effect="non-scaling-stroke"/><path transform="translate(74.98,114.77) scale(0.825,1.023)" d="M1,1.5 L3,2.5 M0.5,4.5 L2.5,5.5 M1.5,10 Q7,8 8.5,3 M8,0.2 l0.8,1.2 M9.3,0 l0.8,1.2" fill="none" stroke="#111" stroke-width="1.15" vector-effect="non-scaling-stroke"/><path transform="translate(83.76,114.77) scale(0.825,1.023)" d="M2,5 H8 L7,7 M4,3.5 L5.5,10" fill="none" stroke="#111" stroke-width="1.15" vector-effect="non-scaling-stroke"/><path transform="translate(92.53,114.77) scale(0.825,1.023)" d="M1,5.5 H9" fill="none" stroke="#111" stroke-width="1.15" vector-effect="non-scaling-stroke"/><path transform="translate(101.30,114.77) scale(0.825,1.023)" d="M3.5,2 Q3,7 0.5,10 M6,2 Q8,6 9.5,9.5 M8.2,0.2 l0.8,1.2 M9.4,0 l0.8,1.2" fill="none" stroke="#111" stroke-width="1.15" vector-effect="non-scaling-stroke"/><path transform="translate(110.08,114.77) scale(0.825,1.023)" d="M1.5,1.5 L3.5,3 M1.5,9.5 Q7,8 9,2" fill="none" stroke="#111" stroke-width="1.15" vector-effect="non-scaling-stroke"/><path transform="translate(118.85,114.77) scale(0.825,1.023)" d="M4,0.5 V10 M4,4 L8,6 M7,0.3 l0.8,1.2 M8.4,0.1 l0.8,1.2" fill="none" stroke="#111" stroke-width="1.15" vector-effect="non-scaling-stroke"/><text x="127.36" y="125" textLength="2.44" lengthAdjust="spacingAndGlyphs" font-size="11" fill="#111" font-weight="normal" font-family="Liberation Sans" xml:space="preserve">:</text></g>
<g aria-label="基準線[21]117.76"><path transform="translate(136.33,114.77) scale(1.028,1.023)" d="M2.5,0.5 V6 M7.5,0.5 V6 M0.5,2 H9.5 M2.5,3.5 H7.5 M2.5,5 H7.5 M0.5,6 H9.5 M2,7.5 H8 M5,6.5 V10 M0.5,10 H9.5" fill="none" stroke="#d01818" stroke-width="1.15" vector-effect="non-scaling-stroke"/><path transform="translate(147.26,114.77) scale(1.028,1.023)" d="M1,1 L2,2 M0.5,3.5 L1.5,4.5 M0.5,6 L2,4.5 M4,0.5 L3,2.5 M4,1.5 V6 M3.5,2 H9 M3.5,3.5 H9 M3.5,5 H9 M6.5,1 V5.5 M3.5,6 H9 M0.5,8 H9.5 M5,6.5 V10" fill="none" stroke="#d01818" stroke-width="1.15" vector-effect="non-scaling-stroke"/><path transform="translate(158.20,114.77) scale(1.028,1.023)" d="M2,0.5 L0.5,3 L3,4 M3,2 L0.5,6 H4 M2,6 V10 M1,7.5 L0.5,9 M3,7.5 L4,9 M7,0.5 L6.5,1.5 M5,1.5 H9 V5 H5 Z M5,3.2 H9 M7,5 V10 L6,9.5 M5.5,7 L4.5,9 M7,6.5 L9.5,9 M9,5.5 L8,7" fill="none" stroke="#d01818" stroke-width="1.15" vector-effect="non-scaling-stroke"/><text x="168.81" y="125" textLength="51.69" lengthAdjust="spacingAndGlyphs" font-size="11" fill="#d01818" font-weight="normal" font-family="Liberation Sans" xml:space="preserve">[21]117.76</text></g>
<g aria-label="偏差B上[2.00]118.24"><path transform="translate(450.93,114.77) scale(1.043,1.023)" d="M2.5,0.5 L0.5,4 M1.5,3 V10 M4,1 H9 M4,2.5 H9 V4 H4 Z M4,2.5 Q4,8 3,10 M5,5 H9.5 V10 M5,5 V10 M6.5,5 V10 M8,5 V10 M5,7.5 H9.5" fill="none" stroke="#4a8cc0" stroke-width="1.15" vector-effect="non-scaling-stroke"/><path transform="translate(462.03,114.77) scale(1.043,1.023)" d="M2.5,0.5 L3.5,1.5 M7.5,0.5 L6.5,1.5 M1,2 H9 M1.5,3.5 H8.5 M0.5,5 H9.5 M5,2 V5 M4,5 Q3,8 0.5,10 M3.5,7 H9 M6,7 V9.5 M3,9.5 H9.5" fill="none" stroke="#4a8cc0" stroke-width="1.15" vector-effect="non-scaling-stroke"/><text x="472.79" y="125" textLength="7.40" lengthAdjust="spacingAndGlyphs" font-size="11" fill="#4a8cc0" font-weight="normal" font-family="Liberation Sans" xml:space="preserve">B</text><path transform="translate(480.53,114.77) scale(1.043,1.023)" d="M4.5,0.5 V9.5 M4.5,4.5 H8 M0.5,9.5 H9.5" fill="none" stroke="#4a8cc0" stroke-width="1.15" vector-effect="non-scaling-stroke"/><text x="491.29" y="125" textLength="61.71" lengthAdjust="spacingAndGlyphs" font-size="11" fill="#4a8cc0" font-weight="normal" font-family="Liberation Sans" xml:space="preserve">[2.00]118.24</text></g>
<g aria-label="偏差B下[2.00]117.29"><path transform="translate(560.73,114.77) scale(1.033,1.023)" d="M2.5,0.5 L0.5,4 M1.5,3 V10 M4,1 H9 M4,2.5 H9 V4 H4 Z M4,2.5 Q4,8 3,10 M5,5 H9.5 V10 M5,5 V10 M6.5,5 V10 M8,5 V10 M5,7.5 H9.5" fill="none" stroke="#4a8cc0" stroke-width="1.15" vector-effect="non-scaling-stroke"/><path transform="translate(571.72,114.77) scale(1.033,1.023)" d="M2.5,0.5 L3.5,1.5 M7.5,0.5 L6.5,1.5 M1,2 H9 M1.5,3.5 H8.5 M0.5,5 H9.5 M5,2 V5 M4,5 Q3,8 0.5,10 M3.5,7 H9 M6,7 V9.5 M3,9.5 H9.5" fill="none" stroke="#4a8cc0" stroke-width="1.15" vector-effect="non-scaling-stroke"/><text x="582.38" y="125" textLength="7.33" lengthAdjust="spacingAndGlyphs" font-size="11" fill="#4a8cc0" font-weight="normal" font-family="Liberation Sans" xml:space="preserve">B</text><path transform="translate(590.04,114.77) scale(1.033,1.023)" d="M0.5,1 H9.5 M4.5,1 V10 M5,4 L7.5,6" fill="none" stroke="#4a8cc0" stroke-width="1.15" vector-effect="non-scaling-stroke"/><text x="600.70" y="125" textLength="61.10" lengthAdjust="spacingAndGlyphs" font-size="11" fill="#4a8cc0" font-weight="normal" font-family="Liberation Sans" xml:space="preserve">[2.00]117.29</text></g>
<g aria-label="単純移動平均:"><path transform="translate(49.26,128.77) scale(1.125,1.023)" d="M2,0.5 L3,1.5 M5,0.3 L5.5,1.5 M8,0.5 L7,1.5 M1.5,2.5 H8.5 V6.5 H1.5 Z M1.5,4.5 H8.5 M5,2.5 V10 M0.5,8 H9.5" fill="none" stroke="#111" stroke-width="1.15" vector-effect="non-scaling-stroke"/><path transform="translate(62.22,128.77) scale(1.125,1.023)" d="M2,0.5 L0.5,3 L3,4 M3,2 L0.5,6 H4 M2,6 V10 M1,7.5 L0.5,9 M3,7.5 L4,9 M5,2 H9.5 M7,0.5 V9 Q7,10 9.5,9.5 M5.5,4 V7 H9 V4" fill="none" stroke="#111" stroke-width="1.15" vector-effect="non-scaling-stroke"/><path transform="translate(75.19,128.77) scale(1.125,1.023)" d="M1,1.5 L4,0.5 M2.5,1 V10 M0.5,3.5 H4.5 M2.5,4 L0.5,7 M2.5,4.5 L4,6 M7,0.5 L5,3 M6,1.5 H9 Q8,4 5,5.5 M6.5,3 L7.5,4 M7.5,5 L5,8 M6.5,6.5 H9.5 Q8.5,9 5,10 M7,8 L8,9" fill="none" stroke="#111" stroke-width="1.15" vector-effect="non-scaling-stroke"/><path transform="translate(88.16,128.77) scale(1.125,1.023)" d="M0.5,1 H5 M2.7,0.5 V9 M1,2.5 H4.5 V6.5 H1 Z M1,4.5 H4.5 M0.5,7.5 H5 M0.5,9.5 L5,8.5 M5.5,3 H9.5 Q9.5,9 7.5,10 M7.5,0.5 Q7.5,7 5.5,10" fill="none" stroke="#111" stroke-width="1.15" vector-effect="non-scaling-stroke"/><path transform="translate(101.12,128.77) scale(1.125,1.023)" d="M1,1.5 H9 M2.5,3 L3.5,5 M7.5,3 L6.5,5 M0.5,6 H9.5 M5,1.5 V10" fill="none" stroke="#111" stroke-width="1.15" vector-effect="non-scaling-stroke"/><path transform="translate(114.09,128.77) scale(1.125,1.023)" d="M2,1 V8 M0.5,4 H3.5 M0.5,9 L4,7 M6,0.5 Q5.5,2.5 4.5,4 M6,2 H9.5 Q9.5,9 7.5,10 M6,4 L7,5 M5,7.5 L8.5,6" fill="none" stroke="#111" stroke-width="1.15" vector-effect="non-scaling-stroke"/><text x="126.20" y="139" textLength="3.60" lengthAdjust="spacingAndGlyphs" font-size="11" fill="#111" font-weight="normal" font-family="Liberation Sans" xml:space="preserve">:</text></g>
<g aria-label="短期[9]118.00"><path transform="translate(133.94,128.77) scale(1.057,1.023)" d="M2,0.5 L0.5,3 M1.5,2 H4 M0.5,4.5 H4.5 M2.5,2 V6 L0.5,10 M2.5,6.5 L4.5,9 M5,1 H9.5 M5.5,2.5 H9 V5.5 H5.5 Z M5.5,7 L6,8.5 M9,7 L8.5,8.5 M5,10 H9.5" fill="none" stroke="#e080e0" stroke-width="1.15" vector-effect="non-scaling-stroke"/><path transform="translate(145.18,128.77) scale(1.057,1.023)" d="M1.5,0.5 V7 M3.5,0.5 V7 M0.5,2 H4.5 M1.5,3.5 H3.5 M1.5,5 H3.5 M0.5,7 H4.5 M1.5,8 L0.5,9.5 M3.5,8 L4.5,9.5 M5.5,1 V8 Q5.5,10 4.5,10 M5.5,1 H9 V10 L8.5,9.5 M5.5,4 H9 M5.5,6.5 H9" fill="none" stroke="#e080e0" stroke-width="1.15" vector-effect="non-scaling-stroke"/><text x="156.09" y="139" textLength="46.91" lengthAdjust="spacingAndGlyphs" font-size="11" fill="#e080e0" font-weight="normal" font-family="Liberation Sans" xml:space="preserve">[9]118.00</text></g>
<g aria-label="長期[42]117.65"><path transform="translate(210.83,128.77) scale(1.029,1.023)" d="M2,1 V8 M2,1 H8 M2,3 H7.5 M2,5 H7.5 M0.5,6.5 H9.5 M2,8 L0.5,9.5 M4,6.5 Q6,9.5 9.5,10" fill="none" stroke="#e4e000" stroke-width="1.15" vector-effect="non-scaling-stroke"/><path transform="translate(221.77,128.77) scale(1.029,1.023)" d="M1.5,0.5 V7 M3.5,0.5 V7 M0.5,2 H4.5 M1.5,3.5 H3.5 M1.5,5 H3.5 M0.5,7 H4.5 M1.5,8 L0.5,9.5 M3.5,8 L4.5,9.5 M5.5,1 V8 Q5.5,10 4.5,10 M5.5,1 H9 V10 L8.5,9.5 M5.5,4 H9 M5.5,6.5 H9" fill="none" stroke="#e4e000" stroke-width="1.15" vector-effect="non-scaling-stroke"/><text x="232.38" y="139" textLength="51.72" lengthAdjust="spacingAndGlyphs" font-size="11" fill="#e4e000" font-weight="normal" font-family="Liberation Sans" xml:space="preserve">[42]117.65</text></g>
<g aria-label="17:00"><text x="62.50" y="155" textLength="29.50" lengthAdjust="spacingAndGlyphs" font-size="14" fill="#1a1a2a" font-weight="normal" font-family="Liberation Sans" xml:space="preserve">17:00</text></g>
<g aria-label="18:00"><text x="191.00" y="155" textLength="29.50" lengthAdjust="spacingAndGlyphs" font-size="14" fill="#1a1a2a" font-weight="normal" font-family="Liberation Sans" xml:space="preserve">18:00</text></g>
<g aria-label="19:00"><text x="319.00" y="155" textLength="29.50" lengthAdjust="spacingAndGlyphs" font-size="14" fill="#1a1a2a" font-weight="normal" font-family="Liberation Sans" xml:space="preserve">19:00</text></g>
<g aria-label="20:00"><text x="447.00" y="155" textLength="29.50" lengthAdjust="spacingAndGlyphs" font-size="14" fill="#1a1a2a" font-weight="normal" font-family="Liberation Sans" xml:space="preserve">20:00</text></g>
<g aria-label="21:00"><text x="575.00" y="155" textLength="29.50" lengthAdjust="spacingAndGlyphs" font-size="14" fill="#1a1a2a" font-weight="normal" font-family="Liberation Sans" xml:space="preserve">21:00</text></g>
<g aria-label="22:00"><text x="703.50" y="155" textLength="29.50" lengthAdjust="spacingAndGlyphs" font-size="14" fill="#1a1a2a" font-weight="normal" font-family="Liberation Sans" xml:space="preserve">22:00</text></g>
<g aria-label="23:00"><text x="832.00" y="155" textLength="29.50" lengthAdjust="spacingAndGlyphs" font-size="14" fill="#1a1a2a" font-weight="normal" font-family="Liberation Sans" xml:space="preserve">23:00</text></g>
<g aria-label="2009/01/27 23:45"><text x="886.00" y="154.5" textLength="104.40" lengthAdjust="spacingAndGlyphs" font-size="15" fill="#1a1a2a" font-weight="normal" font-family="Liberation Sans" xml:space="preserve">2009/01/27 23:45</text></g>
<g aria-label="120.00"><text x="1127.00" y="170.1" textLength="32.00" lengthAdjust="spacingAndGlyphs" font-size="11" fill="#1a1a2a" font-weight="normal" font-family="Liberation Sans" xml:space="preserve">120.00</text></g>
<g aria-label="119.80"><text x="1127.00" y="201.9" textLength="32.00" lengthAdjust="spacingAndGlyphs" font-size="11" fill="#1a1a2a" font-weight="normal" font-family="Liberation Sans" xml:space="preserve">119.80</text></g>
<g aria-label="119.60"><text x="1127.00" y="233.7" textLength="32.00" lengthAdjust="spacingAndGlyphs" font-size="11" fill="#1a1a2a" font-weight="normal" font-family="Liberation Sans" xml:space="preserve">119.60</text></g>
<g aria-label="119.40"><text x="1127.00" y="265.5" textLength="32.00" lengthAdjust="spacingAndGlyphs" font-size="11" fill="#1a1a2a" font-weight="normal" font-family="Liberation Sans" xml:space="preserve">119.40</text></g>
<g aria-label="119.20"><text x="1127.00" y="297.3" textLength="32.00" lengthAdjust="spacingAndGlyphs" font-size="11" fill="#1a1a2a" font-weight="normal" font-family="Liberation Sans" xml:space="preserve">119.20</text></g>
<g aria-label="119.00"><text x="1127.00" y="329.1" textLength="32.00" lengthAdjust="spacingAndGlyphs" font-size="11" fill="#1a1a2a" font-weight="normal" font-family="Liberation Sans" xml:space="preserve">119.00</text></g>
<g aria-label="118.80"><text x="1127.00" y="360.9" textLength="32.00" lengthAdjust="spacingAndGlyphs" font-size="11" fill="#1a1a2a" font-weight="normal" font-family="Liberation Sans" xml:space="preserve">118.80</text></g>
<g aria-label="118.60"><text x="1127.00" y="392.7" textLength="32.00" lengthAdjust="spacingAndGlyphs" font-size="11" fill="#1a1a2a" font-weight="normal" font-family="Liberation Sans" xml:space="preserve">118.60</text></g>
<g aria-label="118.40"><text x="1127.00" y="424.5" textLength="32.00" lengthAdjust="spacingAndGlyphs" font-size="11" fill="#1a1a2a" font-weight="normal" font-family="Liberation Sans" xml:space="preserve">118.40</text></g>
<g aria-label="118.20"><text x="1127.00" y="456.3" textLength="32.00" lengthAdjust="spacingAndGlyphs" font-size="11" fill="#1a1a2a" font-weight="normal" font-family="Liberation Sans" xml:space="preserve">118.20</text></g>
<g aria-label="118.00"><text x="1127.00" y="488.1" textLength="32.00" lengthAdjust="spacingAndGlyphs" font-size="11" fill="#1a1a2a" font-weight="normal" font-family="Liberation Sans" xml:space="preserve">118.00</text></g>
<g aria-label="117.80"><text x="1127.00" y="519.9" textLength="32.00" lengthAdjust="spacingAndGlyphs" font-size="11" fill="#1a1a2a" font-weight="normal" font-family="Liberation Sans" xml:space="preserve">117.80</text></g>
<g aria-label="117.60"><text x="1127.00" y="551.7" textLength="32.00" lengthAdjust="spacingAndGlyphs" font-size="11" fill="#1a1a2a" font-weight="normal" font-family="Liberation Sans" xml:space="preserve">117.60</text></g>
<g aria-label="117.40"><text x="1127.00" y="583.5" textLength="32.00" lengthAdjust="spacingAndGlyphs" font-size="11" fill="#1a1a2a" font-weight="normal" font-family="Liberation Sans" xml:space="preserve">117.40</text></g>
<g aria-label="117.20"><text x="1127.00" y="615.3" textLength="32.00" lengthAdjust="spacingAndGlyphs" font-size="11" fill="#1a1a2a" font-weight="normal" font-family="Liberation Sans" xml:space="preserve">117.20</text></g>
<g aria-label="117.00"><text x="1127.00" y="647.1" textLength="32.00" lengthAdjust="spacingAndGlyphs" font-size="11" fill="#1a1a2a" font-weight="normal" font-family="Liberation Sans" xml:space="preserve">117.00</text></g>
<g aria-label="116.80"><text x="1127.00" y="678.9" textLength="32.00" lengthAdjust="spacingAndGlyphs" font-size="11" fill="#1a1a2a" font-weight="normal" font-family="Liberation Sans" xml:space="preserve">116.80</text></g>
<g aria-label="116.40"><text x="1127.00" y="742.5" textLength="32.00" lengthAdjust="spacingAndGlyphs" font-size="11" fill="#1a1a2a" font-weight="normal" font-family="Liberation Sans" xml:space="preserve">116.40</text></g>
<g aria-label="116.20"><text x="1127.00" y="774.3" textLength="32.00" lengthAdjust="spacingAndGlyphs" font-size="11" fill="#1a1a2a" font-weight="normal" font-family="Liberation Sans" xml:space="preserve">116.20</text></g>
<g aria-label="116.58"><text x="1120.60" y="716" textLength="44.30" lengthAdjust="spacingAndGlyphs" font-size="15" fill="#ffffff" font-weight="normal" font-family="Liberation Sans" xml:space="preserve">116.58</text></g>
<g aria-label="115.96"><text x="1113.70" y="813.6" textLength="43.30" lengthAdjust="spacingAndGlyphs" font-size="14" fill="#2a4a7a" font-weight="normal" font-family="Liberation Sans" xml:space="preserve">115.96</text></g>
<g aria-label="始値:117.44"><path transform="translate(46.78,825.84) scale(1.180,1.116)" d="M2,0.5 Q2,4 0.5,6 M0.5,3 H4 Q4,8 1,10 M1,5 L4,9 M7,0.5 L5,4 H9.5 L8.5,3 M5.5,6 H9 V10 H5.5 Z" fill="none" stroke="#111" stroke-width="1.15" vector-effect="non-scaling-stroke"/><path transform="translate(59.33,825.84) scale(1.180,1.116)" d="M2.5,0.5 L0.5,4 M1.5,3 V10 M3.5,1.5 H9.5 M6.5,0.5 V3 M4.5,3 V10 H9.5 M5.5,3 H8.5 V9 M5.5,5 H8.5 M5.5,7 H8.5" fill="none" stroke="#111" stroke-width="1.15" vector-effect="non-scaling-stroke"/><text x="71.51" y="837" textLength="41.89" lengthAdjust="spacingAndGlyphs" font-size="12" fill="#111" font-weight="normal" font-family="Liberation Sans" xml:space="preserve">:117.44</text></g>
<g aria-label="高値:119.45"><path transform="translate(127.87,825.84) scale(1.173,1.116)" d="M5,0.3 V1.5 M0.5,1.5 H9.5 M2.5,2.5 H7.5 V4.5 H2.5 Z M1,10 V5.5 H9 V10 L8,9.5 M3,7 H7 V9 H3 Z" fill="none" stroke="#111" stroke-width="1.15" vector-effect="non-scaling-stroke"/><path transform="translate(140.35,825.84) scale(1.173,1.116)" d="M2.5,0.5 L0.5,4 M1.5,3 V10 M3.5,1.5 H9.5 M6.5,0.5 V3 M4.5,3 V10 H9.5 M5.5,3 H8.5 V9 M5.5,5 H8.5 M5.5,7 H8.5" fill="none" stroke="#111" stroke-width="1.15" vector-effect="non-scaling-stroke"/><text x="152.46" y="837" textLength="41.64" lengthAdjust="spacingAndGlyphs" font-size="12" fill="#111" font-weight="normal" font-family="Liberation Sans" xml:space="preserve">:119.45</text></g>
<g aria-label="安値:116.24"><path transform="translate(208.97,825.84) scale(1.166,1.116)" d="M5,0.3 V1.5 M1,3 V1.5 H9 V3 M4,3.5 Q3,6 2,8 Q6,9 9,10 M0.5,5.5 H9.5 M7,5.5 Q6,9 1,10" fill="none" stroke="#111" stroke-width="1.15" vector-effect="non-scaling-stroke"/><path transform="translate(221.38,825.84) scale(1.166,1.116)" d="M2.5,0.5 L0.5,4 M1.5,3 V10 M3.5,1.5 H9.5 M6.5,0.5 V3 M4.5,3 V10 H9.5 M5.5,3 H8.5 V9 M5.5,5 H8.5 M5.5,7 H8.5" fill="none" stroke="#111" stroke-width="1.15" vector-effect="non-scaling-stroke"/><text x="233.41" y="837" textLength="41.39" lengthAdjust="spacingAndGlyphs" font-size="12" fill="#111" font-weight="normal" font-family="Liberation Sans" xml:space="preserve">:116.24</text></g>
<g aria-label="終値:116.58"><path transform="translate(289.68,825.84) scale(1.193,1.116)" d="M2,0.5 L0.5,3 L3,4 M3,2 L0.5,6 H4 M2,6 V10 M1,7.5 L0.5,9 M3,7.5 L4,9 M6.5,0.5 L5,3 M6,1.5 H8.5 Q7.5,4 5,5.5 M6,3 L9.5,5.5 M6.5,7 L8,8 M6,9 L8.5,10" fill="none" stroke="#111" stroke-width="1.15" vector-effect="non-scaling-stroke"/><path transform="translate(302.37,825.84) scale(1.193,1.116)" d="M2.5,0.5 L0.5,4 M1.5,3 V10 M3.5,1.5 H9.5 M6.5,0.5 V3 M4.5,3 V10 H9.5 M5.5,3 H8.5 V9 M5.5,5 H8.5 M5.5,7 H8.5" fill="none" stroke="#111" stroke-width="1.15" vector-effect="non-scaling-stroke"/><text x="314.67" y="837" textLength="42.33" lengthAdjust="spacingAndGlyphs" font-size="12" fill="#111" font-weight="normal" font-family="Liberation Sans" xml:space="preserve">:116.58</text></g>
<g aria-label="100"><text x="1089.60" y="837.5" textLength="19.80" lengthAdjust="spacingAndGlyphs" font-size="13" fill="#111" font-weight="normal" font-family="Liberation Sans" xml:space="preserve">100</text></g>
<g aria-label="入力方式"><path transform="translate(870.10,837.98) scale(1.241,1.302)" d="M3,1 Q5,1 5,3 Q5,7 1,10 M5,4 Q7,8 9.5,10" fill="none" stroke="#111" stroke-width="1.15" vector-effect="non-scaling-stroke"/><path transform="translate(883.30,837.98) scale(1.241,1.302)" d="M1,3 H8.5 Q8.5,9 6.5,10 M4.5,0.5 Q4.5,7 1,10" fill="none" stroke="#111" stroke-width="1.15" vector-effect="non-scaling-stroke"/><path transform="translate(896.50,837.98) scale(1.241,1.302)" d="M4.5,0.3 V1.5 M0.5,2.5 H9.5 M3,2.5 Q3,8 0.5,10 M3,5 H8 Q8,9.5 6,10" fill="none" stroke="#111" stroke-width="1.15" vector-effect="non-scaling-stroke"/><path transform="translate(909.70,837.98) scale(1.241,1.302)" d="M0.5,3 H9.5 M1.5,5.5 H5 M3,5.5 V9 M0.5,10 L5.5,8.5 M7,0.5 Q7,8 9.5,10 M8.5,0.5 L9.3,1.5" fill="none" stroke="#111" stroke-width="1.15" vector-effect="non-scaling-stroke"/></g>
</svg>
</body></html>
